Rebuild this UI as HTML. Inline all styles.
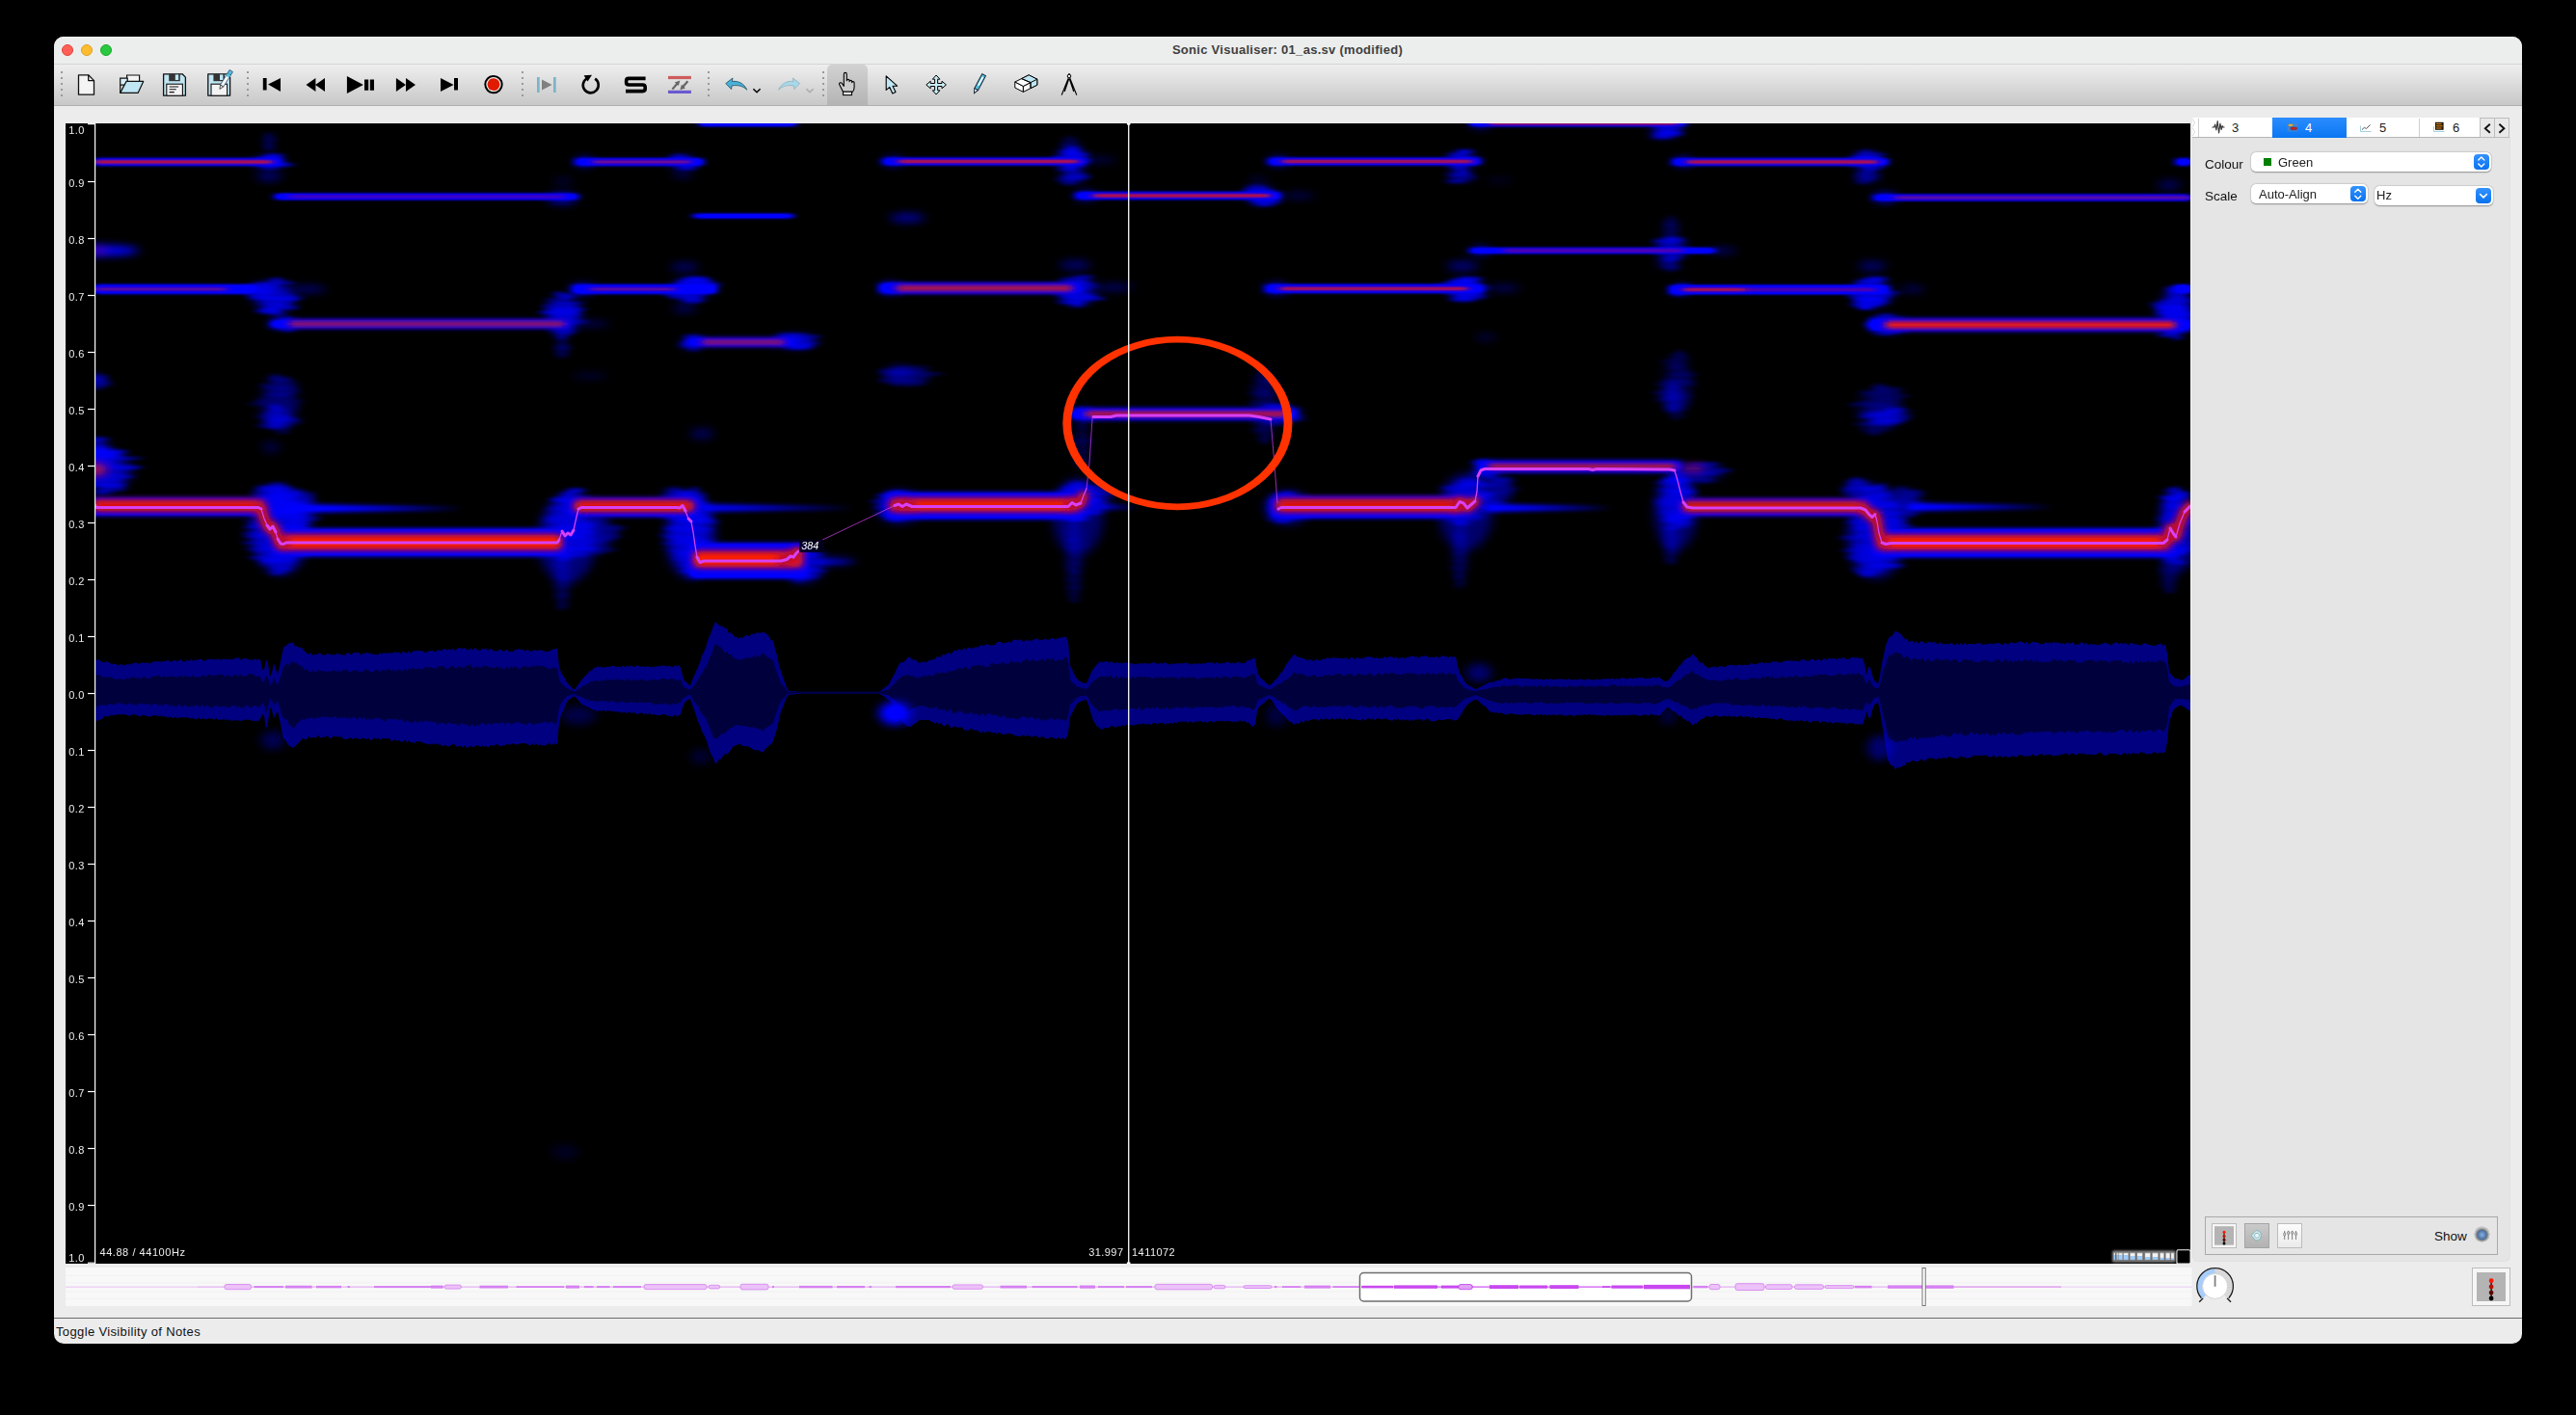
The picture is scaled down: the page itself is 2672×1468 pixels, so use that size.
<!DOCTYPE html>
<html><head><meta charset="utf-8"><title>Sonic Visualiser</title>
<style>
html,body{margin:0;padding:0;background:#000}
body{width:2672px;height:1468px;position:relative;overflow:hidden;font-family:"Liberation Sans",sans-serif;color:#000}
div,svg{position:absolute;box-sizing:border-box}
#win{left:56px;top:38px;width:2560px;height:1356px;background:#ececec;border-radius:10px}
#tsep{left:56px;top:66px;width:2560px;height:1px;background:#d4d4d4}
#tbar{left:56px;top:38px;width:2560px;height:28px;background:#eceeed;border-radius:10px 10px 0 0}
.tl{top:46px;width:12px;height:12px;border-radius:6px;border:0.5px solid}
#title{left:1135.5px;letter-spacing:.28px;top:43px;width:400px;height:18px;line-height:18px;text-align:center;font-weight:bold;font-size:13px;color:#3f3f3f;white-space:nowrap}
#tb{left:56px;top:67px;width:2560px;height:43px;background:linear-gradient(#eeeeee,#e3e3e3 30%,#d6d6d6 62%,#c8c8c8);border-bottom:1px solid #b0b0b0}
#tbsel{left:858px;top:67px;width:42px;height:42px;background:linear-gradient(#d2d2d2,#c6c6c6 40%,#b4b4b4);border-radius:5px 5px 0 0}
.hd{top:74px;width:2px;height:26px;background:repeating-linear-gradient(#999 0 2px,transparent 2px 6px)}
#tbi{left:56px;top:66px}
#ssep{left:56px;top:1367px;width:2560px;height:1px;background:#6c6c6c}
#status{left:58px;top:1374px;letter-spacing:.36px;font-size:13px;line-height:16px;white-space:nowrap;color:#111}

#pn{left:2274px;top:142px;width:330px;height:1167px;background:#e5e5e5;border-radius:0 0 6px 6px;border:1px solid #e0e0e0;border-top:none}
#tabs{left:2274px;top:122px;width:329px;height:21px;background:#fff;border-bottom:1px solid #b4b4b4}
#tab4{left:2357px;top:122px;width:77px;height:21px;background:linear-gradient(#2b8dff,#0a76f2)}
.tdv{top:123px;width:1px;height:19px;background:#d0d0d0}
.tn{top:124.6px;font-size:13px;line-height:16px;color:#222}
.sb{top:122px;width:16px;height:21px;background:#e9e9e9;border:1px solid #bdbdbd}
#pni{left:2272px;top:118px}
.lb{font-size:13.500px;line-height:16px;color:#111;white-space:nowrap}
.cb{background:#fff;border-radius:5px;box-shadow:0 .5px 1.500px rgba(0,0,0,.35),0 0 0 .5px rgba(0,0,0,.08)}
.ct{font-size:13px;line-height:15px;color:#222;white-space:nowrap}
#sw{left:2348px;top:164px;width:8px;height:8px;background:#008000}
.bb{width:16px;height:16px;border-radius:4px;background:linear-gradient(#3392ff,#0a72ee)}
#cbi{left:2430px;top:155px}
#gb{left:2287px;top:1262px;width:304px;height:40px;border:1px solid #a9a9a9}
.btn{width:26px;height:26px;border:1px solid #bcbcbc}
#led{left:2567px;top:1273px;width:15px;height:15px;border-radius:8px;background:radial-gradient(circle 7.500px at 50% 54%,#8ab0dc 0,#6089bc 40%,#4d6f9c 62%,#6c7c90 70%,#8c8c8c 80%,#c2c2c2 100%);box-shadow:0 0 0 .5px #aaa}
#bbtn{left:2564px;top:1315px;width:40px;height:40px;background:#f6f6f6;border:1px solid #bcbcbc}
#bti{left:2272px;top:1255px}

#pane{left:68px;top:128px}
#ov{left:68px;top:1311px}
</style></head>
<body>
<div id="win"></div>
<div id="tbar"></div><div id="tsep"></div>
<div class="tl" style="left:64px;background:#ff5f57;border-color:#e0443e"></div>
<div class="tl" style="left:84px;background:#febc2e;border-color:#dea123"></div>
<div class="tl" style="left:104px;background:#28c840;border-color:#1aab29"></div>
<div id="title">Sonic Visualiser: 01_as.sv (modified)</div>
<div id="tb"></div>
<div id="tbsel"></div>
<div class="hd" style="left:63px"></div>
<div class="hd" style="left:256px"></div>
<div class="hd" style="left:541px"></div>
<div class="hd" style="left:734px"></div>
<div class="hd" style="left:853px"></div>
<svg id="tbi" viewBox="56 66 1100 44" width="1100" height="44">
<path d="M81.5 77.8h10.2l5.8 5.8v14.6h-16z" fill="#f4f4f4" stroke="#111" stroke-width="1.3" stroke-linejoin="round"/>
<path d="M91.7 77.8v5.8h5.8" fill="none" stroke="#111" stroke-width="1.3" stroke-linejoin="round"/>
<path d="M131.6 78h13v10h-13z" fill="#f4f4f4" stroke="#111" stroke-width="1.2"/>
<path d="M124.7 81.2h7.5v7h-7.5z M124.7 81.2v15.2" fill="#d8eef6" stroke="#111" stroke-width="1.2"/>
<path d="M124.7 96.4l6.4-12h17.6l-5.6 12z" fill="#bfe6f2" stroke="#111" stroke-width="1.2" stroke-linejoin="round"/>
<path d="M169.6 76.8h19.5l3.3 3.3v19.1h-22.8z" fill="#bfe6f2" stroke="#111" stroke-width="1.3" stroke-linejoin="round"/>
<rect x="175.2" y="76.8" width="11.6" height="7.4" fill="#333"/>
<rect x="181.8" y="77.4" width="3.4" height="5.6" fill="#bfe6f2"/>
<rect x="172.8" y="87.2" width="16.6" height="12" fill="#f4f4f4" stroke="#111" stroke-width="1.1"/>
<path d="M175.6 90h9.6M175.6 92.8h7.2M175.6 95.6h5.2" stroke="#111" stroke-width="1.1"/>
<path d="M215.8 76.8h19.5l3.3 3.3v19.1h-22.8z" fill="#bfe6f2" stroke="#111" stroke-width="1.3" stroke-linejoin="round"/>
<rect x="221.4" y="76.8" width="11.6" height="7.4" fill="#333"/>
<rect x="228" y="77.4" width="3.4" height="5.6" fill="#bfe6f2"/>
<rect x="219" y="87.2" width="16.6" height="12" fill="#f4f4f4" stroke="#111" stroke-width="1.1"/>
<g transform="translate(238.6 75.4) rotate(32)"><rect x="-2" y="-2.2" width="4" height="4.2" fill="#55bfe0" stroke="#246" stroke-width=".7"/><rect x="-1.9" y="2" width="3.8" height="14" fill="#f8f8f8" stroke="#246" stroke-width=".7"/><rect x="-1.9" y="2" width="3.8" height="3" fill="#55bfe0"/><path d="M-1.9 16l1.9 4.2l1.9-4.2z" fill="#ddd" stroke="#333" stroke-width=".7"/></g>
<path d="M272.8 81h3.8v12.6h-3.8z M291 81v14l-13-7.6z" fill="#000"/>
<path d="M327.4 81v14l-9.9-7z M337 81v14l-9.9-7z" fill="#000"/>
<path d="M359.9 78.9v18.1l17-9z M378 82.4h4.2v11.4h-4.2z M383.8 82.4h4.2v11.4h-4.2z" fill="#000"/>
<path d="M410.9 81v14l10-7z M421 81v14l10-7z" fill="#000"/>
<path d="M457 81v14l13.6-7z M471 81h4v12.6h-4z" fill="#000"/>
<circle cx="512" cy="87.6" r="8.7" fill="#eee" stroke="#000" stroke-width="2"/><circle cx="512" cy="87.6" r="6.4" fill="#e01b00"/>
<path d="M557 80h2.7v16h-2.7z M574 80h2.7v16h-2.7z" fill="#7ab5c9"/><path d="M562 82.4v11l10.6-5.5z" fill="#808080"/>
<path d="M608.6 81.5a8 8 0 1 0 8.6 0.2" fill="none" stroke="#000" stroke-width="2.6"/><path d="M605.6 78.2l8.4-0.4l-4.4 6.6z" fill="#000"/>
<path d="M669.6 81.4h-17.4q-2.6 0-2.6 2.6v1.4q0 2.6 2.6 2.6h14.4q2.6 0 2.6 2.6v1.4q0 2.6-2.6 2.6h-17.6" fill="none" stroke="#000" stroke-width="3.6"/>
<rect x="693" y="78.9" width="23.9" height="3.2" fill="#cd5c5c"/><rect x="693" y="93.8" width="23.9" height="3.2" fill="#6a5acd"/>
<path d="M697.4 92.6L702.4 86.8" stroke="#666" stroke-width="2.2"/><path d="M705.4 83.6l-5.6 1.8l4 3.7z" fill="#666"/>
<path d="M713.4 84.2L708.4 90" stroke="#666" stroke-width="2.2"/><path d="M705.4 93.2l5.6-1.8l-4-3.7z" fill="#666"/>
<path d="M752.8 86.6l7.2-5.6l-0.6 3.4c7 -0.6 12.4 2.4 15.4 8.8c-4-4-9.4-5.4-15.8-4.2l-0.4 3.6z" fill="#4ab1d8" stroke="#1d4a60" stroke-width=".8" stroke-linejoin="round"/>
<path d="M781.4 92.2l3.6 3.6l3.6-3.6" fill="none" stroke="#000" stroke-width="1.5"/>
<path d="M829.6 86.6l-7.2-5.6l0.6 3.4c-7 -0.6-12.4 2.4-15.4 8.8c4-4 9.4-5.4 15.8-4.2l0.4 3.6z" fill="#a9d8e8" stroke="#8ab0bf" stroke-width=".8" stroke-linejoin="round"/>
<path d="M836.4 92.2l3.6 3.6l3.6-3.6" fill="none" stroke="#aaa" stroke-width="1.5"/>
<path d="M874.5 95.2l-3.8-7.4q-0.6-1.6 0.8-2q1.2-0.2 2.2 1.2l1.6 2.4v-12.2q0-1.8 1.5-1.8q1.5 0 1.5 1.8v6.6q0-1.4 1.4-1.4q1.4 0 1.4 1.4v0.8q0-1.2 1.3-1.2q1.3 0 1.3 1.2v1q0-1 1.2-1q1.2 0 1.2 1.4v4.4q0 2.6-1.6 4.8z" fill="#ccc" stroke="#000" stroke-width="1.1" stroke-linejoin="round"/>
<rect x="874.5" y="95.2" width="9" height="3.4" fill="#fff" stroke="#000" stroke-width="1.1"/>
<path d="M919.2 78.8v14.6l3.6-3l3 6.6l3.2-1.4l-3-6.4h4.6z" fill="#c0e8f4" stroke="#000" stroke-width="1.1" stroke-linejoin="round"/>
<path d="M971.1 78l3.8 4.2h-2.3v4.3h4.4v-2.3l4.4 3.8l-4.4 3.8v-2.3h-4.4v4.3h2.3l-3.8 4.2l-3.8-4.2h2.3v-4.3h-4.4v2.3l-4.4-3.8l4.4-3.8v2.3h4.4v-4.3h-2.3z" fill="#c8ecf6" stroke="#000" stroke-width="1" stroke-linejoin="round"/>
<g transform="translate(1020.6 77.6) rotate(28)"><rect x="-2.1" y="0" width="4.2" height="17" fill="#55bfe0" stroke="#123" stroke-width=".9"/><rect x="-0.7" y="2.5" width="1.6" height="10" fill="#fff"/><path d="M-2.1 17l2.1 4.6l2.1-4.6z" fill="#f4f4f4" stroke="#123" stroke-width=".9"/></g>
<path d="M1052.8 85l8.6 4.4v6l-8.6-4.4z" fill="#fff" stroke="#000" stroke-width="1"/><path d="M1061.4 89.4l14.4-7.2v6l-14.4 7.2z" fill="#fff" stroke="#000" stroke-width="1"/><path d="M1052.8 85l14.4-7.2l8.6 4.4l-14.4 7.2z" fill="#fff" stroke="#000" stroke-width="1" stroke-linejoin="round"/><path d="M1059.6 81.6l7.6-3.8l8.6 4.4v6l-6.8 3.4v-6z" fill="#bfe6f2" stroke="#000" stroke-width="1" stroke-linejoin="round"/><path d="M1059.6 81.6l9.4 4l6.8-3.4M1069 85.6v6" fill="none" stroke="#000" stroke-width="1"/>
<circle cx="1109" cy="79" r="1.8" fill="#eee" stroke="#000" stroke-width="1"/><path d="M1108.4 80.6l-7.2 18M1109.6 80.6l7.2 18M1108.6 82l-4.4 13M1109.4 82l4.4 13M1109 76v1.4" stroke="#000" stroke-width="1.2" fill="none"/>
</svg>
<div id="ssep"></div>
<div id="status">Toggle Visibility of Notes</div>
<svg id="pane" viewBox="68 128 2204 1183" width="2204" height="1183">
<defs>
<filter id="bB" filterUnits="userSpaceOnUse" x="28" y="88" width="2284" height="1263"><feGaussianBlur stdDeviation="6 4.5"/><feComponentTransfer><feFuncA type="linear" slope="1.1"/></feComponentTransfer></filter>
<filter id="bS" filterUnits="userSpaceOnUse" x="28" y="88" width="2284" height="1263"><feGaussianBlur stdDeviation="4.5 1.5"/><feComponentTransfer><feFuncA type="linear" slope="1"/></feComponentTransfer></filter>
<filter id="bL" filterUnits="userSpaceOnUse" x="28" y="88" width="2284" height="1263"><feGaussianBlur stdDeviation="5 1.4"/><feComponentTransfer><feFuncA type="linear" slope="1.55"/></feComponentTransfer></filter>
<filter id="bC" filterUnits="userSpaceOnUse" x="28" y="88" width="2284" height="1263"><feGaussianBlur stdDeviation="5 0.9"/><feComponentTransfer><feFuncA type="linear" slope="1.3"/></feComponentTransfer></filter>
<filter id="bM" filterUnits="userSpaceOnUse" x="28" y="88" width="2284" height="1263"><feGaussianBlur stdDeviation="5 2.8"/><feComponentTransfer><feFuncA type="linear" slope="1.7"/></feComponentTransfer></filter>
<filter id="bR" filterUnits="userSpaceOnUse" x="28" y="88" width="2284" height="1263"><feGaussianBlur stdDeviation="4 2.8"/><feComponentTransfer><feFuncA type="linear" slope="1.3"/></feComponentTransfer></filter>
<filter id="bR2" filterUnits="userSpaceOnUse" x="28" y="88" width="2284" height="1263"><feGaussianBlur stdDeviation="4 3"/><feComponentTransfer><feFuncA type="linear" slope="1.3"/></feComponentTransfer></filter>
<filter id="bP" filterUnits="userSpaceOnUse" x="28" y="88" width="2284" height="1263"><feGaussianBlur stdDeviation="5 3"/><feComponentTransfer><feFuncA type="linear" slope="1"/></feComponentTransfer></filter>
<filter id="bN" filterUnits="userSpaceOnUse" x="28" y="88" width="2284" height="1263"><feGaussianBlur stdDeviation="5 2.6"/><feComponentTransfer><feFuncA type="linear" slope="1.5"/></feComponentTransfer></filter>
<clipPath id="cp"><rect x="99" y="128" width="2173" height="1183"/></clipPath>
</defs>
<rect x="68" y="128" width="2204" height="1183" fill="#000"/>
<g clip-path="url(#cp)">
<polygon points="98,684 100,685 102,684.1 104,685.5 106,686.4 108,687.8 110,686.1 112,686.7 114,688.1 116,688.8 118,688.7 120,688.7 122,690.3 124,689.7 126,688.7 128,690.5 130,689.6 132,689.2 134,689.5 136,688.7 138,688 140,687.8 142,687.5 144,689.1 146,687.8 148,687.2 150,688.1 152,687.4 154,687.6 156,688.4 158,686.9 160,685.9 162,686.5 164,685.7 166,686.9 168,686.1 170,686.2 172,685.7 174,684.7 176,686 178,686.8 180,684.9 182,685.3 184,686.6 186,684.8 188,684.3 190,686.6 192,686.6 194,684.5 196,686.1 198,684.1 200,685.8 202,684.6 204,684.7 206,683.9 208,683.9 210,684.4 212,686 214,684.5 216,683.9 218,683.8 220,684 222,684.1 224,684.4 226,682.9 228,684.8 230,684.3 232,683.3 234,684.1 236,684.2 238,683.7 240,684.3 242,683.9 244,682.6 246,682.4 248,682.5 250,684.7 252,683.5 254,683 256,683.2 258,684.3 260,684.6 262,685.2 264,683.3 266,684.5 268,683.9 270,683.9 272,694.4 274,695.3 276,684 278,688.3 280,702.1 282,698 284,688 286,693.5 288,699.5 290,691.4 292,681 294,671.5 296,670.6 298,668.4 300,667.3 302,666.9 304,666.6 306,670.6 308,669.9 310,671.8 312,671.7 314,673 316,675.8 318,677.2 320,679.1 322,677 324,679.7 326,679 328,679.2 330,678 332,677.6 334,679.3 336,679.8 338,679.3 340,677.4 342,679.5 344,678.7 346,679.2 348,679.4 350,677.2 352,679.2 354,678.5 356,680.1 358,679.6 360,677.6 362,677.3 364,679.5 366,677.6 368,676.8 370,677.2 372,676.8 374,679.7 376,677.9 378,677.8 380,677 382,677.4 384,677.8 386,678.6 388,678.8 390,678.9 392,679.4 394,677.4 396,678.5 398,676.9 400,677.9 402,677.6 404,677.2 406,677.8 408,677.2 410,675.9 412,677.2 414,676.4 416,678.4 418,675.4 420,677 422,677.7 424,675.3 426,677.8 428,676.1 430,675.3 432,674.9 434,674.7 436,675.5 438,675.1 440,676.8 442,677 444,675.4 446,675.8 448,674.6 450,676 452,676.4 454,673.9 456,674.7 458,675.1 460,673.5 462,672.9 464,675 466,673.1 468,674.5 470,672.8 472,675.2 474,673.2 476,672.1 478,672.4 480,673 482,671.7 484,673.9 486,674.5 488,672.5 490,674.6 492,672.5 494,673.1 496,674.9 498,674.7 500,673.2 502,672.9 504,672.5 506,675.3 508,672.9 510,673.5 512,675.2 514,675.6 516,675.4 518,673.6 520,674.5 522,675.9 524,674.9 526,673.5 528,676.5 530,676.1 532,676.3 534,674 536,674.1 538,673.3 540,674.2 542,673.4 544,675.3 546,674.5 548,674.2 550,675.9 552,675.5 554,674.5 556,674.6 558,675.1 560,674.3 562,674.7 564,675.6 566,676 568,676 570,675.6 572,674.2 574,673.6 576,673.3 578,673 580,691.8 582,697.8 584,701 586,704 588,708.2 590,710.1 592,712.1 594,714.5 596,715.3 598,712.7 600,709.9 602,706.9 604,704.4 606,701.9 608,700.5 610,697.9 612,696 614,695.5 616,692.8 618,692.8 620,691.1 622,692.6 624,691.6 626,692.4 628,692.2 630,691.5 632,692.1 634,691 636,690.7 638,691.2 640,692 642,691.2 644,692.5 646,690.6 648,692 650,691.1 652,691.4 654,690.5 656,690.9 658,692.2 660,690.5 662,690.4 664,692 666,690.9 668,691.9 670,691.5 672,690.9 674,692.2 676,691.9 678,692.1 680,691.6 682,691.2 684,691.1 686,690.6 688,690.4 690,690.8 692,691.6 694,690.2 696,691.8 698,692 700,690.2 702,691.3 704,690.1 706,692.6 708,700.7 710,706.5 712,707.8 714,710.3 716,711.1 718,705.8 720,701.1 722,696.7 724,691.7 726,687.4 728,680.2 730,676.5 732,671.9 734,664.4 736,659.8 738,655 740,649.2 742,645 744,646.9 746,648.8 748,649.8 750,649.9 752,651.7 754,652.6 756,656.9 758,656 760,658.1 762,660.7 764,660.5 766,663 768,661 770,661.7 772,660.8 774,658.6 776,659.9 778,659.4 780,657.6 782,658.1 784,656.7 786,656 788,656.9 790,656.1 792,655.7 794,657.3 796,658 798,660.9 800,664.6 802,664.7 804,674 806,680.2 808,689.8 810,696.5 812,702.6 814,707.8 816,713.5 818,716.6 820,716.9 822,717.1 824,717.2 826,717.4 828,717.6 830,717.8 832,717.8 834,717.8 836,717.8 838,717.8 840,717.8 842,717.8 844,717.8 846,717.8 848,717.8 850,717.8 852,717.8 854,717.8 856,717.8 858,717.8 860,717.8 862,717.8 864,717.8 866,717.8 868,717.8 870,717.8 872,717.8 874,717.8 876,717.8 878,717.8 880,717.8 882,717.8 884,717.8 886,717.8 888,717.8 890,717.8 892,717.8 894,717.8 896,717.8 898,717.8 900,717.8 902,717.8 904,717.8 906,717.8 908,717.8 910,717.8 912,717.8 914,716.2 916,714.7 918,713.1 920,711.5 922,709.9 924,706.1 926,702.3 928,698.8 930,693.9 932,690.2 934,687.2 936,687.6 938,686 940,684.6 942,681.6 944,682.1 946,684.2 948,684.2 950,684.8 952,687 954,687.7 956,686.7 958,686.5 960,687.4 962,686.2 964,684.8 966,685 968,684.1 970,683.5 972,681.1 974,681.4 976,681.8 978,678.7 980,679.6 982,678.3 984,676.9 986,678.4 988,677.3 990,674.3 992,675.6 994,673.4 996,674.2 998,674.5 1000,672.1 1002,674.4 1004,671.6 1006,672.3 1008,672.5 1010,672.4 1012,670.7 1014,672.1 1016,670.1 1018,668.9 1020,669.9 1022,669.2 1024,668 1026,669.6 1028,669.5 1030,669.2 1032,669.1 1034,666.4 1036,665.7 1038,666 1040,667.4 1042,666.7 1044,666.8 1046,665.7 1048,666.7 1050,664.9 1052,663.6 1054,663.8 1056,664.3 1058,663.3 1060,664.6 1062,665.9 1064,663.4 1066,664.7 1068,664.2 1070,664.9 1072,663.6 1074,663.1 1076,662.2 1078,664.2 1080,664 1082,663.7 1084,662.4 1086,663.5 1088,663.8 1090,662.6 1092,661.8 1094,663.3 1096,662.7 1098,662 1100,661.5 1102,661.3 1104,660.4 1106,661 1108,666.1 1110,690.5 1112,694.2 1114,699.1 1116,703 1118,705.3 1120,706.4 1122,707.8 1124,708.3 1126,709.3 1128,707.1 1130,702 1132,696.9 1134,693.9 1136,691.4 1138,688.9 1140,687.1 1142,686.2 1144,687.2 1146,686.3 1148,686.3 1150,687.6 1152,686 1154,687.3 1156,688.2 1158,687.1 1160,687.7 1162,687.7 1164,688.3 1166,687.5 1168,686.9 1170,688.2 1172,687.9 1174,688.1 1176,689.3 1178,689.1 1180,689.1 1182,688.1 1184,688.5 1186,688.5 1188,687.6 1190,689 1192,688.2 1194,688.3 1196,687.2 1198,687.2 1200,688.5 1202,688.9 1204,687.4 1206,688.5 1208,687.1 1210,688.1 1212,689.4 1214,689.1 1216,688.3 1218,688.9 1220,688.3 1222,688 1224,688.5 1226,688.2 1228,688 1230,687.8 1232,687.6 1234,689.3 1236,689.2 1238,688.2 1240,688.5 1242,689 1244,688.1 1246,689.3 1248,687.8 1250,688.4 1252,687.4 1254,687.2 1256,687.6 1258,687.1 1260,689 1262,687 1264,688.2 1266,688.3 1268,688 1270,688.2 1272,686.8 1274,686.4 1276,688.3 1278,687.3 1280,688.2 1282,688.2 1284,686.3 1286,687.8 1288,687.7 1290,688.2 1292,687.6 1294,684.6 1296,685.6 1298,683.8 1300,683.3 1302,683 1304,696.5 1306,701.1 1308,703.9 1310,704.9 1312,707.2 1314,709.2 1316,710.8 1318,710.5 1320,708.4 1322,705.9 1324,704.2 1326,701.9 1328,698.5 1330,696.7 1332,693.5 1334,689.4 1336,686.9 1338,684.1 1340,681.7 1342,679.1 1344,679.4 1346,681.9 1348,681.7 1350,682.7 1352,683 1354,683.7 1356,685.6 1358,684.3 1360,684.4 1362,685.7 1364,684.7 1366,683.9 1368,685.2 1370,685 1372,683.4 1374,684.2 1376,682.4 1378,682.4 1380,683.2 1382,682.2 1384,682 1386,683.1 1388,682.2 1390,683.2 1392,682.7 1394,683.6 1396,681.7 1398,684.1 1400,683.6 1402,681.4 1404,683.3 1406,683.7 1408,681.7 1410,683.1 1412,683.3 1414,682.9 1416,681.4 1418,681.6 1420,681.3 1422,681.5 1424,682 1426,682.9 1428,681.9 1430,683.2 1432,682.8 1434,683.2 1436,681 1438,682.4 1440,682 1442,680.7 1444,682 1446,682.5 1448,681.3 1450,683.4 1452,683 1454,681.5 1456,683.2 1458,682.6 1460,682 1462,681.3 1464,681 1466,680.3 1468,681.9 1470,681.1 1472,682.9 1474,680.4 1476,681.1 1478,680.2 1480,680.8 1482,682.1 1484,681.7 1486,682.1 1488,682.3 1490,680.4 1492,682.6 1494,681.7 1496,679.9 1498,680.7 1500,681.1 1502,682.6 1504,680.6 1506,681.9 1508,681.2 1510,681.3 1512,690.8 1514,698.2 1516,701.2 1518,704.7 1520,708.8 1522,710 1524,711.6 1526,712.2 1528,713.3 1530,714.8 1532,714.7 1534,713.3 1536,712.6 1538,711.6 1540,710.5 1542,709.5 1544,708.6 1546,707.5 1548,707.9 1550,706.9 1552,706.6 1554,705.4 1556,706 1558,704.4 1560,703.4 1562,703.3 1564,703.8 1566,704.9 1568,704.4 1570,704 1572,703.8 1574,703.5 1576,703.6 1578,704 1580,703.7 1582,703.9 1584,703.5 1586,704.1 1588,704.4 1590,705.1 1592,704.3 1594,704.3 1596,704.7 1598,704.3 1600,705.2 1602,704.9 1604,704.2 1606,705.3 1608,704.1 1610,705 1612,705 1614,704.2 1616,704.7 1618,704.2 1620,704.8 1622,704.2 1624,705.5 1626,704.6 1628,704.2 1630,705.5 1632,704.8 1634,704.9 1636,705.3 1638,704.7 1640,704.3 1642,705.3 1644,705.4 1646,704.2 1648,704.5 1650,705.1 1652,705.2 1654,705.4 1656,704.3 1658,705 1660,705.2 1662,704.3 1664,704.3 1666,704.3 1668,704.1 1670,704.7 1672,703.4 1674,704.6 1676,704.5 1678,703.9 1680,704.7 1682,703 1684,703.5 1686,703.9 1688,704.5 1690,703.2 1692,703.6 1694,704.2 1696,702.8 1698,703.7 1700,703.1 1702,703.4 1704,702.6 1706,704.1 1708,704.1 1710,703.6 1712,703.9 1714,702.4 1716,703 1718,703.4 1720,702.2 1722,703.2 1724,705.1 1726,706.3 1728,707.1 1730,706.1 1732,704 1734,701.5 1736,697.7 1738,696.4 1740,693.4 1742,690.3 1744,689.4 1746,685.6 1748,684.2 1750,682.5 1752,682.3 1754,681.1 1756,678.2 1758,680.9 1760,682.2 1762,685.9 1764,687.7 1766,687.6 1768,690.3 1770,691.5 1772,692.9 1774,692.6 1776,691.9 1778,691.3 1780,692.8 1782,692 1784,691 1786,691.6 1788,691.8 1790,691.9 1792,690.1 1794,690.1 1796,689.9 1798,690 1800,690.5 1802,690.6 1804,689.3 1806,690.1 1808,690.3 1810,689.4 1812,689.9 1814,690 1816,688.2 1818,688.6 1820,689 1822,689.1 1824,688 1826,687.7 1828,686.8 1830,688.6 1832,687.3 1834,687.9 1836,687.9 1838,686.3 1840,686.4 1842,686.3 1844,686.6 1846,688 1848,686.7 1850,686.4 1852,685.3 1854,685.9 1856,685 1858,685.6 1860,685.8 1862,685.3 1864,686 1866,686.4 1868,684.8 1870,684.1 1872,684.7 1874,685.5 1876,686 1878,684.2 1880,683.8 1882,685.1 1884,685.2 1886,683.5 1888,685.2 1890,685.1 1892,682.7 1894,685 1896,683.4 1898,683 1900,683.6 1902,682.9 1904,683.6 1906,684.1 1908,682.4 1910,683.7 1912,681.8 1914,683.2 1916,684 1918,683.5 1920,682.7 1922,681.4 1924,682.4 1926,682 1928,683.1 1930,682.9 1932,682.8 1934,688.8 1936,700.4 1938,691.8 1940,692.4 1942,700.3 1944,705.9 1946,707.6 1948,709.2 1950,701.2 1952,688.3 1954,679.2 1956,669.5 1958,664.2 1960,660.5 1962,660.1 1964,658.1 1966,654.4 1968,655.5 1970,656.6 1972,658.1 1974,660.8 1976,663.6 1978,662.3 1980,665.9 1982,665 1984,664.7 1986,667.2 1988,665.2 1990,667.7 1992,665.3 1994,665.6 1996,667.3 1998,667.4 2000,665.6 2002,666.5 2004,666.8 2006,665.7 2008,667.1 2010,668.5 2012,666.1 2014,667.8 2016,668.2 2018,668.1 2020,668.2 2022,668 2024,666.9 2026,668.3 2028,669.5 2030,667.2 2032,669.3 2034,666.8 2036,669.4 2038,666.8 2040,669.1 2042,668 2044,668.1 2046,667.9 2048,668.5 2050,667.6 2052,667.5 2054,667.2 2056,668.7 2058,668.4 2060,668.4 2062,668.2 2064,667.2 2066,668.2 2068,668.1 2070,667.2 2072,667.2 2074,666.9 2076,668.9 2078,668.4 2080,666.5 2082,668.5 2084,668.1 2086,665.9 2088,666.7 2090,667.2 2092,666.8 2094,665.8 2096,665.5 2098,666 2100,667.8 2102,665.5 2104,668.5 2106,667.4 2108,665.7 2110,665.9 2112,666.4 2114,666.5 2116,667.9 2118,668.2 2120,668.3 2122,665.7 2124,667.8 2126,666.1 2128,667.8 2130,665.8 2132,666.9 2134,666.6 2136,666.6 2138,668.2 2140,667 2142,668.6 2144,666.6 2146,667.3 2148,667.4 2150,666.3 2152,668.9 2154,668.3 2156,668.7 2158,666.8 2160,666.3 2162,668.4 2164,666.7 2166,669.2 2168,668.2 2170,668.5 2172,668.1 2174,669.2 2176,669.1 2178,669.1 2180,667.6 2182,668.1 2184,666.3 2186,667.9 2188,668.3 2190,669.5 2192,667.4 2194,666.4 2196,666.4 2198,668.2 2200,666.8 2202,668.1 2204,667.2 2206,667.8 2208,669.6 2210,666.7 2212,667.5 2214,667.9 2216,668.7 2218,668.7 2220,669.7 2222,668.5 2224,667.4 2226,666.9 2228,668.9 2230,668.9 2232,669.8 2234,669.8 2236,669.7 2238,668.9 2240,667.5 2242,668.1 2244,669.9 2246,668.3 2248,677.9 2250,697 2252,699.4 2254,701.4 2256,703.9 2258,703.7 2260,704.6 2262,705.5 2264,705.4 2266,704.2 2268,702.2 2270,700.5 2272,700.2 2272,738.3 2270,736.2 2268,735.5 2266,734 2264,732.6 2262,731.7 2260,732.3 2258,733.8 2256,735.1 2254,737.1 2252,743.4 2250,748.3 2248,769.6 2246,780 2244,781.3 2242,780.9 2240,780.4 2238,782 2236,780.4 2234,780.3 2232,782.2 2230,782 2228,782.4 2226,782.2 2224,781.1 2222,780.5 2220,780.6 2218,781.9 2216,781.7 2214,781.8 2212,781 2210,783.1 2208,781.1 2206,783.1 2204,780.8 2202,782.2 2200,783.4 2198,782.7 2196,782.4 2194,781.7 2192,781.8 2190,782 2188,781.3 2186,783.7 2184,783.7 2182,783.7 2180,781.2 2178,781.1 2176,781.4 2174,783.3 2172,783 2170,782.7 2168,782.7 2166,782.6 2164,783.2 2162,781.4 2160,782 2158,781.8 2156,781.6 2154,783.1 2152,783.1 2150,781.6 2148,782 2146,783.7 2144,781.6 2142,781.7 2140,782.8 2138,782.3 2136,784.2 2134,782.9 2132,784.1 2130,784.5 2128,783.7 2126,782.2 2124,783.8 2122,782.6 2120,784.6 2118,782.1 2116,782.4 2114,783.4 2112,784.6 2110,783.8 2108,782.3 2106,784.5 2104,784.4 2102,784.6 2100,784.8 2098,783.8 2096,783.3 2094,783.2 2092,785.5 2090,784.7 2088,784.4 2086,785.3 2084,785.6 2082,785.7 2080,784.1 2078,786 2076,785 2074,784 2072,785.3 2070,785.8 2068,783.2 2066,785.7 2064,785.1 2062,785.1 2060,783.3 2058,783.8 2056,783.7 2054,783.7 2052,783.8 2050,783.9 2048,783.6 2046,784.5 2044,786.1 2042,786.3 2040,786.6 2038,785.4 2036,786 2034,783.9 2032,785.9 2030,786.9 2028,786.6 2026,786.6 2024,785.7 2022,784.8 2020,786.3 2018,787.3 2016,785.3 2014,787.6 2012,786.2 2010,786.9 2008,787.9 2006,787.1 2004,786.4 2002,786.5 2000,786.7 1998,788.1 1996,790 1994,788 1992,787.7 1990,790.1 1988,790.2 1986,789.4 1984,788.7 1982,790.3 1980,790.9 1978,790.7 1976,794 1974,794.4 1972,795.5 1970,796.6 1968,795.9 1966,798.6 1964,794.5 1962,794.7 1960,791.9 1958,787.7 1956,775 1954,763.1 1952,751.1 1950,737.4 1948,728.7 1946,730 1944,731.7 1942,736.7 1940,745.5 1938,744.1 1936,737.6 1934,746.1 1932,751.9 1930,750.9 1928,751.8 1926,750.9 1924,751.6 1922,750.1 1920,750.5 1918,749.9 1916,751 1914,750.7 1912,749.5 1910,750.5 1908,749.2 1906,750 1904,749.1 1902,750.8 1900,750.1 1898,748.5 1896,750.4 1894,748.7 1892,748.6 1890,748.3 1888,750.4 1886,747.8 1884,747.9 1882,748.3 1880,747.7 1878,749.7 1876,748.7 1874,747.6 1872,748.7 1870,748.1 1868,746.8 1866,748.2 1864,747.6 1862,748.6 1860,747.7 1858,747.5 1856,747.3 1854,747.9 1852,746.8 1850,747.3 1848,745.1 1846,745.5 1844,746.1 1842,747 1840,745.3 1838,746.2 1836,745.4 1834,744.9 1832,744.6 1830,745 1828,745 1826,745.1 1824,743.7 1822,745.1 1820,745 1818,743.7 1816,745 1814,743.2 1812,743.5 1810,743.6 1808,744.2 1806,742.7 1804,742.6 1802,743.9 1800,743.4 1798,743 1796,744.1 1794,742.2 1792,743.5 1790,742.8 1788,742.9 1786,743.4 1784,743.2 1782,743.6 1780,742.1 1778,742.8 1776,743.5 1774,743.6 1772,743.8 1770,742.8 1768,744.5 1766,745.9 1764,746.2 1762,748.3 1760,750.9 1758,750.4 1756,752.5 1754,750.5 1752,748 1750,748.6 1748,746.3 1746,746.2 1744,742.5 1742,743.1 1740,740.9 1738,738.7 1736,737.8 1734,737.3 1732,734.6 1730,733.7 1728,734.5 1726,737.6 1724,739.1 1722,741.7 1720,742.6 1718,741.4 1716,742.3 1714,741.2 1712,741.3 1710,742.3 1708,742.1 1706,741.2 1704,741.9 1702,742.8 1700,742.4 1698,741.7 1696,741.7 1694,741.4 1692,742 1690,741.2 1688,742.6 1686,741.9 1684,741.5 1682,742.9 1680,741.3 1678,742.2 1676,742 1674,742.1 1672,742.6 1670,742.5 1668,741.1 1666,742.6 1664,742.7 1662,741.9 1660,742.5 1658,741.8 1656,742.3 1654,741.4 1652,741.7 1650,741.6 1648,741.1 1646,741.9 1644,741.2 1642,741.6 1640,742.1 1638,741.7 1636,741.7 1634,742.5 1632,742.9 1630,742 1628,741.4 1626,742.5 1624,742.6 1622,742.4 1620,741.8 1618,741.1 1616,742.1 1614,741.9 1612,741.4 1610,741.5 1608,741.9 1606,741.6 1604,742.4 1602,741.2 1600,742 1598,741 1596,742.2 1594,740.8 1592,742.3 1590,741.8 1588,741.4 1586,740.4 1584,741.3 1582,740.7 1580,742.1 1578,741.2 1576,741.6 1574,741 1572,741.8 1570,740.4 1568,740.3 1566,740.2 1564,741.8 1562,740.4 1560,741.5 1558,739.6 1556,739.5 1554,740.2 1552,739.1 1550,739.4 1548,738.9 1546,738.6 1544,737 1542,734.2 1540,732.5 1538,731.5 1536,729.6 1534,727.8 1532,725.8 1530,725.7 1528,726.8 1526,728.2 1524,729.6 1522,730.9 1520,733.2 1518,736.8 1516,740.4 1514,743.6 1512,746.4 1510,747 1508,747.7 1506,746.2 1504,746.2 1502,746.1 1500,745.9 1498,747.3 1496,747.1 1494,747 1492,746.4 1490,747.4 1488,748.3 1486,748.6 1484,748.3 1482,746.3 1480,745.7 1478,747.1 1476,747.9 1474,746.1 1472,746.6 1470,746.4 1468,746.4 1466,748.1 1464,746.2 1462,748.3 1460,746.6 1458,746.9 1456,747.4 1454,746.2 1452,747.6 1450,745.4 1448,746.9 1446,746.1 1444,748.1 1442,746.9 1440,746.9 1438,745.3 1436,746.1 1434,746.3 1432,746.2 1430,745.2 1428,745.5 1426,747.4 1424,745.4 1422,746.6 1420,745 1418,746.2 1416,747.6 1414,745.2 1412,747.6 1410,747.2 1408,747 1406,746.4 1404,746 1402,746.5 1400,744.9 1398,746.3 1396,747.1 1394,745 1392,747.1 1390,744.9 1388,746.2 1386,745.3 1384,747.1 1382,745.2 1380,746.3 1378,746.7 1376,745.5 1374,745.9 1372,746.7 1370,745.3 1368,747.9 1366,746.6 1364,746.3 1362,745.9 1360,746.7 1358,747.4 1356,748.3 1354,747.1 1352,750 1350,748.1 1348,750 1346,751.3 1344,749.9 1342,752.2 1340,749.2 1338,749 1336,746.7 1334,745.1 1332,742.2 1330,741.1 1328,738.4 1326,736.7 1324,734.1 1322,730.7 1320,727.9 1318,725.3 1316,724.8 1314,726.6 1312,728.6 1310,730.2 1308,731.7 1306,733.3 1304,737.7 1302,751.3 1300,754.3 1298,753.3 1296,749.9 1294,750 1292,748.8 1290,747.8 1288,748.9 1286,747.1 1284,748.9 1282,748.5 1280,748.9 1278,748.7 1276,748.5 1274,747.9 1272,747.7 1270,749 1268,747.7 1266,747.9 1264,748.2 1262,748.1 1260,749.3 1258,749.2 1256,747.7 1254,748.9 1252,749.7 1250,748.4 1248,749.5 1246,748 1244,748.3 1242,748.4 1240,748.4 1238,750.3 1236,748.4 1234,748.4 1232,749.9 1230,748.3 1228,748.9 1226,748.6 1224,748.8 1222,749 1220,750.6 1218,749.3 1216,751.2 1214,749.6 1212,751.1 1210,750.6 1208,751.4 1206,750.1 1204,749.9 1202,750.1 1200,751.5 1198,749.9 1196,750 1194,752.2 1192,751.1 1190,751.3 1188,751.7 1186,750 1184,751.6 1182,751.4 1180,751.3 1178,752.1 1176,752.5 1174,752.6 1172,752.1 1170,752.9 1168,751.6 1166,753.4 1164,752.1 1162,754.1 1160,753 1158,754.5 1156,754.5 1154,752.7 1152,753.6 1150,755.5 1148,754.9 1146,754.9 1144,756.4 1142,757 1140,754.4 1138,754 1136,750.7 1134,747.5 1132,741.4 1130,734.6 1128,728.2 1126,725.2 1124,726.9 1122,727.3 1120,728.6 1118,729.2 1116,732.1 1114,736.2 1112,740.1 1110,743.8 1108,759.6 1106,766 1104,766.4 1102,765.6 1100,767.1 1098,764.8 1096,766.7 1094,766.2 1092,765.2 1090,764.6 1088,766.3 1086,765.9 1084,766.2 1082,764 1080,764.5 1078,765.7 1076,764.4 1074,762.9 1072,763.9 1070,764.5 1068,763.7 1066,762.6 1064,764.4 1062,762.4 1060,763.2 1058,764.2 1056,763.6 1054,763.5 1052,762.7 1050,761.4 1048,761.6 1046,760.7 1044,761.6 1042,761.7 1040,762 1038,760.5 1036,759.8 1034,761.7 1032,759.7 1030,760.4 1028,759.5 1026,759.1 1024,758.8 1022,760.8 1020,758.2 1018,759.9 1016,759.7 1014,757.6 1012,757.5 1010,757.7 1008,756.1 1006,756.4 1004,758.1 1002,757.6 1000,757.5 998,754.3 996,754.5 994,754.7 992,754.4 990,753.4 988,754.7 986,754.9 984,751.6 982,751.5 980,753.6 978,753.1 976,749.8 974,751.8 972,749.3 970,751.1 968,749 966,748.7 964,747 962,746.9 960,747 958,746.9 956,746.9 954,746.6 952,748.8 950,750 948,751.4 946,752.6 944,754.3 942,753.8 940,753.3 938,750.8 936,748.2 934,744 932,742.9 930,739.6 928,736.1 926,732.8 924,729 922,726.2 920,724.8 918,723.5 916,722 914,720.9 912,719.6 910,719.6 908,719.6 906,719.6 904,719.6 902,719.6 900,719.6 898,719.6 896,719.6 894,719.6 892,719.6 890,719.6 888,719.6 886,719.6 884,719.6 882,719.6 880,719.6 878,719.6 876,719.6 874,719.6 872,719.6 870,719.6 868,719.6 866,719.6 864,719.6 862,719.6 860,719.6 858,719.6 856,719.6 854,719.6 852,719.6 850,719.6 848,719.6 846,719.6 844,719.6 842,719.6 840,719.6 838,719.6 836,719.6 834,719.6 832,719.6 830,719.6 828,719.8 826,720 824,720.2 822,720.5 820,720.7 818,720.9 816,723.4 814,728.3 812,733.4 810,738.1 808,746.7 806,755.4 804,762.4 802,769.1 800,772 798,773 796,775.4 794,776.2 792,780.3 790,780.4 788,778.9 786,778.1 784,778.2 782,778.3 780,776.7 778,775.4 776,774.3 774,774.3 772,773.9 770,774.1 768,772.1 766,772.2 764,772.8 762,774.2 760,774.5 758,778.2 756,780.5 754,782.8 752,782.1 750,784.3 748,787.8 746,787.6 744,790.5 742,792.8 740,786.6 738,783 736,778.6 734,771.7 732,766.2 730,762 728,758.4 726,752.5 724,748.5 722,742.2 720,736.6 718,730.7 716,725.2 714,725.5 712,727.2 710,729.1 708,734 706,741 704,742 702,743.5 700,741.6 698,743.5 696,743.2 694,742.4 692,742.4 690,741.2 688,740.8 686,741.9 684,742 682,742.1 680,741.7 678,740.7 676,741.9 674,739.8 672,741 670,740.4 668,741.2 666,739.3 664,740.1 662,740.8 660,740.7 658,739 656,739.8 654,739.6 652,738.8 650,740.1 648,738.9 646,739.2 644,739.4 642,737.9 640,738.5 638,738.6 636,737.9 634,737.5 632,737.8 630,736.8 628,738.7 626,736.6 624,738 622,736.8 620,738.2 618,737.1 616,736.3 614,736.1 612,734 610,733.4 608,732.5 606,731.7 604,731 602,728.9 600,726.7 598,724.3 596,722.4 594,723 592,724.8 590,726.1 588,728.2 586,732.7 584,737.3 582,741.2 580,749.4 578,772.2 576,771.2 574,771.7 572,773.2 570,771 568,771.7 566,773.6 564,773.6 562,773.5 560,772.2 558,773.5 556,771.1 554,773.2 552,771.3 550,773.8 548,772.5 546,771.6 544,771 542,771.1 540,771.4 538,771.8 536,772.7 534,772 532,771.2 530,772.3 528,772.7 526,771.8 524,773.5 522,773.1 520,774.3 518,774.1 516,772 514,772.4 512,774.3 510,773.1 508,773.5 506,775.2 504,773.9 502,774.7 500,773.6 498,775 496,773.3 494,773.6 492,774.5 490,775.1 488,774.1 486,775.3 484,776.1 482,773.3 480,775.5 478,773.9 476,774 474,775 472,772.6 470,772 468,773 466,774.6 464,774.6 462,772.5 460,774.2 458,773.9 456,771.3 454,773 452,771.3 450,772.5 448,771.3 446,772.7 444,771.8 442,771.7 440,770.8 438,770.5 436,769.6 434,768.9 432,769.3 430,771.3 428,769.9 426,770.3 424,768.3 422,770.3 420,767.4 418,769.5 416,769.8 414,767.7 412,768.7 410,767.4 408,768 406,769 404,766.2 402,766.2 400,766.3 398,765.9 396,766.3 394,767.6 392,765.6 390,767.1 388,765.2 386,767.8 384,767.9 382,765.6 380,767.4 378,766 376,765.8 374,766.7 372,766.8 370,765.4 368,765.8 366,767 364,765.7 362,765.6 360,766.9 358,766.9 356,766.7 354,764 352,764.5 350,764.3 348,764.4 346,763.6 344,765.4 342,766.3 340,763.9 338,763.2 336,765.3 334,765 332,765.4 330,762.8 328,765.5 326,765.2 324,765 322,765.5 320,764.1 318,767.2 316,766.9 314,766.1 312,768.1 310,770.7 308,772 306,774.5 304,775.9 302,774.8 300,774.1 298,771.1 296,767.2 294,766.1 292,756 290,746.8 288,738 286,741.1 284,745.2 282,736.5 280,733.8 278,750.1 276,756.4 274,743 272,740.6 270,745.8 268,748.1 266,748.1 264,747.8 262,748.3 260,747 258,746.8 256,746.5 254,746.8 252,747 250,748.3 248,747.6 246,747.4 244,746.7 242,748 240,747.7 238,746.7 236,746.5 234,747.2 232,745.7 230,747.1 228,746.4 226,746.9 224,744.7 222,747.1 220,745.8 218,745.6 216,745.2 214,746.6 212,746 210,745.6 208,746.3 206,744.4 204,746.4 202,746 200,745 198,745.4 196,744.9 194,744.1 192,744.4 190,744.5 188,744 186,744.6 184,745.2 182,743.6 180,745 178,744.7 176,742.9 174,745.2 172,743.3 170,743.8 168,742.7 166,742.7 164,743.1 162,742.2 160,742.1 158,742.8 156,743.7 154,743.2 152,742.9 150,742 148,741.8 146,743.3 144,743.1 142,742 140,741.4 138,741 136,742.2 134,742.8 132,741.9 130,741.3 128,740.9 126,741.6 124,741.6 122,740.7 120,741.9 118,741.7 116,742.4 114,742 112,743.7 110,743 108,743.3 106,746 104,746.8 102,746.9 100,747.9 98,748.6" fill="#000080"/><polygon points="98,701.5 100,699.7 102,700 104,700.5 106,702.2 108,703.4 110,702 112,703.3 114,701.8 116,702.9 118,704.6 120,704.1 122,705.7 124,703.4 126,705 128,704.7 130,705.1 132,702.7 134,704.8 136,702.4 138,702.4 140,703.3 142,703.6 144,702.7 146,704.7 148,702.4 150,701.6 152,704.4 154,703.4 156,704 158,701.4 160,701.7 162,700.9 164,700.9 166,701.5 168,703.3 170,700.7 172,703 174,702 176,702 178,701 180,701.9 182,702.8 184,702.7 186,701.2 188,700.8 190,703 192,700.6 194,701.9 196,701.9 198,702.8 200,700.3 202,702.9 204,702 206,702.6 208,702.8 210,699.9 212,701.2 214,702.1 216,700.1 218,699.7 220,701.2 222,700.9 224,700.6 226,699.7 228,700.1 230,699.3 232,701.6 234,702 236,700.6 238,700.4 240,702 242,701.6 244,698.9 246,701.3 248,700.9 250,699.4 252,702.2 254,700.6 256,701.4 258,699.1 260,699.3 262,699.6 264,700.2 266,702.2 268,701.4 270,701.9 272,707.8 274,706.8 276,700.4 278,703.5 280,710.7 282,709.7 284,702.7 286,707.4 288,710.9 290,704.7 292,699.5 294,693 296,689.3 298,688.9 300,690.2 302,686.7 304,686.5 306,687.7 308,687.9 310,689.9 312,690.6 314,692.4 316,694.9 318,694.1 320,696.2 322,697.5 324,694.8 326,697.5 328,697 330,694.7 332,696.4 334,696.1 336,696.1 338,697 340,697 342,696 344,697.1 346,694.6 348,696.2 350,696.6 352,696 354,697.4 356,693.9 358,695.6 360,694.6 362,697.6 364,697.3 366,695.6 368,695.5 370,694.9 372,697 374,697.2 376,697.6 378,694.6 380,694.6 382,695.5 384,697 386,697.2 388,696.3 390,694.5 392,695.2 394,697.2 396,695.5 398,694.1 400,696.8 402,693.8 404,693.9 406,695.9 408,694.3 410,696.5 412,696 414,694.1 416,695.9 418,695.9 420,693.8 422,696 424,694.1 426,694.5 428,692 430,694.3 432,694.2 434,693.6 436,693.8 438,695.2 440,692.2 442,692.3 444,692.7 446,691.8 448,693.6 450,692.7 452,693.9 454,691.7 456,691.3 458,690.9 460,690.8 462,693.7 464,693.7 466,692.9 468,691.3 470,690.8 472,693.5 474,692.8 476,690.9 478,692.9 480,692.3 482,692.8 484,690.4 486,690 488,689.1 490,692.9 492,693 494,691 496,692.6 498,691.9 500,692.7 502,690.6 504,691 506,690.9 508,692.8 510,692.5 512,692.8 514,692.4 516,691.3 518,692.7 520,692.5 522,694.5 524,693.9 526,691 528,694.3 530,691.6 532,692.9 534,691.1 536,693.1 538,693.2 540,693.7 542,692.1 544,691.1 546,691.7 548,691.9 550,691.9 552,690.5 554,692.1 556,690.5 558,690.8 560,691 562,690.9 564,691.2 566,692.3 568,694 570,693.5 572,693.7 574,692.5 576,693.3 578,693.4 580,704.8 582,708.4 584,710.5 586,712.4 588,714 590,714.7 592,716 594,717 596,717.2 598,716.3 600,714.6 602,714 604,711.6 606,711.6 608,710.1 610,709.3 612,707.6 614,706.7 616,706.9 618,705.8 620,706 622,706.9 624,705.4 626,706.4 628,705.8 630,704.3 632,705.6 634,705.9 636,704.4 638,705.7 640,704.5 642,704.4 644,705.2 646,705.6 648,706.6 650,704.2 652,704.2 654,706.6 656,705.4 658,704.8 660,706.1 662,706 664,704.6 666,704.9 668,705.9 670,706 672,706.5 674,704.6 676,705.9 678,704.5 680,705.6 682,705.7 684,705.4 686,704 688,704.1 690,703.8 692,705.7 694,704.7 696,703.9 698,704 700,706 702,705.4 704,705.7 706,705 708,710.4 710,713.6 712,714.1 714,715.2 716,715.6 718,713.6 720,710.9 722,708.1 724,704.9 726,700.9 728,699.4 730,694.5 732,692.5 734,688.5 736,681.5 738,679.2 740,672.1 742,668.3 744,669.2 746,670.5 748,671.5 750,674.5 752,677.7 754,675.6 756,679.5 758,678.4 760,680.9 762,683.2 764,683.6 766,684.3 768,684.5 770,684.7 772,682.1 774,683.6 776,681.8 778,682.5 780,682.5 782,679.2 784,682.4 786,680.4 788,681.2 790,678.3 792,677.6 794,679.8 796,681.9 798,682.7 800,684.1 802,685.2 804,692.8 806,698.1 808,703.7 810,708.9 812,711 814,713.5 816,716.5 818,717.8 820,717.7 822,717.8 824,717.9 826,718 828,718.1 830,718.2 832,718.2 834,718.2 836,718.2 838,718.2 840,718.2 842,718.2 844,718.2 846,718.2 848,718.2 850,718.3 852,718.2 854,718.3 856,718.2 858,718.2 860,718.3 862,718.2 864,718.2 866,718.2 868,718.2 870,718.2 872,718.3 874,718.3 876,718.3 878,718.2 880,718.2 882,718.2 884,718.2 886,718.2 888,718.2 890,718.3 892,718.2 894,718.3 896,718.2 898,718.2 900,718.2 902,718.3 904,718.2 906,718.3 908,718.2 910,718.3 912,718.3 914,717.5 916,716.9 918,716.1 920,715.8 922,715.4 924,712.6 926,710.9 928,709.2 930,706.5 932,705.3 934,703.2 936,701 938,701.6 940,701 942,699.5 944,701.5 946,700.5 948,702.2 950,702.7 952,703.7 954,702.1 956,702.4 958,701.3 960,700.7 962,701.9 964,699.5 966,700.9 968,701.8 970,698.8 972,697.7 974,698.6 976,698.7 978,696.9 980,698 982,698.7 984,695.4 986,697.2 988,696 990,695.9 992,694.8 994,693.2 996,692.8 998,694.5 1000,692.2 1002,691.6 1004,694.2 1006,693.8 1008,691.2 1010,690.6 1012,690.4 1014,690.1 1016,689.6 1018,691.6 1020,689.7 1022,692.3 1024,691.7 1026,691.7 1028,688.1 1030,688 1032,689.2 1034,689.5 1036,688.8 1038,688.5 1040,686.6 1042,688.4 1044,688.8 1046,688.9 1048,685.9 1050,686.5 1052,686.7 1054,688 1056,686.1 1058,688.3 1060,686.5 1062,685 1064,684.2 1066,684 1068,686.7 1070,683.9 1072,684.7 1074,685.8 1076,686.3 1078,684.7 1080,684.6 1082,683.9 1084,686 1086,682.9 1088,683.5 1090,684.5 1092,682.3 1094,685.9 1096,685.5 1098,684.6 1100,684.2 1102,685.4 1104,681.9 1106,681.2 1108,686 1110,704.4 1112,708.2 1114,709 1116,711.8 1118,712.5 1120,712.8 1122,713.9 1124,714.1 1126,715.1 1128,713.8 1130,712.1 1132,708.2 1134,707.1 1136,705.3 1138,704.1 1140,702.3 1142,701.7 1144,701.9 1146,702.5 1148,701.3 1150,701.9 1152,700.7 1154,703.6 1156,703.8 1158,700.6 1160,703.9 1162,702.6 1164,702.2 1166,703.4 1168,702.5 1170,704.4 1172,704.5 1174,701.8 1176,702.9 1178,704 1180,701.8 1182,701.9 1184,702.5 1186,702.7 1188,701.4 1190,703.6 1192,702.3 1194,703.3 1196,703.9 1198,703.2 1200,701.7 1202,703.8 1204,701.8 1206,703 1208,703.4 1210,702.4 1212,702.6 1214,703.5 1216,702.4 1218,702.6 1220,702.5 1222,704.8 1224,703.4 1226,702.1 1228,702.4 1230,703.9 1232,702.1 1234,703.2 1236,702.9 1238,702.5 1240,703.3 1242,704.7 1244,703.7 1246,703.4 1248,703 1250,703 1252,702.8 1254,702.9 1256,702.7 1258,702.5 1260,704.3 1262,701.7 1264,702.8 1266,704.1 1268,701.8 1270,701.6 1272,702.3 1274,703.3 1276,703.5 1278,702.4 1280,702.1 1282,701.3 1284,701.8 1286,703.3 1288,702 1290,704 1292,703 1294,701.5 1296,701.8 1298,699.3 1300,699.4 1302,700.4 1304,708.8 1306,710.9 1308,711.5 1310,712.6 1312,713.3 1314,714.8 1316,715.3 1318,715.1 1320,714.1 1322,712.6 1324,711.3 1326,710 1328,709.4 1330,708.2 1332,705.7 1334,705.6 1336,704.1 1338,702.4 1340,700.6 1342,697.1 1344,698.4 1346,700.1 1348,697.8 1350,700.3 1352,698.6 1354,701.3 1356,702 1358,701.3 1360,701.7 1362,700.4 1364,699.9 1366,702.5 1368,702.4 1370,701.3 1372,702.2 1374,700 1376,701 1378,699.9 1380,700.5 1382,701.5 1384,699.2 1386,699.9 1388,698.6 1390,699.6 1392,700.1 1394,701.6 1396,699.5 1398,700.8 1400,698.9 1402,698.8 1404,701.2 1406,701.3 1408,699.2 1410,698.4 1412,700.5 1414,699.8 1416,700.3 1418,700.8 1420,698.2 1422,698.8 1424,700.9 1426,701.2 1428,699.5 1430,698.3 1432,699.4 1434,700.8 1436,698.4 1438,698.2 1440,699 1442,698.8 1444,697.7 1446,698.5 1448,699.4 1450,699.5 1452,699.7 1454,700.3 1456,698.5 1458,699.7 1460,697.6 1462,699.1 1464,698.6 1466,698.9 1468,697.9 1470,699.9 1472,700.6 1474,699.3 1476,698.7 1478,700.5 1480,697.7 1482,698.6 1484,699.5 1486,699.3 1488,698.3 1490,700.2 1492,698.2 1494,699.5 1496,697.1 1498,699.1 1500,700.3 1502,699.1 1504,697.4 1506,699.9 1508,698.9 1510,699.5 1512,705.4 1514,708.4 1516,709.7 1518,712.8 1520,714.4 1522,714.5 1524,716 1526,716.2 1528,716.7 1530,717 1532,716.7 1534,716.1 1536,715.6 1538,716.1 1540,714.8 1542,715.1 1544,713.7 1546,714.4 1548,713 1550,712.5 1552,713.1 1554,712.3 1556,713.1 1558,711.2 1560,711 1562,712.1 1564,712.2 1566,711.1 1568,711.7 1570,710.6 1572,710.9 1574,711 1576,711.8 1578,712.7 1580,712.7 1582,711.3 1584,711.6 1586,712.3 1588,712.3 1590,711.6 1592,711.6 1594,713 1596,711.3 1598,711.2 1600,712.8 1602,712.2 1604,710.8 1606,712.1 1608,712.5 1610,712 1612,712.3 1614,711.4 1616,712 1618,713 1620,712.7 1622,711.9 1624,712.9 1626,712.8 1628,711.1 1630,712 1632,712.5 1634,712.7 1636,712.1 1638,711.8 1640,711 1642,711.6 1644,712.3 1646,712.7 1648,711.8 1650,711.7 1652,711.7 1654,713 1656,711.5 1658,711.9 1660,710.7 1662,712.6 1664,711.7 1666,712.2 1668,712.2 1670,710.8 1672,710.8 1674,710.6 1676,710.6 1678,712.8 1680,711.2 1682,711.1 1684,712.4 1686,710.5 1688,712.4 1690,711.6 1692,711.7 1694,712.4 1696,711.5 1698,710.9 1700,712.1 1702,711.2 1704,711.7 1706,711.6 1708,712 1710,710.8 1712,712.2 1714,711.9 1716,710.6 1718,710.2 1720,710.7 1722,711.3 1724,712.7 1726,712.6 1728,713.1 1730,713.6 1732,712.4 1734,711.3 1736,709.5 1738,707.7 1740,705.3 1742,705.9 1744,703.7 1746,702.4 1748,700.2 1750,699.5 1752,699.6 1754,696.7 1756,696.2 1758,699.4 1760,699.4 1762,700 1764,702.4 1766,702.5 1768,703.8 1770,705 1772,704.9 1774,706.2 1776,705 1778,705.8 1780,705.8 1782,706.1 1784,706.7 1786,706.1 1788,706.3 1790,704.7 1792,705.3 1794,703.9 1796,706 1798,705.2 1800,703.5 1802,703.1 1804,705.5 1806,705.1 1808,705 1810,704.9 1812,705.2 1814,705.2 1816,702.9 1818,703.6 1820,703.2 1822,704.8 1824,703.8 1826,704.3 1828,701.7 1830,703.4 1832,702.6 1834,701.6 1836,703.3 1838,701.3 1840,704.1 1842,702.9 1844,703.9 1846,703.4 1848,701.3 1850,701.4 1852,703.3 1854,703.3 1856,701.8 1858,702.3 1860,703.1 1862,700.2 1864,701.4 1866,702.3 1868,702.9 1870,701.6 1872,701.7 1874,701.3 1876,702.1 1878,701.7 1880,701.2 1882,699.6 1884,701.5 1886,699.9 1888,699.5 1890,699.9 1892,700.1 1894,699.4 1896,700.8 1898,701.2 1900,701.1 1902,700.3 1904,701.1 1906,699.6 1908,698.5 1910,699.7 1912,700.4 1914,700.8 1916,699.2 1918,698.6 1920,700.3 1922,698.1 1924,700.2 1926,698.7 1928,698.2 1930,700.8 1932,699.9 1934,704.8 1936,710.6 1938,705 1940,706.4 1942,710.7 1944,712.8 1946,714.1 1948,714.4 1950,710.2 1952,702.6 1954,694.1 1956,689.4 1958,683.1 1960,679.1 1962,680.7 1964,677.5 1966,677.1 1968,676.9 1970,678.3 1972,678.1 1974,682.2 1976,682.2 1978,680.4 1980,682.4 1982,685.8 1984,683.4 1986,682.4 1988,683.9 1990,684 1992,684.4 1994,682.3 1996,686.2 1998,685.6 2000,683.3 2002,685.8 2004,686.2 2006,685.2 2008,683.6 2010,683.3 2012,684.8 2014,684.8 2016,685 2018,684.2 2020,683.9 2022,684.4 2024,686.7 2026,683.8 2028,683.9 2030,684.7 2032,687.4 2034,686.8 2036,684.5 2038,684.2 2040,683.7 2042,685.7 2044,684 2046,685.3 2048,687 2050,686.3 2052,687.6 2054,686.6 2056,685.1 2058,686.1 2060,683.9 2062,685.7 2064,686.2 2066,687.3 2068,686.3 2070,684.3 2072,684.6 2074,683.9 2076,687.3 2078,686.6 2080,683.6 2082,684.8 2084,686.7 2086,684.8 2088,687.4 2090,685.6 2092,686.2 2094,684.6 2096,686.3 2098,686.2 2100,684.4 2102,684.3 2104,685.8 2106,684.7 2108,685 2110,687.4 2112,684.3 2114,686.3 2116,687.3 2118,686.9 2120,686.3 2122,687.3 2124,686.3 2126,687.6 2128,684.6 2130,684.3 2132,684.3 2134,685.9 2136,685 2138,684.6 2140,686.4 2142,686.5 2144,685.7 2146,684.3 2148,684.9 2150,685.4 2152,684.3 2154,687.5 2156,687.8 2158,687.5 2160,687.8 2162,685.9 2164,685.6 2166,684.9 2168,684.3 2170,685.1 2172,684.8 2174,687.7 2176,685.2 2178,685.1 2180,685.1 2182,685.9 2184,685.3 2186,686.3 2188,687.7 2190,685.3 2192,685.8 2194,685.1 2196,685.5 2198,685 2200,685.1 2202,688.1 2204,686.9 2206,687.2 2208,688.4 2210,685 2212,688.5 2214,688 2216,685.1 2218,687.9 2220,685 2222,687.5 2224,686.8 2226,687.3 2228,684.8 2230,687.4 2232,685.8 2234,686.5 2236,687.8 2238,685.4 2240,685.1 2242,685.3 2244,686.4 2246,686.9 2248,693.7 2250,707.9 2252,708.5 2254,711.4 2256,711.9 2258,712.6 2260,712.2 2262,712.8 2264,711.9 2266,711.6 2268,711.2 2270,710 2272,709.6 2272,728 2270,726 2268,725.8 2266,725.6 2264,725.6 2262,724.6 2260,725.1 2258,724.9 2256,725.2 2254,727.4 2252,730.6 2250,733.3 2248,751.1 2246,756 2244,758.8 2242,758.3 2240,756.6 2238,756.9 2236,757.5 2234,760 2232,757.9 2230,756.9 2228,758.1 2226,758.1 2224,759 2222,757.4 2220,760 2218,760 2216,757.4 2214,759.7 2212,760 2210,756.6 2208,758.2 2206,760.1 2204,758.5 2202,756.9 2200,757.3 2198,757.7 2196,758.6 2194,760.1 2192,759.5 2190,760.8 2188,757.8 2186,760.9 2184,758.9 2182,759.8 2180,760.1 2178,757.3 2176,759.6 2174,758.7 2172,760.5 2170,759.3 2168,759.2 2166,757.4 2164,757.9 2162,758.7 2160,759.3 2158,758.3 2156,759.6 2154,761.4 2152,758.5 2150,759.5 2148,759.4 2146,758.2 2144,758.2 2142,761.1 2140,759.7 2138,758.7 2136,759.4 2134,758.4 2132,761.1 2130,761.9 2128,758.3 2126,759.6 2124,758.8 2122,758.8 2120,759.3 2118,759.1 2116,759.6 2114,760.1 2112,758.7 2110,761.1 2108,759 2106,758.7 2104,761.1 2102,759.6 2100,759.6 2098,761.4 2096,762.6 2094,762.3 2092,762.6 2090,762.5 2088,759.4 2086,761.3 2084,761 2082,762 2080,759.9 2078,760.1 2076,762.1 2074,760.8 2072,760.3 2070,762.9 2068,762.6 2066,762.6 2064,762.9 2062,761.1 2060,759.8 2058,763.3 2056,760.6 2054,762.8 2052,761.7 2050,760.3 2048,762.8 2046,759.6 2044,759.9 2042,762.2 2040,763.1 2038,762.9 2036,763 2034,760.2 2032,760.9 2030,762.6 2028,760.2 2026,760.6 2024,763.7 2022,764.5 2020,764.4 2018,763.5 2016,762.7 2014,761.5 2012,763.8 2010,764 2008,762.7 2006,765.5 2004,764.2 2002,765.4 2000,764.8 1998,766 1996,764.5 1994,766.5 1992,765 1990,766.4 1988,767.2 1986,763.8 1984,767.1 1982,764.9 1980,765.5 1978,768.2 1976,768.3 1974,769.1 1972,767.9 1970,769.3 1968,769.4 1966,770.8 1964,768.1 1962,767.5 1960,768.2 1958,762.9 1956,751 1954,744.4 1952,735.8 1950,727.3 1948,722.4 1946,723.8 1944,723.9 1942,726.7 1940,730.7 1938,730.2 1936,728.2 1934,732.3 1932,736.9 1930,736.9 1928,736.1 1926,736.6 1924,735.6 1922,735 1920,736.7 1918,736.5 1916,734.7 1914,734.7 1912,736.7 1910,736 1908,735.1 1906,736.4 1904,733.2 1902,734 1900,733.9 1898,734.5 1896,735.5 1894,735.9 1892,734.1 1890,734.2 1888,733.7 1886,733.9 1884,733.1 1882,734.2 1880,735.1 1878,734.6 1876,734.5 1874,733.5 1872,733 1870,732.1 1868,734.8 1866,731.9 1864,734.2 1862,734.4 1860,733.2 1858,732.7 1856,734.5 1854,733.5 1852,732.9 1850,732.3 1848,734.1 1846,731.5 1844,732.5 1842,733.6 1840,731.9 1838,733.2 1836,733.1 1834,731.4 1832,733 1830,731.8 1828,730.6 1826,732.6 1824,732.7 1822,732.5 1820,732.3 1818,732.6 1816,730.4 1814,732.1 1812,731.2 1810,731.9 1808,731.9 1806,732.2 1804,731.3 1802,731.4 1800,731 1798,731.8 1796,731.4 1794,729.8 1792,729.6 1790,729.4 1788,729.2 1786,730 1784,729.2 1782,729.3 1780,729.7 1778,729.8 1776,729.7 1774,730.8 1772,731.5 1770,731.7 1768,731.2 1766,732.4 1764,733.2 1762,732.5 1760,735.9 1758,734.3 1756,736.8 1754,735.6 1752,735.7 1750,732.2 1748,733.7 1746,730.6 1744,732.5 1742,729.4 1740,728.3 1738,729.2 1736,727.5 1734,726.7 1732,725.3 1730,725.1 1728,725.6 1726,726 1724,727.5 1722,728.8 1720,729 1718,730.1 1716,730.6 1714,730.7 1712,729 1710,729 1708,729.6 1706,728.9 1704,728.6 1702,730.5 1700,729.9 1698,730.3 1696,729.4 1694,729.8 1692,729.3 1690,729.3 1688,729.1 1686,729.2 1684,729.8 1682,729.1 1680,729.7 1678,730.4 1676,730.1 1674,730.1 1672,728.7 1670,729 1668,729.8 1666,730.2 1664,729.6 1662,729.4 1660,729.9 1658,729.6 1656,728.6 1654,730.1 1652,729.8 1650,730 1648,729.3 1646,729.9 1644,730.5 1642,729 1640,728.9 1638,728.5 1636,729 1634,728.8 1632,729.5 1630,728.6 1628,729.2 1626,728.7 1624,728.5 1622,729.9 1620,728.9 1618,729.6 1616,729.4 1614,730.4 1612,729.6 1610,729.7 1608,729.1 1606,730.6 1604,730 1602,729.5 1600,728.3 1598,728.5 1596,729.6 1594,728.2 1592,729 1590,728.9 1588,730.4 1586,729.6 1584,729.4 1582,728.3 1580,729.7 1578,728.9 1576,728.3 1574,729.6 1572,729.1 1570,730.3 1568,728.5 1566,729.8 1564,730 1562,728.2 1560,729.5 1558,729.8 1556,729.6 1554,728.9 1552,728.9 1550,728.2 1548,727.3 1546,727 1544,726.6 1542,725.8 1540,724.7 1538,724.1 1536,723.2 1534,722.4 1532,721.8 1530,721.3 1528,721.8 1526,723.1 1524,723.2 1522,724 1520,724.5 1518,726.4 1516,727.3 1514,729.5 1512,731.4 1510,733 1508,734.4 1506,733.5 1504,732.5 1502,734.6 1500,734 1498,732.9 1496,734.2 1494,733.1 1492,734.6 1490,734.2 1488,732.3 1486,732.1 1484,732.5 1482,732.5 1480,732.8 1478,732.8 1476,734.9 1474,735.4 1472,733.9 1470,733.7 1468,731.9 1466,733.3 1464,732.1 1462,733 1460,732.9 1458,732.9 1456,734.4 1454,734.8 1452,733.9 1450,734.4 1448,735 1446,733.3 1444,732 1442,731.6 1440,732.8 1438,732.8 1436,734.7 1434,733.6 1432,732 1430,734.4 1428,734.5 1426,731.4 1424,733.3 1422,733.8 1420,734.2 1418,733.4 1416,732.2 1414,734.2 1412,731.4 1410,732.6 1408,734 1406,734.3 1404,733.4 1402,732.3 1400,732.5 1398,731.7 1396,731.8 1394,733.7 1392,733.7 1390,731.4 1388,732.9 1386,733 1384,731.4 1382,733.1 1380,732.6 1378,733.2 1376,732.8 1374,734.3 1372,732.9 1370,733.4 1368,733.5 1366,734.5 1364,731.7 1362,732.9 1360,734.2 1358,732.9 1356,733.1 1354,732.1 1352,732.6 1350,733.5 1348,734.4 1346,737.2 1344,736.5 1342,737.7 1340,734.5 1338,734.6 1336,733.9 1334,730.7 1332,729.2 1330,730 1328,726.9 1326,726.7 1324,725.6 1322,723.3 1320,722.5 1318,721.5 1316,720.9 1314,722.2 1312,722.9 1310,724 1308,725 1306,725.2 1304,728.1 1302,734.6 1300,736.2 1298,736.3 1296,733.7 1294,734.4 1292,733.3 1290,734 1288,732.2 1286,733.1 1284,734.8 1282,732.7 1280,732.1 1278,732 1276,732.8 1274,732.6 1272,733.2 1270,732.2 1268,734.9 1266,733.1 1264,734.1 1262,734.2 1260,734.7 1258,733.4 1256,732.8 1254,733.7 1252,734.2 1250,732.5 1248,734.2 1246,733.9 1244,732.9 1242,734.1 1240,732.7 1238,735.3 1236,734.6 1234,735 1232,733.3 1230,733.6 1228,733.5 1226,735.2 1224,733.9 1222,733.7 1220,733.3 1218,735.6 1216,734.1 1214,736 1212,735.8 1210,733.2 1208,736.1 1206,734.4 1204,736.1 1202,734.4 1200,733.3 1198,736 1196,733.7 1194,734.7 1192,735.6 1190,734.1 1188,734.5 1186,736.2 1184,736.9 1182,734.3 1180,734.7 1178,737.1 1176,734.2 1174,734.9 1172,735.1 1170,735.6 1168,735.9 1166,735.9 1164,736.3 1162,736.3 1160,737.3 1158,735 1156,735.7 1154,736.3 1152,737.4 1150,737.1 1148,736.9 1146,737 1144,737.5 1142,737.8 1140,738.6 1138,735.4 1136,734.4 1134,732.4 1132,729.9 1130,726.3 1128,722.9 1126,721.4 1124,722.1 1122,722.3 1120,722.6 1118,723.3 1116,724.4 1114,726.9 1112,728.9 1110,730.3 1108,742 1106,747.6 1104,747.8 1102,746.5 1100,746.2 1098,746.2 1096,745.2 1094,747.4 1092,745.4 1090,745 1088,746.3 1086,746.5 1084,748 1082,745.6 1080,747.9 1078,745.7 1076,744.6 1074,747.3 1072,744.2 1070,744.1 1068,743.9 1066,745.8 1064,743.7 1062,743.6 1060,743.2 1058,745 1056,745.9 1054,746.2 1052,744.7 1050,745 1048,745.8 1046,744.3 1044,745.7 1042,742.4 1040,742.2 1038,744.5 1036,743.5 1034,742 1032,741.6 1030,742.6 1028,740.6 1026,740.4 1024,740.4 1022,743.6 1020,740.5 1018,740.3 1016,743.2 1014,741 1012,739.9 1010,742.1 1008,738.6 1006,740.1 1004,740.5 1002,739.6 1000,741.3 998,738.1 996,737.7 994,737.4 992,739.8 990,740.1 988,739.9 986,735.8 984,736.7 982,738.9 980,736.1 978,736.5 976,735.5 974,737.2 972,733.5 970,733.2 968,735.4 966,733.4 964,735.5 962,733 960,733.6 958,731.4 956,732.7 954,731.6 952,733.4 950,733.3 948,734.9 946,734.9 944,735.9 942,738.8 940,737.6 938,733.8 936,734.1 934,731.8 932,729.5 930,728.7 928,726 926,724.9 924,723.7 922,721.8 920,721 918,720.6 916,720 914,719.5 912,718.9 910,718.9 908,719 906,718.9 904,719 902,718.9 900,719 898,718.9 896,718.9 894,718.9 892,718.9 890,718.9 888,718.9 886,718.9 884,718.9 882,718.9 880,718.9 878,718.9 876,718.9 874,718.9 872,718.9 870,718.9 868,718.9 866,718.9 864,719 862,718.9 860,718.9 858,718.9 856,718.9 854,718.9 852,718.9 850,719 848,718.9 846,718.9 844,718.9 842,719 840,718.9 838,718.9 836,719 834,718.9 832,719 830,719 828,719 826,719 824,719.3 822,719.3 820,719.4 818,719.4 816,720.5 814,723 812,724.9 810,727.7 808,731.6 806,737.8 804,743.2 802,750.2 800,751.8 798,753.1 796,754.5 794,754.9 792,758.9 790,757.2 788,756.1 786,756.5 784,755.2 782,754.9 780,753.8 778,755.5 776,753.2 774,753.8 772,753 770,752.8 768,753.2 766,752.2 764,752.2 762,752.6 760,755.3 758,754.4 756,756.9 754,758.2 752,761.1 750,760.4 748,761.9 746,763.9 744,765.7 742,766.8 740,764.8 738,759.5 736,754.5 734,750.6 732,744.8 730,742.5 728,740.5 726,736.5 724,732.1 722,730.5 720,727.2 718,724.5 716,721.1 714,721.1 712,722.5 710,723.2 708,725 706,728.8 704,729.6 702,729.8 700,731.2 698,729.4 696,731.2 694,731 692,730.7 690,728.7 688,731.1 686,730.9 684,729.2 682,730.7 680,730.9 678,730.7 676,729 674,728.7 672,728.6 670,729.3 668,728.6 666,729.8 664,728 662,728.9 660,729.5 658,728.3 656,729.2 654,727.8 652,729.4 650,728.7 648,729.1 646,728 644,727.7 642,728.7 640,729.4 638,727.4 636,727.7 634,726.8 632,729 630,727 628,728.3 626,727.1 624,726.8 622,727.8 620,727.3 618,728.5 616,726.6 614,727.2 612,727 610,725.2 608,725.9 606,724.3 604,723.5 602,722.4 600,722.2 598,721.2 596,720 594,720.5 592,720.8 590,721.7 588,722.2 586,724.2 584,726.8 582,729.6 580,734.9 578,748.4 576,751.9 574,749.8 572,749.1 570,749.2 568,750.8 566,748.6 564,748.9 562,750.4 560,749.5 558,750.9 556,750.6 554,752 552,752.1 550,749.3 548,750.2 546,752.3 544,751.3 542,750.7 540,750.8 538,749.3 536,749.4 534,749.4 532,751.1 530,751.7 528,750.1 526,749.4 524,752.3 522,749.1 520,749.8 518,750.3 516,750 514,750.7 512,749.8 510,752.1 508,751.3 506,749.9 504,753.6 502,750.1 500,750.3 498,751.4 496,753.1 494,752.2 492,754.2 490,750.6 488,753.6 486,753.6 484,751.7 482,751.5 480,750.5 478,750.3 476,753.7 474,751.6 472,750.5 470,751 468,750.7 466,749.4 464,750.4 462,752.5 460,749 458,750.2 456,750.2 454,752.2 452,749.2 450,748.9 448,748.7 446,747.9 444,748.7 442,747.6 440,748.3 438,749.8 436,747.1 434,749.2 432,749.6 430,747.8 428,749.6 426,749.4 424,748.9 422,747 420,749.6 418,747.6 416,745.7 414,747.3 412,746.2 410,745.7 408,746.4 406,746.6 404,745.8 402,745 400,748.5 398,748 396,745.9 394,745.3 392,745.5 390,744.3 388,745.8 386,746.2 384,747.2 382,744.6 380,747.5 378,743.9 376,746 374,744.8 372,744 370,746.8 368,744.6 366,743.5 364,746.1 362,743.8 360,745.5 358,744.2 356,744.9 354,743.8 352,744.8 350,745.6 348,742.9 346,743.8 344,745.2 342,744.2 340,743.4 338,743.5 336,744.6 334,742.4 332,744.9 330,743.7 328,745 326,745.5 324,744.2 322,744.9 320,745.5 318,744.9 316,746.8 314,745.7 312,747.4 310,749.3 308,750.2 306,754 304,755.5 302,753.1 300,751.8 298,747.6 296,745.4 294,745.4 292,740.2 290,733.5 288,726.7 286,729.9 284,730.8 282,726.5 280,725 278,734.3 276,740.6 274,730.7 272,729.3 270,732.9 268,733.8 266,732.4 264,731.9 262,732.4 260,734.9 258,732.7 256,731.6 254,732.7 252,734.4 250,734.9 248,732.1 246,734.7 244,732.3 242,731.9 240,732.3 238,734.6 236,733.7 234,732.8 232,733 230,733.1 228,732.9 226,732.7 224,731.6 222,732.8 220,734 218,734 216,732.8 214,731.5 212,733.9 210,730.8 208,732.9 206,733.3 204,731.1 202,731.9 200,733.1 198,733 196,733.1 194,733.3 192,731.1 190,733.5 188,732.5 186,730.3 184,732.6 182,733.3 180,732.6 178,731.2 176,733.1 174,730.4 172,730.4 170,730.1 168,732.9 166,730.7 164,732.3 162,730 160,729.9 158,731.3 156,731.8 154,729.4 152,731.3 150,730.4 148,730.5 146,729.4 144,730.1 142,731.5 140,731.4 138,731 136,730 134,729.4 132,730.5 130,731.2 128,730.1 126,729.9 124,729.6 122,728.7 120,731.1 118,730.9 116,730.8 114,729.9 112,730.7 110,732.4 108,731 106,731.6 104,731.6 102,731.8 100,733.9 98,733" fill="#00003c"/>
<g filter="url(#bB)" fill="#00f">
<ellipse cx="279" cy="168" rx="17.1" ry="6.8" opacity="0.36"/>
<ellipse cx="279" cy="147" rx="5.4" ry="7.6" opacity="0.1"/>
<ellipse cx="279" cy="183" rx="13" ry="5" opacity="0.4"/>
<ellipse cx="583" cy="206" rx="15" ry="6" opacity="0.6"/>
<ellipse cx="584" cy="188" rx="10" ry="4" opacity="0.2"/>
<ellipse cx="98" cy="260" rx="46" ry="5.5" opacity="0.95"/>
<ellipse cx="284" cy="308" rx="23.4" ry="16.1" opacity="0.32"/>
<ellipse cx="320" cy="300" rx="18" ry="3" opacity="0.5"/>
<ellipse cx="272" cy="300" rx="12.6" ry="6.8" opacity="0.24"/>
<ellipse cx="583" cy="327" rx="18" ry="20.4" opacity="0.3"/>
<ellipse cx="583" cy="362" rx="7.2" ry="7.6" opacity="0.12"/>
<ellipse cx="612" cy="336" rx="20" ry="2.5" opacity="0.4"/>
<ellipse cx="296" cy="336" rx="12.6" ry="6" opacity="0.24"/>
<ellipse cx="708" cy="168" rx="16.2" ry="6.8" opacity="0.32"/>
<ellipse cx="708" cy="181" rx="10" ry="4" opacity="0.3"/>
<ellipse cx="606" cy="168" rx="10" ry="5" opacity="0.6"/>
<ellipse cx="716" cy="300" rx="21.6" ry="11" opacity="0.34"/>
<ellipse cx="710" cy="277" rx="14" ry="5" opacity="0.35"/>
<ellipse cx="710" cy="320" rx="12" ry="5" opacity="0.3"/>
<ellipse cx="604" cy="300" rx="12" ry="6" opacity="0.6"/>
<ellipse cx="289" cy="419" rx="21.6" ry="26.3" opacity="0.15"/>
<ellipse cx="287" cy="432" rx="13.5" ry="10.2" opacity="0.2"/>
<ellipse cx="281" cy="464" rx="9" ry="6" opacity="0.25"/>
<ellipse cx="98" cy="395" rx="12.6" ry="7.6" opacity="0.16"/>
<ellipse cx="106" cy="488" rx="32.4" ry="20.4" opacity="0.32"/>
<ellipse cx="98" cy="470" rx="21.6" ry="13.6" opacity="0.24"/>
<ellipse cx="728" cy="450" rx="12" ry="6" opacity="0.3"/>
<ellipse cx="612" cy="390" rx="18" ry="2" opacity="0.3"/>
<ellipse cx="1112" cy="165" rx="18" ry="10.2" opacity="0.32"/>
<ellipse cx="1112" cy="183" rx="14.4" ry="6.8" opacity="0.24"/>
<ellipse cx="1110" cy="150" rx="9" ry="6.8" opacity="0.12"/>
<ellipse cx="1142" cy="166" rx="16" ry="2" opacity="0.4"/>
<ellipse cx="926" cy="167.5" rx="10" ry="5" opacity="0.6"/>
<ellipse cx="1308" cy="203" rx="17.1" ry="9.3" opacity="0.3"/>
<ellipse cx="1347" cy="203" rx="16" ry="2.5" opacity="0.4"/>
<ellipse cx="1305" cy="187" rx="10" ry="4" opacity="0.2"/>
<ellipse cx="1126" cy="203" rx="10" ry="5" opacity="0.6"/>
<ellipse cx="941" cy="226" rx="18" ry="4.5" opacity="0.55"/>
<ellipse cx="1117" cy="302" rx="22.5" ry="13.6" opacity="0.34"/>
<ellipse cx="1157" cy="298" rx="18" ry="3" opacity="0.45"/>
<ellipse cx="1115" cy="275" rx="16" ry="5" opacity="0.4"/>
<ellipse cx="924" cy="299" rx="12" ry="6" opacity="0.6"/>
<ellipse cx="825" cy="354" rx="23.4" ry="7.6" opacity="0.32"/>
<ellipse cx="718" cy="356" rx="12.6" ry="6.8" opacity="0.28"/>
<ellipse cx="940" cy="390" rx="27" ry="8.5" opacity="0.16"/>
<ellipse cx="932" cy="386" rx="14" ry="6" opacity="0.4"/>
<ellipse cx="1312" cy="420" rx="13.5" ry="34" opacity="0.1"/>
<ellipse cx="1122" cy="462" rx="9" ry="21.2" opacity="0.08"/>
<ellipse cx="1327" cy="430" rx="25.2" ry="8.5" opacity="0.24"/>
<ellipse cx="1124" cy="430" rx="12.6" ry="6.8" opacity="0.2"/>
<ellipse cx="1727" cy="136" rx="17.1" ry="6.8" opacity="0.32"/>
<ellipse cx="1536" cy="129" rx="10" ry="4" opacity="0.6"/>
<ellipse cx="1517" cy="166" rx="16.2" ry="8.5" opacity="0.32"/>
<ellipse cx="1515" cy="183" rx="14.4" ry="6" opacity="0.22"/>
<ellipse cx="1555" cy="187" rx="14" ry="1.5" opacity="0.3"/>
<ellipse cx="1326" cy="167.5" rx="10" ry="5" opacity="0.6"/>
<ellipse cx="1937" cy="167" rx="16.2" ry="9.3" opacity="0.32"/>
<ellipse cx="1937" cy="184" rx="14.4" ry="6" opacity="0.2"/>
<ellipse cx="1746" cy="168" rx="10" ry="5" opacity="0.6"/>
<ellipse cx="1733" cy="258" rx="18" ry="10.2" opacity="0.28"/>
<ellipse cx="1730" cy="273" rx="12.6" ry="6" opacity="0.18"/>
<ellipse cx="1787" cy="260" rx="14" ry="2.5" opacity="0.5"/>
<ellipse cx="1733" cy="238" rx="9" ry="11.9" opacity="0.12"/>
<ellipse cx="1536" cy="260" rx="10" ry="5" opacity="0.5"/>
<ellipse cx="1520" cy="300" rx="21.6" ry="10.2" opacity="0.34"/>
<ellipse cx="1560" cy="299" rx="16" ry="3" opacity="0.4"/>
<ellipse cx="1517" cy="276" rx="16" ry="5" opacity="0.45"/>
<ellipse cx="1324" cy="299.5" rx="12" ry="6" opacity="0.6"/>
<ellipse cx="1942" cy="304" rx="21.6" ry="14.4" opacity="0.34"/>
<ellipse cx="1984" cy="300" rx="12" ry="3" opacity="0.4"/>
<ellipse cx="1942" cy="276" rx="14" ry="5" opacity="0.4"/>
<ellipse cx="1744" cy="300.5" rx="10.8" ry="6" opacity="0.28"/>
<ellipse cx="1739" cy="400" rx="16.2" ry="30.6" opacity="0.12"/>
<ellipse cx="1735" cy="412" rx="9" ry="13.6" opacity="0.12"/>
<ellipse cx="1950" cy="425" rx="25.2" ry="22.1" opacity="0.12"/>
<ellipse cx="1957" cy="432" rx="23.4" ry="6.8" opacity="0.24"/>
<ellipse cx="1541" cy="350" rx="10" ry="3" opacity="0.3"/>
<ellipse cx="2255" cy="325" rx="18" ry="22.9" opacity="0.32"/>
<ellipse cx="2250" cy="192" rx="12" ry="6" opacity="0.3"/>
<ellipse cx="1955" cy="205" rx="12" ry="5" opacity="0.7"/>
<ellipse cx="1960" cy="337" rx="18" ry="9.3" opacity="0.32"/>
<ellipse cx="290" cy="550" rx="27" ry="39.1" opacity="0.26"/>
<ellipse cx="285" cy="520" rx="22.5" ry="17" opacity="0.28"/>
<ellipse cx="312" cy="530" rx="16.2" ry="18.7" opacity="0.18"/>
<ellipse cx="590" cy="545" rx="24.3" ry="32.3" opacity="0.28"/>
<ellipse cx="583" cy="600" rx="8.1" ry="27.2" opacity="0.12"/>
<ellipse cx="620" cy="555" rx="19.8" ry="17" opacity="0.16"/>
<ellipse cx="716" cy="550" rx="22.5" ry="37.4" opacity="0.28"/>
<ellipse cx="700" cy="520" rx="18" ry="11.9" opacity="0.24"/>
<ellipse cx="832" cy="585" rx="19.8" ry="16.1" opacity="0.24"/>
<ellipse cx="862" cy="582" rx="25" ry="4" opacity="0.4"/>
<ellipse cx="932" cy="525" rx="21.6" ry="13.6" opacity="0.32"/>
<ellipse cx="1118" cy="520" rx="23.4" ry="17" opacity="0.32"/>
<ellipse cx="1114" cy="575" rx="9" ry="42.5" opacity="0.11"/>
<ellipse cx="1140" cy="515" rx="16.2" ry="8.5" opacity="0.16"/>
<ellipse cx="1335" cy="526" rx="22.5" ry="14.4" opacity="0.32"/>
<ellipse cx="1520" cy="520" rx="22.5" ry="21.2" opacity="0.3"/>
<ellipse cx="1514" cy="575" rx="8.1" ry="29.8" opacity="0.11"/>
<ellipse cx="1552" cy="510" rx="18" ry="15.3" opacity="0.2"/>
<ellipse cx="1542" cy="487" rx="16.2" ry="7.6" opacity="0.28"/>
<ellipse cx="1762" cy="490" rx="28.8" ry="8.5" opacity="0.28"/>
<ellipse cx="1738" cy="520" rx="18" ry="25.5" opacity="0.3"/>
<ellipse cx="1733" cy="560" rx="8.1" ry="21.2" opacity="0.11"/>
<ellipse cx="1945" cy="550" rx="27" ry="40.8" opacity="0.26"/>
<ellipse cx="1977" cy="520" rx="18" ry="12.8" opacity="0.2"/>
<ellipse cx="1930" cy="510" rx="16.2" ry="11.9" opacity="0.2"/>
<ellipse cx="2258" cy="545" rx="16.2" ry="34" opacity="0.3"/>
<ellipse cx="2250" cy="590" rx="9" ry="21.2" opacity="0.11"/>
<ellipse cx="588" cy="560" rx="30" ry="45" opacity="0.42"/>
<ellipse cx="291" cy="552" rx="30" ry="45" opacity="0.42"/>
<ellipse cx="716" cy="556" rx="26" ry="45" opacity="0.42"/>
<ellipse cx="1118" cy="536" rx="26" ry="40" opacity="0.38"/>
<ellipse cx="1520" cy="531" rx="28" ry="40" opacity="0.38"/>
<ellipse cx="1738" cy="531" rx="22" ry="40" opacity="0.38"/>
<ellipse cx="1946" cy="556" rx="30" ry="45" opacity="0.42"/>
<ellipse cx="2259" cy="551" rx="20" ry="42" opacity="0.42"/>
<ellipse cx="833" cy="586" rx="22" ry="20" opacity="0.3"/>
<ellipse cx="933" cy="526" rx="24" ry="18" opacity="0.3"/>
<ellipse cx="1336" cy="527" rx="24" ry="18" opacity="0.3"/>
<ellipse cx="928" cy="740" rx="16" ry="12" opacity="1"/>
<ellipse cx="1534" cy="698" rx="13" ry="10" opacity="0.4"/>
<ellipse cx="1950" cy="776" rx="13" ry="13" opacity="0.4"/>
<ellipse cx="283" cy="768" rx="12" ry="10" opacity="0.3"/>
<ellipse cx="600" cy="742" rx="18" ry="10" opacity="0.25"/>
<ellipse cx="727" cy="785" rx="10" ry="8" opacity="0.2"/>
<ellipse cx="1324" cy="742" rx="10" ry="12" opacity="0.25"/>
<ellipse cx="1730" cy="742" rx="8" ry="10" opacity="0.25"/>
<ellipse cx="586" cy="1195" rx="14" ry="8" opacity="0.12"/>
</g>
<g filter="url(#bS)" fill="#00f">
<ellipse cx="283.8" cy="161.6" rx="10.5" ry="2.3" opacity="0.75"/>
<ellipse cx="279.1" cy="164.9" rx="13" ry="2.5" opacity="0.89"/>
<ellipse cx="274.3" cy="167.7" rx="15.2" ry="2.7" opacity="0.84"/>
<ellipse cx="284.3" cy="170.8" rx="20.3" ry="2.5" opacity="0.8"/>
<ellipse cx="279.3" cy="174.1" rx="8" ry="1.7" opacity="0.59"/>
<ellipse cx="279" cy="139.3" rx="4" ry="2.2" opacity="0.25"/>
<ellipse cx="279" cy="142.5" rx="5" ry="2.5" opacity="0.2"/>
<ellipse cx="279.5" cy="145.3" rx="6.8" ry="2.8" opacity="0.23"/>
<ellipse cx="278.8" cy="148.4" rx="4.5" ry="1.7" opacity="0.24"/>
<ellipse cx="278.9" cy="151.4" rx="5.6" ry="2.9" opacity="0.25"/>
<ellipse cx="279.4" cy="154.1" rx="4" ry="2.3" opacity="0.27"/>
<ellipse cx="286" cy="290.5" rx="7" ry="2.7" opacity="0.56"/>
<ellipse cx="291.2" cy="293.4" rx="13.6" ry="2.7" opacity="0.49"/>
<ellipse cx="277.1" cy="296.7" rx="14.7" ry="2.7" opacity="0.52"/>
<ellipse cx="279.2" cy="300.1" rx="20.7" ry="2.6" opacity="0.5"/>
<ellipse cx="282.8" cy="303.4" rx="17.9" ry="1.9" opacity="0.56"/>
<ellipse cx="280.9" cy="306.8" rx="27.3" ry="2.8" opacity="0.53"/>
<ellipse cx="286.2" cy="309.5" rx="27.9" ry="1.7" opacity="0.88"/>
<ellipse cx="288.3" cy="312.5" rx="19.7" ry="2.1" opacity="0.57"/>
<ellipse cx="285.3" cy="315.6" rx="16.6" ry="1.9" opacity="0.7"/>
<ellipse cx="291.2" cy="319" rx="18.6" ry="2.3" opacity="0.69"/>
<ellipse cx="278.6" cy="322.5" rx="12.4" ry="2.9" opacity="0.8"/>
<ellipse cx="287.7" cy="325.2" rx="8.2" ry="2.9" opacity="0.53"/>
<ellipse cx="272.9" cy="294" rx="10" ry="2.2" opacity="0.36"/>
<ellipse cx="269.8" cy="296.4" rx="14.2" ry="2.6" opacity="0.41"/>
<ellipse cx="270.3" cy="300.3" rx="13.3" ry="1.8" opacity="0.57"/>
<ellipse cx="272.5" cy="302.9" rx="10" ry="2.8" opacity="0.53"/>
<ellipse cx="269.5" cy="306.2" rx="9.8" ry="1.6" opacity="0.42"/>
<ellipse cx="579.1" cy="304.6" rx="4.8" ry="2.1" opacity="0.65"/>
<ellipse cx="587.7" cy="307.5" rx="9.7" ry="3" opacity="0.68"/>
<ellipse cx="578.7" cy="311.2" rx="14.2" ry="1.6" opacity="0.42"/>
<ellipse cx="588.6" cy="314.5" rx="17.1" ry="1.6" opacity="0.67"/>
<ellipse cx="580.8" cy="317.4" rx="18.6" ry="3" opacity="0.44"/>
<ellipse cx="587.8" cy="320.6" rx="19.6" ry="2.6" opacity="0.7"/>
<ellipse cx="581.2" cy="324" rx="22" ry="2.6" opacity="0.78"/>
<ellipse cx="586.5" cy="327.3" rx="17.2" ry="2.8" opacity="0.65"/>
<ellipse cx="584" cy="330.3" rx="16.7" ry="2.5" opacity="0.45"/>
<ellipse cx="587.6" cy="333.5" rx="22.1" ry="2.6" opacity="0.57"/>
<ellipse cx="582.3" cy="336.8" rx="17.2" ry="2.8" opacity="0.45"/>
<ellipse cx="584.2" cy="340" rx="11.2" ry="2.3" opacity="0.51"/>
<ellipse cx="584.4" cy="343.2" rx="13.3" ry="2.9" opacity="0.52"/>
<ellipse cx="585.1" cy="345.8" rx="9.9" ry="1.9" opacity="0.48"/>
<ellipse cx="582.3" cy="349.7" rx="6.3" ry="2.8" opacity="0.55"/>
<ellipse cx="582.9" cy="354.6" rx="4" ry="2.7" opacity="0.32"/>
<ellipse cx="583.1" cy="357.8" rx="6" ry="2" opacity="0.19"/>
<ellipse cx="583.5" cy="360.5" rx="8.4" ry="2.6" opacity="0.32"/>
<ellipse cx="582.9" cy="363.3" rx="5.8" ry="2" opacity="0.2"/>
<ellipse cx="583" cy="366.4" rx="6.7" ry="2" opacity="0.3"/>
<ellipse cx="582.4" cy="369.9" rx="4" ry="1.6" opacity="0.31"/>
<ellipse cx="296.6" cy="330.3" rx="8.3" ry="2" opacity="0.59"/>
<ellipse cx="295.6" cy="333.8" rx="9.6" ry="1.6" opacity="0.6"/>
<ellipse cx="292.2" cy="337.5" rx="9.8" ry="2.5" opacity="0.48"/>
<ellipse cx="298.6" cy="341.4" rx="8.8" ry="2.9" opacity="0.56"/>
<ellipse cx="704.5" cy="161.4" rx="8.9" ry="1.6" opacity="0.65"/>
<ellipse cx="705.5" cy="165" rx="12.3" ry="2.1" opacity="0.75"/>
<ellipse cx="710.8" cy="168" rx="17.2" ry="2.2" opacity="0.79"/>
<ellipse cx="712.7" cy="171.5" rx="11.2" ry="2.6" opacity="0.5"/>
<ellipse cx="712.4" cy="174.4" rx="10.5" ry="2.1" opacity="0.69"/>
<ellipse cx="722.4" cy="288.9" rx="13.2" ry="2.2" opacity="0.77"/>
<ellipse cx="720.6" cy="291.6" rx="18.6" ry="2.5" opacity="0.8"/>
<ellipse cx="722.9" cy="294.9" rx="24.3" ry="3" opacity="0.72"/>
<ellipse cx="721.9" cy="298.6" rx="19.3" ry="2.8" opacity="0.63"/>
<ellipse cx="716.7" cy="301.3" rx="20.8" ry="2.7" opacity="0.7"/>
<ellipse cx="709.7" cy="304.5" rx="23.8" ry="2.7" opacity="0.55"/>
<ellipse cx="710.8" cy="308" rx="19.8" ry="1.8" opacity="0.71"/>
<ellipse cx="718.7" cy="311.6" rx="11.8" ry="2.9" opacity="0.7"/>
<ellipse cx="285" cy="390" rx="5.9" ry="2.3" opacity="0.27"/>
<ellipse cx="289.3" cy="393.1" rx="12.8" ry="2.8" opacity="0.33"/>
<ellipse cx="294" cy="396" rx="13.5" ry="2.9" opacity="0.25"/>
<ellipse cx="289.3" cy="399.7" rx="21.3" ry="2.4" opacity="0.25"/>
<ellipse cx="290.5" cy="402.7" rx="18.4" ry="1.6" opacity="0.41"/>
<ellipse cx="293.3" cy="406" rx="18.5" ry="2.4" opacity="0.31"/>
<ellipse cx="289.6" cy="409.4" rx="15.6" ry="2.2" opacity="0.41"/>
<ellipse cx="288.6" cy="412.8" rx="18.5" ry="1.8" opacity="0.3"/>
<ellipse cx="288.7" cy="416" rx="26.3" ry="2" opacity="0.25"/>
<ellipse cx="283.7" cy="419.1" rx="26.7" ry="2.7" opacity="0.21"/>
<ellipse cx="291.7" cy="422" rx="18.2" ry="2.1" opacity="0.28"/>
<ellipse cx="292.3" cy="425.6" rx="16.5" ry="1.8" opacity="0.32"/>
<ellipse cx="289.4" cy="428.6" rx="17.1" ry="2.2" opacity="0.29"/>
<ellipse cx="284.1" cy="432" rx="19.9" ry="1.9" opacity="0.34"/>
<ellipse cx="294.1" cy="435.4" rx="18.6" ry="2.5" opacity="0.39"/>
<ellipse cx="293.5" cy="438.4" rx="19.1" ry="2.9" opacity="0.28"/>
<ellipse cx="284.9" cy="441.7" rx="18.2" ry="3" opacity="0.39"/>
<ellipse cx="292.3" cy="444.8" rx="10.2" ry="2" opacity="0.23"/>
<ellipse cx="293.2" cy="448.6" rx="6.1" ry="1.8" opacity="0.29"/>
<ellipse cx="284.3" cy="421.6" rx="5" ry="2.6" opacity="0.53"/>
<ellipse cx="287.1" cy="424.9" rx="8.5" ry="2.7" opacity="0.41"/>
<ellipse cx="283.1" cy="427.6" rx="10.4" ry="1.7" opacity="0.29"/>
<ellipse cx="287.6" cy="430.5" rx="13.5" ry="1.8" opacity="0.33"/>
<ellipse cx="291.4" cy="433.3" rx="16" ry="2.9" opacity="0.3"/>
<ellipse cx="286.7" cy="436.2" rx="15.8" ry="2.7" opacity="0.36"/>
<ellipse cx="286.4" cy="439.5" rx="10.7" ry="2.4" opacity="0.28"/>
<ellipse cx="284.1" cy="442.7" rx="7.4" ry="2.2" opacity="0.48"/>
<ellipse cx="95.2" cy="387.4" rx="5.7" ry="2.3" opacity="0.22"/>
<ellipse cx="99.7" cy="390.8" rx="13" ry="2.8" opacity="0.36"/>
<ellipse cx="98" cy="393.4" rx="13.1" ry="3" opacity="0.4"/>
<ellipse cx="100.1" cy="396.3" rx="15.3" ry="2.7" opacity="0.4"/>
<ellipse cx="101.2" cy="399.4" rx="13.4" ry="2.6" opacity="0.39"/>
<ellipse cx="99.9" cy="402.7" rx="6.2" ry="1.7" opacity="0.3"/>
<ellipse cx="102.9" cy="465.6" rx="8.4" ry="2.5" opacity="0.71"/>
<ellipse cx="109.6" cy="468.6" rx="23.8" ry="2.1" opacity="0.73"/>
<ellipse cx="103.6" cy="472.1" rx="24.7" ry="3" opacity="0.72"/>
<ellipse cx="116.4" cy="475.4" rx="31.5" ry="1.6" opacity="0.71"/>
<ellipse cx="103.9" cy="478.6" rx="25.8" ry="1.7" opacity="0.53"/>
<ellipse cx="100.6" cy="481.5" rx="24.2" ry="2.9" opacity="0.68"/>
<ellipse cx="107.5" cy="484.8" rx="40.4" ry="3" opacity="0.72"/>
<ellipse cx="108.1" cy="488.2" rx="24.8" ry="2.7" opacity="0.46"/>
<ellipse cx="105.4" cy="491.5" rx="26" ry="1.8" opacity="0.66"/>
<ellipse cx="115.6" cy="494.5" rx="23.5" ry="2.2" opacity="0.67"/>
<ellipse cx="101.4" cy="497.7" rx="27.4" ry="2.5" opacity="0.69"/>
<ellipse cx="101.6" cy="500.6" rx="30.9" ry="1.6" opacity="0.55"/>
<ellipse cx="111.5" cy="503.6" rx="19.9" ry="2.1" opacity="0.83"/>
<ellipse cx="116.6" cy="507.4" rx="14.3" ry="2.9" opacity="0.47"/>
<ellipse cx="105.5" cy="510.7" rx="10" ry="3" opacity="0.55"/>
<ellipse cx="101.2" cy="455.6" rx="11.8" ry="2.3" opacity="0.65"/>
<ellipse cx="92.5" cy="459.1" rx="16.7" ry="2.5" opacity="0.48"/>
<ellipse cx="98.4" cy="461.8" rx="13.9" ry="1.8" opacity="0.48"/>
<ellipse cx="94.6" cy="465.3" rx="20.2" ry="2.4" opacity="0.47"/>
<ellipse cx="105.2" cy="468.6" rx="21.9" ry="2.9" opacity="0.57"/>
<ellipse cx="103.7" cy="471.4" rx="16.9" ry="2.7" opacity="0.54"/>
<ellipse cx="100.7" cy="474.7" rx="18" ry="2.4" opacity="0.53"/>
<ellipse cx="93.5" cy="478.1" rx="21.2" ry="1.9" opacity="0.65"/>
<ellipse cx="91.4" cy="481.5" rx="18.1" ry="1.7" opacity="0.42"/>
<ellipse cx="92.3" cy="484.3" rx="10.2" ry="2.4" opacity="0.35"/>
<ellipse cx="1112.6" cy="154.2" rx="8.6" ry="2.5" opacity="0.6"/>
<ellipse cx="1110.1" cy="157.5" rx="11.8" ry="2.6" opacity="0.81"/>
<ellipse cx="1115.7" cy="160.2" rx="13" ry="2.5" opacity="0.78"/>
<ellipse cx="1109.1" cy="163.3" rx="17.1" ry="2.7" opacity="0.6"/>
<ellipse cx="1109.9" cy="166.6" rx="22.7" ry="2.4" opacity="0.77"/>
<ellipse cx="1110.4" cy="169.8" rx="15.8" ry="1.7" opacity="0.83"/>
<ellipse cx="1112.8" cy="172.2" rx="11.1" ry="2.3" opacity="0.74"/>
<ellipse cx="1106.9" cy="175.3" rx="10.5" ry="1.9" opacity="0.73"/>
<ellipse cx="1114.2" cy="176.3" rx="6.9" ry="2.6" opacity="0.42"/>
<ellipse cx="1114.2" cy="179.5" rx="11.9" ry="2.1" opacity="0.37"/>
<ellipse cx="1116" cy="183.2" rx="15" ry="2.9" opacity="0.63"/>
<ellipse cx="1110.1" cy="186.2" rx="15.5" ry="2" opacity="0.46"/>
<ellipse cx="1109.6" cy="189.7" rx="9.4" ry="2.1" opacity="0.45"/>
<ellipse cx="1109.8" cy="143.5" rx="4.9" ry="1.9" opacity="0.26"/>
<ellipse cx="1110.6" cy="147" rx="8.5" ry="2.4" opacity="0.19"/>
<ellipse cx="1109.6" cy="150.2" rx="10.9" ry="1.6" opacity="0.25"/>
<ellipse cx="1110.8" cy="153.2" rx="8.5" ry="2.5" opacity="0.3"/>
<ellipse cx="1110.5" cy="156.1" rx="6" ry="1.7" opacity="0.18"/>
<ellipse cx="1303.3" cy="193.8" rx="11.3" ry="2.5" opacity="0.47"/>
<ellipse cx="1305.1" cy="196.9" rx="15.4" ry="1.9" opacity="0.73"/>
<ellipse cx="1306.8" cy="199.9" rx="18.8" ry="2.1" opacity="0.81"/>
<ellipse cx="1308.4" cy="203.1" rx="17" ry="2.6" opacity="0.7"/>
<ellipse cx="1311.7" cy="206.5" rx="15.4" ry="2.5" opacity="0.76"/>
<ellipse cx="1312.4" cy="209.5" rx="16.3" ry="2.9" opacity="0.68"/>
<ellipse cx="1311.4" cy="212.4" rx="9.8" ry="2.2" opacity="0.59"/>
<ellipse cx="1124.4" cy="287.3" rx="10.1" ry="2.1" opacity="0.55"/>
<ellipse cx="1113.9" cy="290.6" rx="15.1" ry="3" opacity="0.5"/>
<ellipse cx="1119.2" cy="293.8" rx="15.2" ry="2.7" opacity="0.55"/>
<ellipse cx="1118.3" cy="296.8" rx="20.8" ry="2.9" opacity="0.48"/>
<ellipse cx="1112.8" cy="300.1" rx="18.4" ry="1.9" opacity="0.8"/>
<ellipse cx="1112.3" cy="303.7" rx="18.9" ry="2" opacity="0.55"/>
<ellipse cx="1117.7" cy="307" rx="19.1" ry="2.7" opacity="0.69"/>
<ellipse cx="1123.2" cy="309.8" rx="23.9" ry="2.1" opacity="0.72"/>
<ellipse cx="1112.8" cy="313.6" rx="15.4" ry="1.7" opacity="0.91"/>
<ellipse cx="1117.4" cy="316.6" rx="8.5" ry="2.3" opacity="0.6"/>
<ellipse cx="820.9" cy="346.9" rx="15.5" ry="1.6" opacity="0.65"/>
<ellipse cx="828.3" cy="349.4" rx="23.4" ry="2.4" opacity="0.51"/>
<ellipse cx="821.2" cy="352.2" rx="20.7" ry="2.8" opacity="0.67"/>
<ellipse cx="821.4" cy="355.6" rx="29.3" ry="2.3" opacity="0.51"/>
<ellipse cx="830" cy="358.7" rx="14.4" ry="2.8" opacity="0.8"/>
<ellipse cx="828.4" cy="361.2" rx="12.3" ry="1.7" opacity="0.65"/>
<ellipse cx="718.7" cy="349.6" rx="9.4" ry="2.8" opacity="0.5"/>
<ellipse cx="721.5" cy="353" rx="11.2" ry="1.7" opacity="0.7"/>
<ellipse cx="718.2" cy="355.8" rx="12.9" ry="1.8" opacity="0.71"/>
<ellipse cx="714.4" cy="359" rx="10.4" ry="2" opacity="0.56"/>
<ellipse cx="719.6" cy="362.6" rx="6.6" ry="1.7" opacity="0.54"/>
<ellipse cx="945.9" cy="381.6" rx="18.6" ry="2.5" opacity="0.22"/>
<ellipse cx="935.3" cy="384.9" rx="25.9" ry="2.4" opacity="0.32"/>
<ellipse cx="945.4" cy="387.9" rx="33.6" ry="1.9" opacity="0.36"/>
<ellipse cx="940.7" cy="391.5" rx="24.9" ry="2" opacity="0.29"/>
<ellipse cx="935.6" cy="394.9" rx="25.7" ry="1.9" opacity="0.38"/>
<ellipse cx="941.1" cy="398.2" rx="19.3" ry="2.6" opacity="0.29"/>
<ellipse cx="1308.8" cy="381.9" rx="4" ry="1.7" opacity="0.23"/>
<ellipse cx="1311.1" cy="385" rx="5.4" ry="2.8" opacity="0.22"/>
<ellipse cx="1308.9" cy="387.7" rx="6.7" ry="1.8" opacity="0.19"/>
<ellipse cx="1311.3" cy="390.9" rx="11.4" ry="2.3" opacity="0.23"/>
<ellipse cx="1311" cy="394.6" rx="12.3" ry="2.1" opacity="0.19"/>
<ellipse cx="1313.8" cy="397.2" rx="10.5" ry="3" opacity="0.25"/>
<ellipse cx="1307.7" cy="400.9" rx="12.6" ry="2.1" opacity="0.18"/>
<ellipse cx="1310.9" cy="404.1" rx="9.7" ry="2.3" opacity="0.25"/>
<ellipse cx="1308.9" cy="407.5" rx="13.6" ry="2.7" opacity="0.26"/>
<ellipse cx="1312" cy="410.4" rx="12" ry="1.8" opacity="0.24"/>
<ellipse cx="1313.9" cy="414" rx="13.5" ry="2.8" opacity="0.16"/>
<ellipse cx="1309.3" cy="417.2" rx="14.4" ry="1.7" opacity="0.17"/>
<ellipse cx="1310.5" cy="420.1" rx="15" ry="2.9" opacity="0.19"/>
<ellipse cx="1316.3" cy="423.2" rx="10.6" ry="1.8" opacity="0.26"/>
<ellipse cx="1312.5" cy="426.4" rx="13.8" ry="2" opacity="0.26"/>
<ellipse cx="1312.9" cy="430" rx="15.4" ry="1.8" opacity="0.25"/>
<ellipse cx="1309.7" cy="432.6" rx="15.6" ry="2.4" opacity="0.25"/>
<ellipse cx="1308.2" cy="435.7" rx="12.7" ry="1.6" opacity="0.16"/>
<ellipse cx="1313.4" cy="439.6" rx="14.6" ry="2" opacity="0.23"/>
<ellipse cx="1312.8" cy="442.6" rx="10.4" ry="2.7" opacity="0.14"/>
<ellipse cx="1308.8" cy="445.4" rx="10.3" ry="2.1" opacity="0.22"/>
<ellipse cx="1309.9" cy="448.5" rx="9.6" ry="2.4" opacity="0.18"/>
<ellipse cx="1313.5" cy="452.1" rx="6" ry="1.8" opacity="0.27"/>
<ellipse cx="1311.2" cy="455.3" rx="6.3" ry="2.5" opacity="0.23"/>
<ellipse cx="1311.9" cy="458.6" rx="4" ry="3" opacity="0.25"/>
<ellipse cx="1121.9" cy="438.8" rx="4" ry="2.4" opacity="0.21"/>
<ellipse cx="1121.9" cy="441.7" rx="5.3" ry="2.9" opacity="0.15"/>
<ellipse cx="1122.7" cy="444.5" rx="7.2" ry="2.6" opacity="0.18"/>
<ellipse cx="1122.2" cy="448.1" rx="6.7" ry="1.7" opacity="0.12"/>
<ellipse cx="1121.8" cy="451" rx="8.1" ry="1.7" opacity="0.19"/>
<ellipse cx="1121.7" cy="454.2" rx="7.3" ry="2.2" opacity="0.14"/>
<ellipse cx="1122.8" cy="457" rx="10.8" ry="2.5" opacity="0.21"/>
<ellipse cx="1121.5" cy="460.4" rx="10.5" ry="2.6" opacity="0.17"/>
<ellipse cx="1122.5" cy="463.9" rx="7" ry="1.8" opacity="0.17"/>
<ellipse cx="1121.5" cy="467" rx="6.4" ry="2" opacity="0.15"/>
<ellipse cx="1122.6" cy="469.5" rx="10.5" ry="2.2" opacity="0.15"/>
<ellipse cx="1121.2" cy="473" rx="6" ry="2.9" opacity="0.14"/>
<ellipse cx="1122.9" cy="476.1" rx="9.2" ry="2.3" opacity="0.13"/>
<ellipse cx="1122.7" cy="479" rx="8.1" ry="1.9" opacity="0.2"/>
<ellipse cx="1121.4" cy="482.2" rx="5.2" ry="2.8" opacity="0.22"/>
<ellipse cx="1121.4" cy="485.2" rx="4" ry="2.8" opacity="0.12"/>
<ellipse cx="1323.9" cy="421.3" rx="14.2" ry="2.9" opacity="0.62"/>
<ellipse cx="1330.3" cy="425.2" rx="17.6" ry="2.9" opacity="0.48"/>
<ellipse cx="1323.8" cy="428" rx="20.9" ry="2.6" opacity="0.39"/>
<ellipse cx="1329.8" cy="431.4" rx="21.3" ry="2.7" opacity="0.45"/>
<ellipse cx="1328.5" cy="435.1" rx="26.2" ry="1.9" opacity="0.43"/>
<ellipse cx="1323.3" cy="438.7" rx="13.6" ry="2.5" opacity="0.36"/>
<ellipse cx="1124.2" cy="424" rx="8" ry="2.3" opacity="0.29"/>
<ellipse cx="1121.9" cy="426.9" rx="10.2" ry="2.7" opacity="0.3"/>
<ellipse cx="1121.9" cy="429.8" rx="14.4" ry="2" opacity="0.43"/>
<ellipse cx="1128.1" cy="432.9" rx="14.3" ry="1.6" opacity="0.4"/>
<ellipse cx="1127.6" cy="436.6" rx="6.7" ry="2.3" opacity="0.32"/>
<ellipse cx="1725.4" cy="129.6" rx="11.2" ry="2.5" opacity="0.78"/>
<ellipse cx="1730.9" cy="132.8" rx="15.7" ry="2.6" opacity="0.67"/>
<ellipse cx="1730.2" cy="136.4" rx="14" ry="1.8" opacity="0.71"/>
<ellipse cx="1730.1" cy="139" rx="15.3" ry="2.7" opacity="0.79"/>
<ellipse cx="1723.8" cy="142.2" rx="10.8" ry="2.4" opacity="0.66"/>
<ellipse cx="1519.3" cy="157.3" rx="8.4" ry="2.4" opacity="0.82"/>
<ellipse cx="1511.8" cy="160.7" rx="11.1" ry="2.3" opacity="0.63"/>
<ellipse cx="1520.2" cy="164.3" rx="13.9" ry="1.7" opacity="0.84"/>
<ellipse cx="1520.1" cy="167.7" rx="16.3" ry="1.9" opacity="0.5"/>
<ellipse cx="1515" cy="170.8" rx="10.6" ry="2.5" opacity="0.67"/>
<ellipse cx="1512.6" cy="174.1" rx="9.9" ry="2.7" opacity="0.52"/>
<ellipse cx="1516.8" cy="177.5" rx="7.3" ry="2.8" opacity="0.54"/>
<ellipse cx="1513.7" cy="180.9" rx="13" ry="1.9" opacity="0.6"/>
<ellipse cx="1517.5" cy="184.3" rx="14" ry="3" opacity="0.35"/>
<ellipse cx="1510.6" cy="188.2" rx="10.9" ry="1.9" opacity="0.57"/>
<ellipse cx="1934.8" cy="157.3" rx="7.2" ry="2.2" opacity="0.47"/>
<ellipse cx="1939.8" cy="160.3" rx="16.5" ry="2.6" opacity="0.54"/>
<ellipse cx="1934.2" cy="163.7" rx="15.9" ry="2.2" opacity="0.85"/>
<ellipse cx="1942.2" cy="166.9" rx="14.7" ry="2.5" opacity="0.46"/>
<ellipse cx="1932.2" cy="170.1" rx="16.9" ry="2.1" opacity="0.75"/>
<ellipse cx="1941.2" cy="173.6" rx="13.6" ry="2.2" opacity="0.61"/>
<ellipse cx="1940" cy="176.7" rx="7.1" ry="1.9" opacity="0.59"/>
<ellipse cx="1933.8" cy="178.5" rx="9.1" ry="1.9" opacity="0.33"/>
<ellipse cx="1936.5" cy="182.2" rx="12.4" ry="3" opacity="0.46"/>
<ellipse cx="1935.9" cy="186.1" rx="11.5" ry="1.7" opacity="0.47"/>
<ellipse cx="1932.4" cy="189.1" rx="8.6" ry="1.9" opacity="0.35"/>
<ellipse cx="1735.6" cy="247.4" rx="10.5" ry="2" opacity="0.52"/>
<ellipse cx="1731.3" cy="250.2" rx="17.1" ry="2.7" opacity="0.66"/>
<ellipse cx="1730.9" cy="253.8" rx="12.4" ry="2.1" opacity="0.42"/>
<ellipse cx="1736.2" cy="256.8" rx="16.2" ry="2.3" opacity="0.41"/>
<ellipse cx="1727.5" cy="259.4" rx="15.3" ry="1.8" opacity="0.61"/>
<ellipse cx="1732.1" cy="262.1" rx="15.1" ry="2.4" opacity="0.44"/>
<ellipse cx="1735.7" cy="265.7" rx="12" ry="2.5" opacity="0.44"/>
<ellipse cx="1735.6" cy="268.3" rx="8.2" ry="2.2" opacity="0.53"/>
<ellipse cx="1728.3" cy="268.1" rx="7.6" ry="2.1" opacity="0.3"/>
<ellipse cx="1731.1" cy="270.8" rx="8.8" ry="2.4" opacity="0.45"/>
<ellipse cx="1731.4" cy="275.2" rx="10.6" ry="2.9" opacity="0.3"/>
<ellipse cx="1733.8" cy="278.4" rx="8.7" ry="2.8" opacity="0.31"/>
<ellipse cx="1732.9" cy="225.7" rx="4" ry="2.1" opacity="0.17"/>
<ellipse cx="1733" cy="228.6" rx="6" ry="2" opacity="0.19"/>
<ellipse cx="1732.4" cy="231.7" rx="7.9" ry="2.5" opacity="0.2"/>
<ellipse cx="1732.9" cy="234.6" rx="8" ry="1.8" opacity="0.26"/>
<ellipse cx="1733.4" cy="238.2" rx="9.3" ry="1.6" opacity="0.23"/>
<ellipse cx="1732.8" cy="241" rx="6.7" ry="1.7" opacity="0.25"/>
<ellipse cx="1732.7" cy="244.3" rx="7.9" ry="2" opacity="0.17"/>
<ellipse cx="1733.1" cy="247.2" rx="8.3" ry="2" opacity="0.28"/>
<ellipse cx="1733.2" cy="250.2" rx="4.3" ry="2.9" opacity="0.22"/>
<ellipse cx="1523.9" cy="289.6" rx="13.3" ry="2.5" opacity="0.76"/>
<ellipse cx="1516.8" cy="292.4" rx="16" ry="2.8" opacity="0.88"/>
<ellipse cx="1513.3" cy="295.4" rx="24.5" ry="1.8" opacity="0.7"/>
<ellipse cx="1526.9" cy="298.4" rx="19.7" ry="1.8" opacity="0.56"/>
<ellipse cx="1516.2" cy="301.3" rx="23.6" ry="1.6" opacity="0.72"/>
<ellipse cx="1519.9" cy="304.4" rx="17.2" ry="2.5" opacity="0.72"/>
<ellipse cx="1524.8" cy="307.6" rx="17.3" ry="3" opacity="0.62"/>
<ellipse cx="1517.3" cy="310.4" rx="13.1" ry="2.6" opacity="0.79"/>
<ellipse cx="1946.7" cy="288.7" rx="11.8" ry="1.8" opacity="0.76"/>
<ellipse cx="1940.1" cy="291.6" rx="15.3" ry="2" opacity="0.82"/>
<ellipse cx="1938.4" cy="294.8" rx="15.5" ry="2.1" opacity="0.55"/>
<ellipse cx="1935.7" cy="297.8" rx="15.9" ry="1.7" opacity="0.52"/>
<ellipse cx="1941.3" cy="301.1" rx="16.7" ry="2.7" opacity="0.69"/>
<ellipse cx="1947.3" cy="303.7" rx="26" ry="1.7" opacity="0.59"/>
<ellipse cx="1940.4" cy="307.1" rx="24.7" ry="2.6" opacity="0.59"/>
<ellipse cx="1939.6" cy="310.3" rx="18.1" ry="2.7" opacity="0.86"/>
<ellipse cx="1940.9" cy="313.5" rx="18.6" ry="2.6" opacity="0.76"/>
<ellipse cx="1936.6" cy="316.6" rx="16.9" ry="2.1" opacity="0.78"/>
<ellipse cx="1935" cy="319.2" rx="7.9" ry="2.4" opacity="0.91"/>
<ellipse cx="1745.4" cy="295.7" rx="6.2" ry="2.2" opacity="0.63"/>
<ellipse cx="1747.5" cy="298.7" rx="12.9" ry="1.7" opacity="0.66"/>
<ellipse cx="1742.5" cy="301.9" rx="7.9" ry="2.6" opacity="0.77"/>
<ellipse cx="1740.6" cy="305.4" rx="7" ry="2.4" opacity="0.57"/>
<ellipse cx="1742.2" cy="365.5" rx="4.2" ry="2.8" opacity="0.21"/>
<ellipse cx="1741.9" cy="368.8" rx="8.6" ry="3" opacity="0.23"/>
<ellipse cx="1742.2" cy="372.3" rx="10.6" ry="1.8" opacity="0.19"/>
<ellipse cx="1736.3" cy="375.1" rx="14.5" ry="2.3" opacity="0.18"/>
<ellipse cx="1739.7" cy="378.6" rx="9.5" ry="1.8" opacity="0.27"/>
<ellipse cx="1738.8" cy="381.8" rx="11.9" ry="2.1" opacity="0.21"/>
<ellipse cx="1743.2" cy="384.9" rx="11.1" ry="2" opacity="0.18"/>
<ellipse cx="1744.4" cy="388.3" rx="15.2" ry="1.9" opacity="0.31"/>
<ellipse cx="1742.3" cy="391.8" rx="15" ry="2.2" opacity="0.17"/>
<ellipse cx="1740.3" cy="395.1" rx="17.5" ry="2" opacity="0.32"/>
<ellipse cx="1738.4" cy="398.7" rx="20.6" ry="2.8" opacity="0.28"/>
<ellipse cx="1735.4" cy="401.4" rx="11.9" ry="1.8" opacity="0.18"/>
<ellipse cx="1736.9" cy="404.8" rx="18.3" ry="2.3" opacity="0.17"/>
<ellipse cx="1733.7" cy="407.9" rx="19.8" ry="2.3" opacity="0.3"/>
<ellipse cx="1737.9" cy="411.7" rx="17.3" ry="2.7" opacity="0.3"/>
<ellipse cx="1734.7" cy="414.9" rx="18.7" ry="2.9" opacity="0.23"/>
<ellipse cx="1743.4" cy="418.2" rx="12" ry="1.6" opacity="0.26"/>
<ellipse cx="1737.6" cy="421" rx="12.3" ry="2.5" opacity="0.3"/>
<ellipse cx="1737.4" cy="424.4" rx="12.8" ry="2" opacity="0.31"/>
<ellipse cx="1737.2" cy="427.7" rx="8" ry="2.6" opacity="0.2"/>
<ellipse cx="1740.9" cy="431.3" rx="8.2" ry="1.8" opacity="0.18"/>
<ellipse cx="1738.3" cy="434.1" rx="4.8" ry="1.6" opacity="0.25"/>
<ellipse cx="1735.1" cy="397.5" rx="4" ry="2.9" opacity="0.2"/>
<ellipse cx="1735.5" cy="401.1" rx="5.9" ry="1.8" opacity="0.33"/>
<ellipse cx="1734.5" cy="403.9" rx="9.8" ry="2.2" opacity="0.28"/>
<ellipse cx="1735.3" cy="406.9" rx="7.5" ry="2.9" opacity="0.22"/>
<ellipse cx="1735.9" cy="410.1" rx="8.2" ry="1.8" opacity="0.27"/>
<ellipse cx="1734.5" cy="413.5" rx="9.7" ry="2.5" opacity="0.31"/>
<ellipse cx="1735" cy="417.1" rx="9.1" ry="2.4" opacity="0.18"/>
<ellipse cx="1734.9" cy="420.3" rx="8.5" ry="2.5" opacity="0.23"/>
<ellipse cx="1735.2" cy="423.1" rx="5.5" ry="2.4" opacity="0.25"/>
<ellipse cx="1734.9" cy="426" rx="4.6" ry="2.4" opacity="0.26"/>
<ellipse cx="1949.5" cy="401" rx="7.8" ry="3" opacity="0.29"/>
<ellipse cx="1958.2" cy="403.7" rx="16.4" ry="2.2" opacity="0.31"/>
<ellipse cx="1949.9" cy="406.8" rx="22.9" ry="1.9" opacity="0.3"/>
<ellipse cx="1955.5" cy="410.5" rx="26" ry="2.7" opacity="0.25"/>
<ellipse cx="1956.2" cy="414" rx="17.3" ry="2.6" opacity="0.21"/>
<ellipse cx="1950.6" cy="417.1" rx="23.4" ry="2.8" opacity="0.2"/>
<ellipse cx="1942.8" cy="419.9" rx="26.7" ry="2.4" opacity="0.29"/>
<ellipse cx="1955" cy="423.4" rx="21.5" ry="2.8" opacity="0.29"/>
<ellipse cx="1955" cy="426.7" rx="30.8" ry="1.8" opacity="0.23"/>
<ellipse cx="1947.4" cy="429.6" rx="18.4" ry="2.8" opacity="0.3"/>
<ellipse cx="1948.1" cy="432.8" rx="19.8" ry="2.8" opacity="0.27"/>
<ellipse cx="1958.2" cy="436.7" rx="17.2" ry="1.9" opacity="0.27"/>
<ellipse cx="1944.9" cy="439.9" rx="23.2" ry="2.5" opacity="0.24"/>
<ellipse cx="1946.9" cy="442.5" rx="17" ry="2.5" opacity="0.21"/>
<ellipse cx="1944.6" cy="446.2" rx="16.2" ry="1.8" opacity="0.28"/>
<ellipse cx="1943.5" cy="449.3" rx="7" ry="2.9" opacity="0.27"/>
<ellipse cx="1964.7" cy="425.5" rx="11.3" ry="2.6" opacity="0.57"/>
<ellipse cx="1955.6" cy="428.7" rx="19.1" ry="1.8" opacity="0.54"/>
<ellipse cx="1955.6" cy="431.9" rx="27.6" ry="2.2" opacity="0.5"/>
<ellipse cx="1960.2" cy="435.6" rx="19.2" ry="1.9" opacity="0.52"/>
<ellipse cx="1953.7" cy="438.2" rx="17.7" ry="2.8" opacity="0.55"/>
<ellipse cx="2253.7" cy="299.6" rx="7.5" ry="2.6" opacity="0.7"/>
<ellipse cx="2254" cy="302.7" rx="7.7" ry="2" opacity="0.63"/>
<ellipse cx="2257.3" cy="306.3" rx="11.5" ry="2.5" opacity="0.55"/>
<ellipse cx="2259.7" cy="309" rx="11.6" ry="2" opacity="0.63"/>
<ellipse cx="2259.2" cy="312.2" rx="18.7" ry="2.4" opacity="0.68"/>
<ellipse cx="2250.1" cy="315.2" rx="20.5" ry="2.1" opacity="0.6"/>
<ellipse cx="2253.1" cy="318.8" rx="19.2" ry="2.9" opacity="0.86"/>
<ellipse cx="2254.6" cy="321.4" rx="19.2" ry="2.1" opacity="0.64"/>
<ellipse cx="2256.3" cy="324.9" rx="19.7" ry="3" opacity="0.87"/>
<ellipse cx="2258.9" cy="328.6" rx="16.8" ry="2.5" opacity="0.75"/>
<ellipse cx="2254.5" cy="331.7" rx="13.2" ry="2.2" opacity="0.73"/>
<ellipse cx="2251.5" cy="334.3" rx="21.5" ry="2.1" opacity="0.5"/>
<ellipse cx="2250" cy="337.6" rx="18" ry="1.8" opacity="0.73"/>
<ellipse cx="2252" cy="341" rx="16.5" ry="2.7" opacity="0.76"/>
<ellipse cx="2254.6" cy="344.3" rx="9.9" ry="1.6" opacity="0.82"/>
<ellipse cx="2249.3" cy="347.6" rx="12" ry="2.1" opacity="0.68"/>
<ellipse cx="2258.5" cy="350.4" rx="4.7" ry="2" opacity="0.66"/>
<ellipse cx="1955.6" cy="327.3" rx="8.7" ry="1.7" opacity="0.67"/>
<ellipse cx="1957" cy="330.6" rx="16.8" ry="2.2" opacity="0.46"/>
<ellipse cx="1960.7" cy="333.6" rx="16.7" ry="2.2" opacity="0.81"/>
<ellipse cx="1955.9" cy="336.7" rx="21.5" ry="3" opacity="0.67"/>
<ellipse cx="1964.4" cy="340.1" rx="18.4" ry="2.9" opacity="0.62"/>
<ellipse cx="1963.8" cy="342.9" rx="12.3" ry="2.6" opacity="0.75"/>
<ellipse cx="1954.3" cy="346.2" rx="10.1" ry="1.8" opacity="0.57"/>
<ellipse cx="296.3" cy="506" rx="8.4" ry="1.7" opacity="0.51"/>
<ellipse cx="283" cy="508.4" rx="10" ry="2.9" opacity="0.48"/>
<ellipse cx="297" cy="511.9" rx="16.4" ry="2.9" opacity="0.56"/>
<ellipse cx="288.1" cy="515.1" rx="21.5" ry="2" opacity="0.62"/>
<ellipse cx="288.7" cy="518.1" rx="18" ry="2.3" opacity="0.49"/>
<ellipse cx="281.9" cy="521.4" rx="20.6" ry="2.8" opacity="0.38"/>
<ellipse cx="288.2" cy="524.6" rx="23.1" ry="1.9" opacity="0.39"/>
<ellipse cx="289.7" cy="527.7" rx="21.2" ry="1.9" opacity="0.63"/>
<ellipse cx="288.3" cy="531" rx="17.9" ry="3" opacity="0.36"/>
<ellipse cx="287.6" cy="534.2" rx="31.9" ry="2.4" opacity="0.49"/>
<ellipse cx="291.6" cy="537.2" rx="27.5" ry="2" opacity="0.54"/>
<ellipse cx="282" cy="540.5" rx="30.1" ry="1.7" opacity="0.45"/>
<ellipse cx="288.7" cy="543.5" rx="31.1" ry="2.8" opacity="0.5"/>
<ellipse cx="282.5" cy="546.7" rx="29.6" ry="3" opacity="0.65"/>
<ellipse cx="295.7" cy="549.9" rx="24.3" ry="2.7" opacity="0.59"/>
<ellipse cx="281.9" cy="552.8" rx="30.9" ry="2.5" opacity="0.55"/>
<ellipse cx="281.4" cy="556.7" rx="28.8" ry="2.9" opacity="0.63"/>
<ellipse cx="294.3" cy="559.6" rx="19.2" ry="2.2" opacity="0.6"/>
<ellipse cx="282.3" cy="563.1" rx="31.9" ry="2.7" opacity="0.51"/>
<ellipse cx="289.1" cy="566.1" rx="23.6" ry="2.2" opacity="0.4"/>
<ellipse cx="282.3" cy="568.9" rx="27.8" ry="1.8" opacity="0.66"/>
<ellipse cx="283" cy="572.3" rx="24.2" ry="1.8" opacity="0.47"/>
<ellipse cx="297.6" cy="575.7" rx="23.1" ry="1.9" opacity="0.51"/>
<ellipse cx="283.2" cy="578.6" rx="25.1" ry="2.8" opacity="0.53"/>
<ellipse cx="287.8" cy="581.4" rx="19" ry="2.5" opacity="0.69"/>
<ellipse cx="288" cy="584.9" rx="19.4" ry="2.7" opacity="0.4"/>
<ellipse cx="291.5" cy="588.3" rx="12.2" ry="1.9" opacity="0.48"/>
<ellipse cx="291.6" cy="591" rx="11.2" ry="2.3" opacity="0.5"/>
<ellipse cx="287.4" cy="594.5" rx="8.2" ry="2.4" opacity="0.53"/>
<ellipse cx="288" cy="502.1" rx="9" ry="1.9" opacity="0.49"/>
<ellipse cx="281.4" cy="505.2" rx="15.8" ry="1.7" opacity="0.7"/>
<ellipse cx="284" cy="508.2" rx="20.4" ry="2.5" opacity="0.6"/>
<ellipse cx="284.3" cy="512.1" rx="25.4" ry="2.3" opacity="0.47"/>
<ellipse cx="282.1" cy="515.2" rx="17" ry="2.8" opacity="0.4"/>
<ellipse cx="285.8" cy="518.5" rx="23.3" ry="2.1" opacity="0.44"/>
<ellipse cx="289.6" cy="522" rx="25.7" ry="1.7" opacity="0.69"/>
<ellipse cx="285.5" cy="524.8" rx="18.2" ry="2.5" opacity="0.43"/>
<ellipse cx="291" cy="528.6" rx="21.3" ry="2.9" opacity="0.65"/>
<ellipse cx="288.3" cy="531.6" rx="23" ry="2" opacity="0.72"/>
<ellipse cx="281.2" cy="535.2" rx="12.7" ry="1.6" opacity="0.59"/>
<ellipse cx="281.3" cy="538.1" rx="8.4" ry="1.8" opacity="0.57"/>
<ellipse cx="309.6" cy="509.4" rx="5" ry="2.3" opacity="0.46"/>
<ellipse cx="315.8" cy="512.4" rx="11.7" ry="2.5" opacity="0.38"/>
<ellipse cx="313.7" cy="516" rx="12.8" ry="2.9" opacity="0.44"/>
<ellipse cx="316.7" cy="518.8" rx="10.5" ry="2.1" opacity="0.44"/>
<ellipse cx="310.6" cy="521.9" rx="14.7" ry="2.6" opacity="0.48"/>
<ellipse cx="310.4" cy="525.3" rx="16.4" ry="1.9" opacity="0.48"/>
<ellipse cx="313.7" cy="528.1" rx="20.1" ry="1.7" opacity="0.47"/>
<ellipse cx="307.9" cy="531.3" rx="16.8" ry="3" opacity="0.32"/>
<ellipse cx="313.8" cy="535" rx="11.9" ry="1.7" opacity="0.25"/>
<ellipse cx="314" cy="537.9" rx="19.2" ry="2.8" opacity="0.44"/>
<ellipse cx="312.3" cy="541" rx="10.7" ry="1.9" opacity="0.38"/>
<ellipse cx="308.7" cy="544" rx="12.5" ry="2.6" opacity="0.35"/>
<ellipse cx="311.9" cy="547.3" rx="7.7" ry="2.4" opacity="0.49"/>
<ellipse cx="309.8" cy="550.5" rx="4.7" ry="2.1" opacity="0.42"/>
<ellipse cx="597.3" cy="508.9" rx="9.7" ry="2.9" opacity="0.72"/>
<ellipse cx="589.8" cy="512.1" rx="8.9" ry="2.4" opacity="0.65"/>
<ellipse cx="597" cy="515" rx="15.9" ry="1.7" opacity="0.58"/>
<ellipse cx="583.7" cy="518.4" rx="12.9" ry="2.8" opacity="0.75"/>
<ellipse cx="595.3" cy="520.9" rx="13.9" ry="2.6" opacity="0.59"/>
<ellipse cx="595" cy="524.5" rx="23.4" ry="1.6" opacity="0.41"/>
<ellipse cx="595.4" cy="527.8" rx="27.4" ry="2.2" opacity="0.51"/>
<ellipse cx="594.4" cy="530.6" rx="16.4" ry="2" opacity="0.61"/>
<ellipse cx="592.8" cy="533.9" rx="21.1" ry="2.2" opacity="0.48"/>
<ellipse cx="584.3" cy="537.4" rx="19.5" ry="2" opacity="0.57"/>
<ellipse cx="585.8" cy="540.5" rx="21.9" ry="2.5" opacity="0.49"/>
<ellipse cx="596.1" cy="543.4" rx="21" ry="1.9" opacity="0.47"/>
<ellipse cx="593.7" cy="546.4" rx="22" ry="2.5" opacity="0.69"/>
<ellipse cx="594.3" cy="549.8" rx="18.5" ry="1.9" opacity="0.47"/>
<ellipse cx="587.9" cy="552.8" rx="30.2" ry="2.1" opacity="0.74"/>
<ellipse cx="584.1" cy="556.5" rx="21.7" ry="2.7" opacity="0.69"/>
<ellipse cx="588" cy="559.1" rx="26.2" ry="2" opacity="0.61"/>
<ellipse cx="595.2" cy="562.6" rx="21.2" ry="1.6" opacity="0.58"/>
<ellipse cx="596.7" cy="565.5" rx="15.5" ry="1.8" opacity="0.46"/>
<ellipse cx="597" cy="569" rx="23.6" ry="2.1" opacity="0.74"/>
<ellipse cx="597.2" cy="571.6" rx="19.4" ry="1.9" opacity="0.44"/>
<ellipse cx="593.7" cy="575.2" rx="17.9" ry="2.9" opacity="0.56"/>
<ellipse cx="586.3" cy="578.1" rx="9.4" ry="2.9" opacity="0.41"/>
<ellipse cx="582.7" cy="581.2" rx="6.8" ry="2" opacity="0.46"/>
<ellipse cx="583.1" cy="569.3" rx="4" ry="2.4" opacity="0.29"/>
<ellipse cx="582.3" cy="572.8" rx="5.3" ry="1.9" opacity="0.18"/>
<ellipse cx="583.7" cy="575.8" rx="6.1" ry="2.3" opacity="0.19"/>
<ellipse cx="582.7" cy="579.1" rx="6.4" ry="2.7" opacity="0.33"/>
<ellipse cx="583.6" cy="582.4" rx="7.1" ry="2.3" opacity="0.2"/>
<ellipse cx="582.2" cy="586" rx="9.2" ry="2.7" opacity="0.23"/>
<ellipse cx="582.5" cy="588.4" rx="6.1" ry="2.6" opacity="0.2"/>
<ellipse cx="583.5" cy="591.6" rx="6.6" ry="2.3" opacity="0.27"/>
<ellipse cx="582.2" cy="595.2" rx="6.6" ry="2" opacity="0.17"/>
<ellipse cx="582.8" cy="598.2" rx="8.6" ry="2.3" opacity="0.27"/>
<ellipse cx="583.6" cy="601.5" rx="7.4" ry="2.4" opacity="0.23"/>
<ellipse cx="582.7" cy="604.8" rx="7.8" ry="2.9" opacity="0.2"/>
<ellipse cx="583.6" cy="608.3" rx="9.4" ry="1.8" opacity="0.25"/>
<ellipse cx="582.5" cy="611.6" rx="6.7" ry="2.6" opacity="0.2"/>
<ellipse cx="583.7" cy="614.5" rx="5.9" ry="2" opacity="0.18"/>
<ellipse cx="583.1" cy="617.7" rx="6.2" ry="2.3" opacity="0.32"/>
<ellipse cx="582.2" cy="620.8" rx="5.7" ry="2.3" opacity="0.21"/>
<ellipse cx="582.9" cy="624.1" rx="5.7" ry="1.7" opacity="0.25"/>
<ellipse cx="583.8" cy="627.2" rx="4.6" ry="2" opacity="0.24"/>
<ellipse cx="582.6" cy="630.1" rx="4" ry="2.8" opacity="0.3"/>
<ellipse cx="620.1" cy="536.5" rx="9.1" ry="2.2" opacity="0.34"/>
<ellipse cx="619.8" cy="540.4" rx="13.4" ry="2" opacity="0.41"/>
<ellipse cx="616" cy="543.3" rx="14.7" ry="1.9" opacity="0.4"/>
<ellipse cx="625.5" cy="546.9" rx="22.9" ry="2.6" opacity="0.4"/>
<ellipse cx="624" cy="550.2" rx="22.5" ry="1.8" opacity="0.4"/>
<ellipse cx="625.5" cy="553.2" rx="16.9" ry="1.6" opacity="0.33"/>
<ellipse cx="621.5" cy="556.5" rx="22.9" ry="2.9" opacity="0.43"/>
<ellipse cx="622.2" cy="560.1" rx="14.5" ry="1.8" opacity="0.44"/>
<ellipse cx="615.9" cy="563.6" rx="16" ry="2.6" opacity="0.39"/>
<ellipse cx="615.1" cy="567.1" rx="16.9" ry="2.6" opacity="0.23"/>
<ellipse cx="623.8" cy="570.3" rx="14.6" ry="2.8" opacity="0.35"/>
<ellipse cx="619.9" cy="573.7" rx="7.6" ry="2.1" opacity="0.3"/>
<ellipse cx="720.4" cy="507.2" rx="4.2" ry="1.9" opacity="0.64"/>
<ellipse cx="716.2" cy="510.9" rx="11.5" ry="2" opacity="0.49"/>
<ellipse cx="718.8" cy="513.6" rx="13.7" ry="2.9" opacity="0.51"/>
<ellipse cx="712.9" cy="517.3" rx="18.5" ry="2.9" opacity="0.62"/>
<ellipse cx="713.5" cy="520.5" rx="19.2" ry="2" opacity="0.59"/>
<ellipse cx="721.4" cy="523.3" rx="13.3" ry="2.3" opacity="0.57"/>
<ellipse cx="711.5" cy="526.6" rx="16.4" ry="2.4" opacity="0.48"/>
<ellipse cx="709.3" cy="529.4" rx="15.1" ry="2.1" opacity="0.59"/>
<ellipse cx="714.7" cy="533.1" rx="22.4" ry="2.2" opacity="0.48"/>
<ellipse cx="710.3" cy="535.8" rx="26.7" ry="2.2" opacity="0.65"/>
<ellipse cx="718.1" cy="539.2" rx="22.5" ry="2.9" opacity="0.73"/>
<ellipse cx="723.5" cy="541.9" rx="22.6" ry="2.3" opacity="0.46"/>
<ellipse cx="710.8" cy="545.5" rx="16.9" ry="2.4" opacity="0.49"/>
<ellipse cx="713.3" cy="548.6" rx="25.3" ry="2.7" opacity="0.63"/>
<ellipse cx="715" cy="551.7" rx="21.9" ry="1.7" opacity="0.57"/>
<ellipse cx="709.3" cy="555.1" rx="27.2" ry="1.7" opacity="0.49"/>
<ellipse cx="710.4" cy="558" rx="21.4" ry="2.2" opacity="0.61"/>
<ellipse cx="718.2" cy="561.2" rx="20.6" ry="2.6" opacity="0.62"/>
<ellipse cx="710.4" cy="563.8" rx="23.9" ry="1.7" opacity="0.57"/>
<ellipse cx="714.4" cy="566.9" rx="15.8" ry="2.3" opacity="0.43"/>
<ellipse cx="715.8" cy="570.8" rx="23.7" ry="2.4" opacity="0.51"/>
<ellipse cx="713.1" cy="574" rx="14.9" ry="1.9" opacity="0.72"/>
<ellipse cx="714.5" cy="576.7" rx="17" ry="2.8" opacity="0.48"/>
<ellipse cx="715.2" cy="580.1" rx="18.3" ry="2.1" opacity="0.55"/>
<ellipse cx="717.9" cy="583" rx="13.4" ry="2.2" opacity="0.5"/>
<ellipse cx="715.6" cy="586.4" rx="12.4" ry="2.8" opacity="0.56"/>
<ellipse cx="723.1" cy="589.2" rx="12.5" ry="2.7" opacity="0.54"/>
<ellipse cx="712.9" cy="592.6" rx="6.5" ry="2.6" opacity="0.75"/>
<ellipse cx="699.2" cy="507.7" rx="9.3" ry="2.5" opacity="0.4"/>
<ellipse cx="705.8" cy="510.9" rx="14" ry="2.1" opacity="0.56"/>
<ellipse cx="703.2" cy="513.4" rx="15.1" ry="2" opacity="0.53"/>
<ellipse cx="705.9" cy="516.7" rx="16.5" ry="1.9" opacity="0.63"/>
<ellipse cx="703.9" cy="519.7" rx="18.8" ry="2.8" opacity="0.46"/>
<ellipse cx="703.1" cy="523.2" rx="19.6" ry="2.6" opacity="0.52"/>
<ellipse cx="700.7" cy="526" rx="18.1" ry="2.4" opacity="0.66"/>
<ellipse cx="697.9" cy="529.1" rx="15.9" ry="2.6" opacity="0.64"/>
<ellipse cx="700.3" cy="532.3" rx="9" ry="2.3" opacity="0.39"/>
<ellipse cx="834.2" cy="567.7" rx="9.9" ry="2" opacity="0.6"/>
<ellipse cx="833.4" cy="570.7" rx="10.5" ry="2.2" opacity="0.5"/>
<ellipse cx="838" cy="574.3" rx="17" ry="2.1" opacity="0.58"/>
<ellipse cx="834.5" cy="576.7" rx="15.9" ry="2.6" opacity="0.6"/>
<ellipse cx="830.1" cy="580.2" rx="16.7" ry="2.4" opacity="0.34"/>
<ellipse cx="827.4" cy="583.3" rx="21.4" ry="2" opacity="0.62"/>
<ellipse cx="827.7" cy="586.9" rx="17" ry="1.8" opacity="0.36"/>
<ellipse cx="828.9" cy="590" rx="21.6" ry="2.3" opacity="0.56"/>
<ellipse cx="836.7" cy="592.5" rx="21.4" ry="1.9" opacity="0.56"/>
<ellipse cx="837" cy="596.2" rx="14.5" ry="1.9" opacity="0.49"/>
<ellipse cx="836.1" cy="599.1" rx="12.8" ry="2.4" opacity="0.53"/>
<ellipse cx="828.3" cy="602.8" rx="5.9" ry="2.5" opacity="0.38"/>
<ellipse cx="931.1" cy="511" rx="9.5" ry="2.2" opacity="0.8"/>
<ellipse cx="927.3" cy="514.1" rx="17.4" ry="2.1" opacity="0.75"/>
<ellipse cx="937.4" cy="516.8" rx="22.5" ry="1.9" opacity="0.6"/>
<ellipse cx="925.5" cy="520" rx="23" ry="2.6" opacity="0.47"/>
<ellipse cx="933.2" cy="523.7" rx="22" ry="1.7" opacity="0.46"/>
<ellipse cx="933.4" cy="526.5" rx="27.3" ry="2.8" opacity="0.47"/>
<ellipse cx="934.8" cy="529.5" rx="15.2" ry="1.8" opacity="0.56"/>
<ellipse cx="929.4" cy="533.1" rx="20.6" ry="2.3" opacity="0.57"/>
<ellipse cx="930" cy="536.2" rx="14.1" ry="1.9" opacity="0.57"/>
<ellipse cx="929.3" cy="539.2" rx="7.3" ry="2.4" opacity="0.56"/>
<ellipse cx="1117.5" cy="501.3" rx="10.1" ry="2.3" opacity="0.58"/>
<ellipse cx="1119.9" cy="505.3" rx="18.1" ry="2.5" opacity="0.74"/>
<ellipse cx="1116.3" cy="508.3" rx="18.1" ry="2.3" opacity="0.65"/>
<ellipse cx="1122.5" cy="511.7" rx="21.7" ry="2.8" opacity="0.54"/>
<ellipse cx="1110.7" cy="514.6" rx="20" ry="2.7" opacity="0.71"/>
<ellipse cx="1123.8" cy="518.2" rx="19.3" ry="2.8" opacity="0.74"/>
<ellipse cx="1117.3" cy="521.8" rx="26.5" ry="2.2" opacity="0.68"/>
<ellipse cx="1124.5" cy="525.3" rx="28.7" ry="2.8" opacity="0.47"/>
<ellipse cx="1118.7" cy="528.1" rx="27" ry="2.3" opacity="0.58"/>
<ellipse cx="1125.6" cy="532" rx="18.9" ry="1.7" opacity="0.88"/>
<ellipse cx="1116.3" cy="534.6" rx="12.9" ry="2.5" opacity="0.49"/>
<ellipse cx="1117" cy="538.4" rx="11.5" ry="2.7" opacity="0.7"/>
<ellipse cx="1113.9" cy="526.7" rx="4" ry="2.9" opacity="0.26"/>
<ellipse cx="1114.1" cy="529.6" rx="4" ry="2.1" opacity="0.24"/>
<ellipse cx="1113.5" cy="533.2" rx="4" ry="2.5" opacity="0.19"/>
<ellipse cx="1113.7" cy="535.9" rx="6.4" ry="2.9" opacity="0.24"/>
<ellipse cx="1113.6" cy="539.2" rx="6.8" ry="2.7" opacity="0.27"/>
<ellipse cx="1113.2" cy="543" rx="5.2" ry="2.7" opacity="0.18"/>
<ellipse cx="1113.4" cy="545.7" rx="5.4" ry="2.3" opacity="0.3"/>
<ellipse cx="1114.6" cy="549" rx="6.7" ry="1.9" opacity="0.25"/>
<ellipse cx="1113.2" cy="552.5" rx="10" ry="2.4" opacity="0.21"/>
<ellipse cx="1114.4" cy="555.9" rx="7.2" ry="1.9" opacity="0.23"/>
<ellipse cx="1113.6" cy="559.2" rx="7.3" ry="2.9" opacity="0.26"/>
<ellipse cx="1113.5" cy="561.7" rx="7.2" ry="2" opacity="0.28"/>
<ellipse cx="1114.3" cy="565.5" rx="11.2" ry="2.5" opacity="0.21"/>
<ellipse cx="1113.2" cy="568.7" rx="8.9" ry="2.3" opacity="0.21"/>
<ellipse cx="1113.2" cy="571.8" rx="6.7" ry="3" opacity="0.21"/>
<ellipse cx="1114.2" cy="574.9" rx="7.2" ry="2.9" opacity="0.18"/>
<ellipse cx="1114.5" cy="578.2" rx="9" ry="2.4" opacity="0.19"/>
<ellipse cx="1113.2" cy="581.2" rx="10" ry="2.8" opacity="0.16"/>
<ellipse cx="1114.6" cy="584.4" rx="8.7" ry="2.5" opacity="0.27"/>
<ellipse cx="1113.2" cy="588.1" rx="9.8" ry="2.8" opacity="0.18"/>
<ellipse cx="1113.2" cy="590.9" rx="6.3" ry="2.8" opacity="0.21"/>
<ellipse cx="1114.6" cy="594" rx="6.2" ry="2.4" opacity="0.3"/>
<ellipse cx="1113.6" cy="597.2" rx="6.3" ry="1.9" opacity="0.17"/>
<ellipse cx="1113.4" cy="600.6" rx="8.3" ry="1.8" opacity="0.24"/>
<ellipse cx="1114.1" cy="603.9" rx="5.9" ry="2.3" opacity="0.21"/>
<ellipse cx="1114.2" cy="607.2" rx="5.1" ry="1.9" opacity="0.21"/>
<ellipse cx="1114.2" cy="610.1" rx="7.8" ry="2.1" opacity="0.24"/>
<ellipse cx="1113.8" cy="614.1" rx="4.5" ry="2.6" opacity="0.21"/>
<ellipse cx="1113.2" cy="617.1" rx="6" ry="2" opacity="0.2"/>
<ellipse cx="1114.4" cy="620.4" rx="4.4" ry="2.9" opacity="0.18"/>
<ellipse cx="1114.5" cy="623.3" rx="4" ry="1.8" opacity="0.3"/>
<ellipse cx="1138.5" cy="506.9" rx="11.3" ry="2.4" opacity="0.43"/>
<ellipse cx="1144.2" cy="510.3" rx="14.9" ry="3" opacity="0.4"/>
<ellipse cx="1136.2" cy="513.5" rx="20.1" ry="2.2" opacity="0.34"/>
<ellipse cx="1135.3" cy="516.4" rx="18.6" ry="2.5" opacity="0.28"/>
<ellipse cx="1136.7" cy="519.9" rx="15" ry="2.2" opacity="0.41"/>
<ellipse cx="1138.5" cy="523.7" rx="6.8" ry="2.6" opacity="0.26"/>
<ellipse cx="1335.9" cy="510.8" rx="8.4" ry="2.1" opacity="0.44"/>
<ellipse cx="1332.4" cy="513.3" rx="10.8" ry="2" opacity="0.88"/>
<ellipse cx="1338.2" cy="516.8" rx="14.4" ry="1.9" opacity="0.65"/>
<ellipse cx="1341.5" cy="520" rx="25.2" ry="2.2" opacity="0.58"/>
<ellipse cx="1338.6" cy="522.8" rx="19.8" ry="2.2" opacity="0.74"/>
<ellipse cx="1342" cy="525.7" rx="26" ry="1.9" opacity="0.71"/>
<ellipse cx="1333.7" cy="528.8" rx="16.5" ry="1.9" opacity="0.76"/>
<ellipse cx="1342" cy="532.2" rx="23" ry="1.7" opacity="0.48"/>
<ellipse cx="1339.9" cy="534.9" rx="18.7" ry="2.6" opacity="0.68"/>
<ellipse cx="1329.2" cy="538.6" rx="14" ry="2.5" opacity="0.45"/>
<ellipse cx="1329.9" cy="541.2" rx="7.4" ry="1.7" opacity="0.67"/>
<ellipse cx="1524.9" cy="496.3" rx="7.5" ry="2.1" opacity="0.46"/>
<ellipse cx="1525.8" cy="499.8" rx="15" ry="2.4" opacity="0.65"/>
<ellipse cx="1527.1" cy="503.1" rx="18.2" ry="2" opacity="0.73"/>
<ellipse cx="1512.7" cy="506" rx="18.3" ry="2.3" opacity="0.52"/>
<ellipse cx="1520.2" cy="509.1" rx="20.4" ry="1.7" opacity="0.47"/>
<ellipse cx="1527.4" cy="512.3" rx="23.6" ry="2.7" opacity="0.53"/>
<ellipse cx="1524.6" cy="515.3" rx="22.2" ry="2.2" opacity="0.79"/>
<ellipse cx="1519.7" cy="518.4" rx="21.2" ry="2.1" opacity="0.82"/>
<ellipse cx="1513.7" cy="521.2" rx="21.2" ry="2.5" opacity="0.47"/>
<ellipse cx="1521.5" cy="524.4" rx="21.2" ry="2.7" opacity="0.6"/>
<ellipse cx="1525.8" cy="527.7" rx="19.8" ry="1.9" opacity="0.42"/>
<ellipse cx="1514.5" cy="531.2" rx="19.9" ry="1.8" opacity="0.78"/>
<ellipse cx="1522.6" cy="534.3" rx="14" ry="1.9" opacity="0.6"/>
<ellipse cx="1526.5" cy="537.3" rx="12.2" ry="2.1" opacity="0.47"/>
<ellipse cx="1513.1" cy="540.5" rx="10" ry="2.5" opacity="0.61"/>
<ellipse cx="1515.6" cy="543.8" rx="8.2" ry="1.7" opacity="0.66"/>
<ellipse cx="1514.7" cy="541.6" rx="4" ry="1.9" opacity="0.25"/>
<ellipse cx="1514.7" cy="544.4" rx="4.9" ry="2.5" opacity="0.2"/>
<ellipse cx="1514.5" cy="548.1" rx="6.4" ry="1.7" opacity="0.23"/>
<ellipse cx="1514.7" cy="550.8" rx="6" ry="2.8" opacity="0.19"/>
<ellipse cx="1513.5" cy="554.4" rx="5.9" ry="2.6" opacity="0.27"/>
<ellipse cx="1514.3" cy="557.4" rx="6.7" ry="2.6" opacity="0.23"/>
<ellipse cx="1513.5" cy="560.4" rx="5.7" ry="2.8" opacity="0.23"/>
<ellipse cx="1513.8" cy="564" rx="7.1" ry="1.8" opacity="0.3"/>
<ellipse cx="1514.3" cy="567.1" rx="6.3" ry="2.4" opacity="0.25"/>
<ellipse cx="1514.6" cy="570.4" rx="8.5" ry="3" opacity="0.22"/>
<ellipse cx="1513.9" cy="573.5" rx="7.5" ry="2.1" opacity="0.25"/>
<ellipse cx="1514.6" cy="576.5" rx="7.4" ry="2.7" opacity="0.26"/>
<ellipse cx="1514.2" cy="580" rx="7.5" ry="2" opacity="0.2"/>
<ellipse cx="1514.7" cy="582.6" rx="9.2" ry="2" opacity="0.21"/>
<ellipse cx="1514.2" cy="585.8" rx="6.2" ry="2.8" opacity="0.17"/>
<ellipse cx="1513.6" cy="589.1" rx="8.5" ry="2.8" opacity="0.21"/>
<ellipse cx="1513.7" cy="592.5" rx="5.9" ry="2.2" opacity="0.2"/>
<ellipse cx="1514.2" cy="595.9" rx="4.8" ry="2.7" opacity="0.2"/>
<ellipse cx="1513.3" cy="598.6" rx="4.7" ry="2.7" opacity="0.25"/>
<ellipse cx="1514.2" cy="601.7" rx="5.1" ry="2" opacity="0.16"/>
<ellipse cx="1514.8" cy="605.2" rx="4" ry="2.1" opacity="0.3"/>
<ellipse cx="1513.4" cy="608.7" rx="4" ry="2.7" opacity="0.17"/>
<ellipse cx="1547.1" cy="493.7" rx="5.9" ry="2.2" opacity="0.32"/>
<ellipse cx="1556.8" cy="497.3" rx="13.3" ry="2.9" opacity="0.48"/>
<ellipse cx="1555.3" cy="500.3" rx="14.9" ry="2.5" opacity="0.32"/>
<ellipse cx="1552.2" cy="503.5" rx="16" ry="2.6" opacity="0.46"/>
<ellipse cx="1555.9" cy="506.8" rx="20.6" ry="1.7" opacity="0.31"/>
<ellipse cx="1557.5" cy="509.6" rx="14.6" ry="2" opacity="0.4"/>
<ellipse cx="1549.4" cy="513.2" rx="18.3" ry="2.7" opacity="0.37"/>
<ellipse cx="1546" cy="516.8" rx="19.5" ry="2.4" opacity="0.3"/>
<ellipse cx="1549.2" cy="520.1" rx="11.3" ry="2.7" opacity="0.44"/>
<ellipse cx="1552.2" cy="523.2" rx="11.6" ry="1.9" opacity="0.4"/>
<ellipse cx="1547.3" cy="526.2" rx="8.7" ry="1.8" opacity="0.33"/>
<ellipse cx="1536.6" cy="479.5" rx="9.4" ry="3" opacity="0.71"/>
<ellipse cx="1545.5" cy="482.4" rx="11.3" ry="3" opacity="0.45"/>
<ellipse cx="1546.7" cy="485.7" rx="18.9" ry="1.9" opacity="0.43"/>
<ellipse cx="1546.3" cy="488.2" rx="13.6" ry="2.9" opacity="0.57"/>
<ellipse cx="1539.2" cy="491.2" rx="13.1" ry="2.5" opacity="0.66"/>
<ellipse cx="1541.5" cy="494.7" rx="8.1" ry="2.3" opacity="0.53"/>
<ellipse cx="1766.1" cy="481.6" rx="17.4" ry="2.1" opacity="0.6"/>
<ellipse cx="1759.8" cy="484.7" rx="18.3" ry="2.1" opacity="0.4"/>
<ellipse cx="1770.5" cy="488" rx="27" ry="2.8" opacity="0.4"/>
<ellipse cx="1758.4" cy="491.5" rx="26.4" ry="1.8" opacity="0.61"/>
<ellipse cx="1755.8" cy="495.3" rx="22.8" ry="1.7" opacity="0.39"/>
<ellipse cx="1766.3" cy="498.6" rx="12.7" ry="2.7" opacity="0.42"/>
<ellipse cx="1741.2" cy="491.3" rx="4.8" ry="2.6" opacity="0.54"/>
<ellipse cx="1737.7" cy="494.7" rx="8.9" ry="2.7" opacity="0.52"/>
<ellipse cx="1739.2" cy="498.1" rx="15.2" ry="2.9" opacity="0.8"/>
<ellipse cx="1734.4" cy="500.8" rx="17.6" ry="2.7" opacity="0.46"/>
<ellipse cx="1742.1" cy="504.1" rx="14.8" ry="2.6" opacity="0.5"/>
<ellipse cx="1738.1" cy="507.7" rx="19.7" ry="1.7" opacity="0.53"/>
<ellipse cx="1743.3" cy="510.4" rx="16.3" ry="2.4" opacity="0.75"/>
<ellipse cx="1740.8" cy="513.3" rx="15.1" ry="2.1" opacity="0.51"/>
<ellipse cx="1736.9" cy="516.5" rx="13.4" ry="2.4" opacity="0.58"/>
<ellipse cx="1732.2" cy="520.1" rx="15.9" ry="2.5" opacity="0.55"/>
<ellipse cx="1735.2" cy="523.2" rx="16.7" ry="1.7" opacity="0.53"/>
<ellipse cx="1732.4" cy="526.2" rx="13.8" ry="2.3" opacity="0.42"/>
<ellipse cx="1737.3" cy="529.8" rx="15.7" ry="2.3" opacity="0.42"/>
<ellipse cx="1738.7" cy="532.3" rx="19" ry="2.3" opacity="0.55"/>
<ellipse cx="1741.5" cy="536" rx="15.3" ry="2.8" opacity="0.78"/>
<ellipse cx="1737.5" cy="539.1" rx="15.2" ry="2.3" opacity="0.65"/>
<ellipse cx="1742.3" cy="542.1" rx="14.3" ry="1.7" opacity="0.72"/>
<ellipse cx="1742.9" cy="545.4" rx="10.1" ry="1.7" opacity="0.61"/>
<ellipse cx="1734" cy="548.3" rx="7.4" ry="2.4" opacity="0.47"/>
<ellipse cx="1733.4" cy="536.8" rx="4" ry="2" opacity="0.29"/>
<ellipse cx="1733.4" cy="539.3" rx="4" ry="2.8" opacity="0.27"/>
<ellipse cx="1733.3" cy="542.6" rx="4.5" ry="2.6" opacity="0.16"/>
<ellipse cx="1732.2" cy="546.3" rx="6.9" ry="2.3" opacity="0.21"/>
<ellipse cx="1733.7" cy="548.8" rx="8.8" ry="1.8" opacity="0.22"/>
<ellipse cx="1732.4" cy="552" rx="8.4" ry="2.1" opacity="0.22"/>
<ellipse cx="1733.2" cy="555.3" rx="7.7" ry="2.9" opacity="0.3"/>
<ellipse cx="1732.6" cy="558.8" rx="9.6" ry="1.9" opacity="0.22"/>
<ellipse cx="1732.8" cy="561.7" rx="8.6" ry="3" opacity="0.2"/>
<ellipse cx="1732.5" cy="564.3" rx="6.2" ry="2.6" opacity="0.28"/>
<ellipse cx="1732.6" cy="567.5" rx="6.6" ry="2.7" opacity="0.29"/>
<ellipse cx="1733.8" cy="570.8" rx="5.7" ry="3" opacity="0.26"/>
<ellipse cx="1733.4" cy="574" rx="7.6" ry="2.3" opacity="0.2"/>
<ellipse cx="1732.7" cy="577.2" rx="6.4" ry="2.5" opacity="0.18"/>
<ellipse cx="1732.6" cy="580.7" rx="4" ry="2.9" opacity="0.3"/>
<ellipse cx="1733.6" cy="583.8" rx="4" ry="2.7" opacity="0.24"/>
<ellipse cx="1951" cy="503.3" rx="6.9" ry="2.8" opacity="0.37"/>
<ellipse cx="1944.8" cy="506.4" rx="12.8" ry="2.9" opacity="0.71"/>
<ellipse cx="1948" cy="510" rx="16.3" ry="2.6" opacity="0.49"/>
<ellipse cx="1952.2" cy="513.3" rx="13.2" ry="2.6" opacity="0.64"/>
<ellipse cx="1944.1" cy="516.4" rx="16.1" ry="2.6" opacity="0.55"/>
<ellipse cx="1943.2" cy="519.3" rx="15" ry="1.9" opacity="0.44"/>
<ellipse cx="1948.5" cy="522.6" rx="21.1" ry="2.9" opacity="0.6"/>
<ellipse cx="1947" cy="525.6" rx="28" ry="2.6" opacity="0.58"/>
<ellipse cx="1937.3" cy="529.1" rx="22.1" ry="2.5" opacity="0.38"/>
<ellipse cx="1948" cy="532.5" rx="30.9" ry="2.4" opacity="0.65"/>
<ellipse cx="1953.8" cy="536" rx="30.3" ry="2.2" opacity="0.36"/>
<ellipse cx="1951.5" cy="538.9" rx="28.3" ry="2.5" opacity="0.49"/>
<ellipse cx="1947.2" cy="541.6" rx="31.5" ry="3" opacity="0.57"/>
<ellipse cx="1953.8" cy="545.5" rx="30.9" ry="2.2" opacity="0.68"/>
<ellipse cx="1941.9" cy="548.3" rx="19.7" ry="2.1" opacity="0.71"/>
<ellipse cx="1948.4" cy="551.5" rx="23.6" ry="1.7" opacity="0.47"/>
<ellipse cx="1946.8" cy="554.7" rx="21.3" ry="2.2" opacity="0.64"/>
<ellipse cx="1939.5" cy="557.9" rx="33.7" ry="2.3" opacity="0.44"/>
<ellipse cx="1952.1" cy="560.8" rx="23.4" ry="2" opacity="0.53"/>
<ellipse cx="1945.6" cy="564.4" rx="22.4" ry="1.7" opacity="0.48"/>
<ellipse cx="1949.9" cy="567.4" rx="29.6" ry="2.6" opacity="0.57"/>
<ellipse cx="1937" cy="571.1" rx="27.5" ry="1.8" opacity="0.62"/>
<ellipse cx="1950" cy="574.3" rx="29.6" ry="1.8" opacity="0.56"/>
<ellipse cx="1938.4" cy="577.3" rx="23.5" ry="3" opacity="0.54"/>
<ellipse cx="1942.9" cy="580.2" rx="26.6" ry="1.7" opacity="0.6"/>
<ellipse cx="1941.4" cy="583.4" rx="16.4" ry="2.4" opacity="0.47"/>
<ellipse cx="1953.8" cy="586.9" rx="21.1" ry="2.8" opacity="0.69"/>
<ellipse cx="1937.6" cy="589.8" rx="17.8" ry="2.4" opacity="0.38"/>
<ellipse cx="1938.3" cy="592.9" rx="15.2" ry="2.6" opacity="0.55"/>
<ellipse cx="1937.1" cy="596" rx="9" ry="2.8" opacity="0.65"/>
<ellipse cx="1971.3" cy="506.7" rx="8" ry="2.6" opacity="0.29"/>
<ellipse cx="1979.1" cy="510" rx="16.6" ry="1.8" opacity="0.47"/>
<ellipse cx="1980.3" cy="513.5" rx="14.7" ry="2.4" opacity="0.39"/>
<ellipse cx="1974.4" cy="516.7" rx="15.4" ry="2.8" opacity="0.37"/>
<ellipse cx="1973.3" cy="520.2" rx="16.7" ry="1.6" opacity="0.54"/>
<ellipse cx="1978.1" cy="523.5" rx="22.2" ry="1.7" opacity="0.32"/>
<ellipse cx="1978.5" cy="526.3" rx="17.4" ry="2.9" opacity="0.36"/>
<ellipse cx="1972.8" cy="529.8" rx="11.5" ry="1.6" opacity="0.41"/>
<ellipse cx="1982.4" cy="533.3" rx="7.8" ry="2" opacity="0.5"/>
<ellipse cx="1924.9" cy="497.6" rx="5.8" ry="2.5" opacity="0.52"/>
<ellipse cx="1927.1" cy="500.3" rx="13" ry="2.6" opacity="0.5"/>
<ellipse cx="1926.3" cy="504" rx="12.5" ry="3" opacity="0.53"/>
<ellipse cx="1925.2" cy="507.2" rx="16.2" ry="2.1" opacity="0.53"/>
<ellipse cx="1925.1" cy="509.7" rx="14.4" ry="2.8" opacity="0.37"/>
<ellipse cx="1926.8" cy="512.8" rx="14.6" ry="2.2" opacity="0.44"/>
<ellipse cx="1930.4" cy="516.3" rx="11.2" ry="1.7" opacity="0.4"/>
<ellipse cx="1933.5" cy="519.6" rx="10.3" ry="1.9" opacity="0.38"/>
<ellipse cx="1930.6" cy="522.7" rx="5" ry="2.4" opacity="0.47"/>
<ellipse cx="2255" cy="507" rx="5.5" ry="1.9" opacity="0.61"/>
<ellipse cx="2253.6" cy="509.6" rx="7.8" ry="2.6" opacity="0.58"/>
<ellipse cx="2262.7" cy="512.6" rx="7.5" ry="2.8" opacity="0.78"/>
<ellipse cx="2254.4" cy="516.1" rx="14.2" ry="2.6" opacity="0.8"/>
<ellipse cx="2254" cy="519.2" rx="9" ry="1.7" opacity="0.74"/>
<ellipse cx="2253.8" cy="522.7" rx="13.3" ry="2.5" opacity="0.47"/>
<ellipse cx="2259.5" cy="525.5" rx="14.9" ry="2.7" opacity="0.75"/>
<ellipse cx="2254.2" cy="528.7" rx="13.2" ry="2.3" opacity="0.42"/>
<ellipse cx="2261.3" cy="532.5" rx="16.9" ry="2.3" opacity="0.79"/>
<ellipse cx="2261.3" cy="535.7" rx="18.6" ry="1.9" opacity="0.55"/>
<ellipse cx="2257.7" cy="538.2" rx="18.3" ry="3" opacity="0.53"/>
<ellipse cx="2263.1" cy="541.7" rx="19.4" ry="2.7" opacity="0.78"/>
<ellipse cx="2259.3" cy="545.3" rx="14.1" ry="1.7" opacity="0.69"/>
<ellipse cx="2254.2" cy="548.6" rx="16.2" ry="2.4" opacity="0.44"/>
<ellipse cx="2257.1" cy="551.4" rx="12.3" ry="2.7" opacity="0.72"/>
<ellipse cx="2257.4" cy="554.9" rx="15.3" ry="1.7" opacity="0.74"/>
<ellipse cx="2254.2" cy="557.9" rx="14.6" ry="2.2" opacity="0.44"/>
<ellipse cx="2257.2" cy="560.7" rx="11.4" ry="1.8" opacity="0.75"/>
<ellipse cx="2258.6" cy="564.3" rx="17.1" ry="1.8" opacity="0.53"/>
<ellipse cx="2259.6" cy="567.7" rx="14" ry="2.5" opacity="0.43"/>
<ellipse cx="2261.7" cy="570.4" rx="12.1" ry="2.9" opacity="0.66"/>
<ellipse cx="2258.6" cy="573.6" rx="8.5" ry="2.2" opacity="0.8"/>
<ellipse cx="2252.8" cy="576.8" rx="8.2" ry="1.6" opacity="0.75"/>
<ellipse cx="2252.8" cy="580.5" rx="6" ry="2.4" opacity="0.51"/>
<ellipse cx="2260.7" cy="583.5" rx="5.4" ry="2" opacity="0.66"/>
<ellipse cx="2249.6" cy="566.4" rx="4" ry="2.8" opacity="0.26"/>
<ellipse cx="2250.8" cy="570" rx="4.9" ry="2.4" opacity="0.19"/>
<ellipse cx="2249.3" cy="572.9" rx="5.9" ry="1.7" opacity="0.25"/>
<ellipse cx="2250.5" cy="575.7" rx="5.7" ry="1.8" opacity="0.27"/>
<ellipse cx="2250.8" cy="578.9" rx="7.4" ry="2.8" opacity="0.28"/>
<ellipse cx="2250.8" cy="582.6" rx="9.1" ry="2.5" opacity="0.24"/>
<ellipse cx="2250.1" cy="585.2" rx="8.2" ry="1.9" opacity="0.25"/>
<ellipse cx="2249.5" cy="588.7" rx="10.1" ry="1.6" opacity="0.21"/>
<ellipse cx="2250.1" cy="591.5" rx="10.7" ry="2.3" opacity="0.25"/>
<ellipse cx="2250.1" cy="594.7" rx="9.7" ry="2.4" opacity="0.19"/>
<ellipse cx="2250.7" cy="597.5" rx="8.3" ry="2.9" opacity="0.2"/>
<ellipse cx="2249.9" cy="601" rx="8.2" ry="1.8" opacity="0.28"/>
<ellipse cx="2249.6" cy="603.7" rx="6.4" ry="1.9" opacity="0.18"/>
<ellipse cx="2249.4" cy="606.9" rx="6.7" ry="2.5" opacity="0.25"/>
<ellipse cx="2250.2" cy="610.4" rx="5.1" ry="2" opacity="0.23"/>
<ellipse cx="2250.4" cy="613.6" rx="4" ry="2.4" opacity="0.3"/>
</g>
<g filter="url(#bN)" fill="#00f">
<polygon points="300,523 480,527.5 300,532" opacity="0.8"/>
<polygon points="724,523 885,527 724,531" opacity="0.7"/>
<polygon points="845,579.5 890,583 845,586.5" opacity="0.5"/>
<polygon points="1540,523 1672,527 1540,531" opacity="0.8"/>
<polygon points="1978,522 2130,526 1978,530" opacity="0.8"/>
<polygon points="1140,522.5 1180,526 1140,529.5" opacity="0.5"/>
</g>
<g filter="url(#bL)" fill="#00f">
<rect x="98" y="164.4" width="192" height="7.2"/>
<rect x="598" y="164.4" width="130" height="7.2"/>
<rect x="917" y="163.9" width="207" height="7.2"/>
<rect x="1317" y="163.9" width="217" height="7.2"/>
<rect x="1736" y="164.4" width="221" height="7.2"/>
<rect x="98" y="295.5" width="168" height="9"/>
<rect x="595" y="295.5" width="147" height="9"/>
<rect x="915" y="294.5" width="203" height="9"/>
<rect x="1314" y="295.3" width="223" height="8.4"/>
<rect x="1733" y="296" width="224" height="9"/>
<rect x="1733" y="298.1" width="224" height="4.8"/>
<rect x="1117" y="199.4" width="210" height="7.2"/>
<rect x="1945" y="202" width="327" height="6"/>
<rect x="1526" y="257.3" width="252" height="5.4"/>
<rect x="1526" y="124.8" width="222" height="6"/>
<rect x="726" y="125.3" width="99" height="5.4"/>
<rect x="286" y="201" width="312" height="6"/>
<rect x="720" y="222" width="102" height="4.1"/>
<rect x="2258" y="164.4" width="14" height="7.2"/>
<rect x="2256" y="295.5" width="16" height="9"/>
</g>
<g filter="url(#bN)" fill="#00f">
<rect x="915" y="294.5" width="203" height="9"/>
<rect x="281" y="332" width="309" height="8"/>
<rect x="1939" y="331" width="333" height="12"/>
<rect x="714" y="351" width="110" height="8"/>
<rect x="1112" y="424" width="232" height="11"/>
<rect x="1534" y="478.5" width="210" height="11"/>
</g>
<g filter="url(#bM)" fill="#00f">
<rect x="92" y="517.2" width="186" height="17"/>
<rect x="284" y="549.2" width="302" height="27"/>
<rect x="592" y="517.2" width="131" height="18"/>
<rect x="716" y="564.2" width="120" height="35"/>
<rect x="920" y="511.7" width="202" height="26"/>
<rect x="1320" y="515.7" width="200" height="21"/>
<rect x="1742" y="518.2" width="198" height="16"/>
<rect x="1944" y="549.2" width="310" height="28"/>
</g>
<g filter="url(#bC)" fill="#b0104c">
<rect x="98" y="166.3" width="184" height="3.4" opacity="0.9"/>
<rect x="615" y="166.3" width="101" height="3.4" opacity="0.55"/>
<rect x="932" y="165.8" width="186" height="3.4" opacity="0.9"/>
<rect x="1330" y="165.8" width="197" height="3.4" opacity="0.85"/>
<rect x="1750" y="166.3" width="197" height="3.4" opacity="0.9"/>
<rect x="98" y="298.3" width="137" height="3.4" opacity="0.45"/>
<rect x="612" y="298.3" width="88" height="3.4" opacity="0.45"/>
<rect x="1328" y="297.8" width="194" height="3.4" opacity="0.85"/>
<rect x="1746" y="298.8" width="64" height="3.4" opacity="0.85"/>
<rect x="1810" y="298.8" width="135" height="3.4" opacity="0.4"/>
<rect x="1134" y="201.3" width="183" height="3.4" opacity="0.9"/>
<rect x="1965" y="203.3" width="307" height="3.4" opacity="0.45"/>
<rect x="1560" y="258.3" width="185" height="3.4" opacity="0.4"/>
<rect x="1545" y="126.1" width="195" height="3.4" opacity="0.8"/>
<rect x="300" y="202.3" width="285" height="3.4" opacity="0.3"/>
</g>
<g filter="url(#bR)">
<rect x="930" y="296.5" width="182" height="5" fill="#b4143c"/>
<rect x="300" y="334" width="286" height="4" fill="#a8124c"/>
<rect x="1956" y="333.8" width="300" height="6.5" fill="#d4182c"/>
<rect x="728" y="353.2" width="86" height="3.6" fill="#b01444"/>
<rect x="1126" y="427" width="210" height="5" fill="#b81440"/>
<rect x="1544" y="481.5" width="194" height="5" fill="#b01440"/>
</g>
<g filter="url(#bP)" fill="#c00838">
<rect x="96" y="518.5" width="178" height="12"/>
<rect x="288" y="554.2" width="294" height="16.5"/>
<rect x="596" y="519" width="123" height="12"/>
<rect x="720" y="571.2" width="112" height="18"/>
<rect x="924" y="516.8" width="194" height="14"/>
<rect x="1324" y="517.3" width="192" height="14"/>
<rect x="1746" y="520" width="190" height="11"/>
<rect x="1948" y="554.7" width="302" height="16"/>
</g>
<g filter="url(#bR2)" fill="#f61a04">
<rect x="98" y="521" width="174" height="7" fill="#dc1808"/>
<rect x="290" y="557.8" width="290" height="9.5" fill="#f61a04"/>
<rect x="598" y="521.5" width="119" height="7" fill="#dc1808"/>
<rect x="722" y="575" width="108" height="10.5" fill="#f81c04"/>
<rect x="926" y="519.8" width="190" height="8" fill="#e81a06"/>
<rect x="1326" y="520.5" width="188" height="7.5" fill="#d81808"/>
<rect x="1748" y="522.5" width="186" height="6" fill="#d41808"/>
<rect x="1950" y="558" width="298" height="9.5" fill="#f61a04"/>
<polyline points="268,526.5 271,528 274,538 277,545 280,549 283,546 286,552 288,559 291,564 294,564.5 297,563" fill="none" stroke="#b81030" stroke-width="10" stroke-linejoin="round" stroke-linecap="round"/>
<polyline points="810,582 816,580.5 820,577 823,578 826,574 828,572" fill="none" stroke="#b81030" stroke-width="10" stroke-linejoin="round" stroke-linecap="round"/>
<polyline points="928,524.5 932,523 936,525.5 940,523 946,525.5" fill="none" stroke="#b81030" stroke-width="10" stroke-linejoin="round" stroke-linecap="round"/>
<polyline points="1108,525.5 1112,521.5 1116,524 1121,522 1124,514" fill="none" stroke="#b81030" stroke-width="10" stroke-linejoin="round" stroke-linecap="round"/>
<polyline points="1510,526.5 1514,520.5 1518,522 1522,527 1526,523.5 1530,520" fill="none" stroke="#b81030" stroke-width="10" stroke-linejoin="round" stroke-linecap="round"/>
<polyline points="1930,527 1935,529 1939,534 1942,536.5 1945,533.5 1947,541 1949,553 1952,563 1956,564.5" fill="none" stroke="#b81030" stroke-width="10" stroke-linejoin="round" stroke-linecap="round"/>
<polyline points="2244,563.5 2248,560 2251,548 2254,553 2257,557 2261,543 2266,531 2272,525" fill="none" stroke="#b81030" stroke-width="10" stroke-linejoin="round" stroke-linecap="round"/>
</g>
<g filter="url(#bB)"><ellipse cx="1756" cy="486" rx="12" ry="3.5" fill="#a01048" opacity=".8"/><ellipse cx="98" cy="260" rx="14" ry="1.6" fill="#b01048" opacity=".9"/></g>
<g filter="url(#bB)"><ellipse cx="99" cy="487" rx="12" ry="6.5" fill="#c01040" opacity=".85"/></g>
<polyline points="98,524 100,526.5 268,526.5 271,528" fill="none" stroke="#d840f4" stroke-width="3" stroke-linejoin="round" stroke-linecap="round"/>
<polyline points="271,528 274,538 277,545" fill="none" stroke="#d840f4" stroke-width="1.3" stroke-linejoin="round" stroke-linecap="round"/>
<polyline points="277,545 280,549 283,546 286,552" fill="none" stroke="#d840f4" stroke-width="3" stroke-linejoin="round" stroke-linecap="round"/>
<polyline points="286,552 288,559" fill="none" stroke="#d840f4" stroke-width="1.3" stroke-linejoin="round" stroke-linecap="round"/>
<polyline points="288,559 291,564 294,564.5 297,563 578,563 580,560" fill="none" stroke="#d840f4" stroke-width="3" stroke-linejoin="round" stroke-linecap="round"/>
<polyline points="580,560 583,551" fill="none" stroke="#d840f4" stroke-width="1.3" stroke-linejoin="round" stroke-linecap="round"/>
<polyline points="583,551 586,556 589,553 592,555 595,550" fill="none" stroke="#d840f4" stroke-width="3" stroke-linejoin="round" stroke-linecap="round"/>
<polyline points="595,550 598,536 600,528" fill="none" stroke="#d840f4" stroke-width="1.3" stroke-linejoin="round" stroke-linecap="round"/>
<polyline points="600,528 603,526.5 702,526.5 705,527 708,524.5 711,530" fill="none" stroke="#d840f4" stroke-width="3" stroke-linejoin="round" stroke-linecap="round"/>
<polyline points="711,530 714,538" fill="none" stroke="#d840f4" stroke-width="1.3" stroke-linejoin="round" stroke-linecap="round"/>
<polyline points="714,538 717,541" fill="none" stroke="#d840f4" stroke-width="3" stroke-linejoin="round" stroke-linecap="round"/>
<polyline points="717,541 719,552 721,566 723,578" fill="none" stroke="#d840f4" stroke-width="1.3" stroke-linejoin="round" stroke-linecap="round"/>
<polyline points="723,578 726,583.5 730,582 810,582 816,580.5 820,577 823,578 826,574 828,572" fill="none" stroke="#d840f4" stroke-width="3" stroke-linejoin="round" stroke-linecap="round"/>
<polyline points="828,572 928,524.5" fill="none" stroke="#d840f4" stroke-width="0.7" stroke-linejoin="round"/>
<polyline points="928,524.5 932,523 936,525.5 940,523 946,525.5 1108,525.5 1112,521.5 1116,524 1121,522" fill="none" stroke="#d840f4" stroke-width="3" stroke-linejoin="round" stroke-linecap="round"/>
<polyline points="1121,522 1124,514 1127,507" fill="none" stroke="#d840f4" stroke-width="1.3" stroke-linejoin="round" stroke-linecap="round"/>
<polyline points="1127,507 1130,480 1133,434" fill="none" stroke="#d840f4" stroke-width="0.7" stroke-linejoin="round"/>
<polyline points="1134,432.5 1152,432.5 1158,431 1296,431 1306,432.5 1318,435" fill="none" stroke="#d840f4" stroke-width="3.2" stroke-linejoin="round" stroke-linecap="round"/>
<polyline points="1318,435 1322,482 1325,522" fill="none" stroke="#d840f4" stroke-width="0.7" stroke-linejoin="round"/>
<polyline points="1326,528 1329,526.5 1510,526.5 1514,520.5 1518,522 1522,527 1526,523.5 1530,520" fill="none" stroke="#d840f4" stroke-width="3" stroke-linejoin="round" stroke-linecap="round"/>
<polyline points="1530,520 1532,510 1533,494" fill="none" stroke="#d840f4" stroke-width="1.3" stroke-linejoin="round" stroke-linecap="round"/>
<polyline points="1533,494 1536,488 1540,486.5 1648,486.5 1652,487.5 1656,486.5 1732,487 1737,488" fill="none" stroke="#d840f4" stroke-width="3" stroke-linejoin="round" stroke-linecap="round"/>
<polyline points="1737,488 1740,498 1743,510 1746,521" fill="none" stroke="#d840f4" stroke-width="1.3" stroke-linejoin="round" stroke-linecap="round"/>
<polyline points="1746,521 1750,526 1756,527 1930,527 1935,529 1939,534 1942,536.5 1945,533.5" fill="none" stroke="#d840f4" stroke-width="3" stroke-linejoin="round" stroke-linecap="round"/>
<polyline points="1945,533.5 1947,541 1949,553 1952,563" fill="none" stroke="#d840f4" stroke-width="1.3" stroke-linejoin="round" stroke-linecap="round"/>
<polyline points="1952,563 1956,564.5 1962,563.5 2244,563.5 2248,560" fill="none" stroke="#d840f4" stroke-width="3" stroke-linejoin="round" stroke-linecap="round"/>
<polyline points="2248,560 2251,548" fill="none" stroke="#d840f4" stroke-width="1.3" stroke-linejoin="round" stroke-linecap="round"/>
<polyline points="2251,548 2254,553 2257,557" fill="none" stroke="#d840f4" stroke-width="3" stroke-linejoin="round" stroke-linecap="round"/>
<polyline points="2257,557 2261,543 2266,531" fill="none" stroke="#d840f4" stroke-width="1.3" stroke-linejoin="round" stroke-linecap="round"/>
<polyline points="2266,531 2272,525" fill="none" stroke="#d840f4" stroke-width="3" stroke-linejoin="round" stroke-linecap="round"/>
<circle r="86.78" fill="none" stroke="#ff3200" stroke-width="6.74" transform="translate(1221.4 439) scale(1.321 1)"/>
<rect x="829" y="560" width="26" height="13" fill="#00001c" opacity=".85"/>
<text x="831.2" y="570" font-size="10.8" font-style="italic" fill="#fff" font-family="Liberation Sans">384</text>
</g>
<rect x="1170" y="128" width="1.4" height="1183" fill="#ececec"/>
<circle cx="1170.7" cy="128" r="2" fill="#fff"/><circle cx="1170.7" cy="1311" r="2" fill="#fff"/>
<rect x="98" y="128" width="1.2" height="1183" fill="#fff"/>
<rect x="91" y="128" width="7.5" height="1.2" fill="#fff"/>
<text x="71.3" y="139" font-size="11" letter-spacing=".35" fill="#eee" font-family="Liberation Sans">1.0</text>
<rect x="91" y="187.9" width="7.5" height="1.2" fill="#fff"/>
<text x="71.3" y="193.8" font-size="11" letter-spacing=".35" fill="#eee" font-family="Liberation Sans">0.9</text>
<rect x="91" y="246.9" width="7.5" height="1.2" fill="#fff"/>
<text x="71.3" y="252.8" font-size="11" letter-spacing=".35" fill="#eee" font-family="Liberation Sans">0.8</text>
<rect x="91" y="305.9" width="7.5" height="1.2" fill="#fff"/>
<text x="71.3" y="311.8" font-size="11" letter-spacing=".35" fill="#eee" font-family="Liberation Sans">0.7</text>
<rect x="91" y="364.9" width="7.5" height="1.2" fill="#fff"/>
<text x="71.3" y="370.8" font-size="11" letter-spacing=".35" fill="#eee" font-family="Liberation Sans">0.6</text>
<rect x="91" y="423.9" width="7.5" height="1.2" fill="#fff"/>
<text x="71.3" y="429.8" font-size="11" letter-spacing=".35" fill="#eee" font-family="Liberation Sans">0.5</text>
<rect x="91" y="482.9" width="7.5" height="1.2" fill="#fff"/>
<text x="71.3" y="488.8" font-size="11" letter-spacing=".35" fill="#eee" font-family="Liberation Sans">0.4</text>
<rect x="91" y="541.9" width="7.5" height="1.2" fill="#fff"/>
<text x="71.3" y="547.8" font-size="11" letter-spacing=".35" fill="#eee" font-family="Liberation Sans">0.3</text>
<rect x="91" y="600.9" width="7.5" height="1.2" fill="#fff"/>
<text x="71.3" y="606.8" font-size="11" letter-spacing=".35" fill="#eee" font-family="Liberation Sans">0.2</text>
<rect x="91" y="659.9" width="7.5" height="1.2" fill="#fff"/>
<text x="71.3" y="665.8" font-size="11" letter-spacing=".35" fill="#eee" font-family="Liberation Sans">0.1</text>
<rect x="91" y="718.9" width="7.5" height="1.2" fill="#fff"/>
<text x="71.3" y="724.8" font-size="11" letter-spacing=".35" fill="#eee" font-family="Liberation Sans">0.0</text>
<rect x="91" y="777.9" width="7.5" height="1.2" fill="#fff"/>
<text x="71.3" y="783.8" font-size="11" letter-spacing=".35" fill="#eee" font-family="Liberation Sans">0.1</text>
<rect x="91" y="836.9" width="7.5" height="1.2" fill="#fff"/>
<text x="71.3" y="842.8" font-size="11" letter-spacing=".35" fill="#eee" font-family="Liberation Sans">0.2</text>
<rect x="91" y="895.9" width="7.5" height="1.2" fill="#fff"/>
<text x="71.3" y="901.8" font-size="11" letter-spacing=".35" fill="#eee" font-family="Liberation Sans">0.3</text>
<rect x="91" y="954.9" width="7.5" height="1.2" fill="#fff"/>
<text x="71.3" y="960.8" font-size="11" letter-spacing=".35" fill="#eee" font-family="Liberation Sans">0.4</text>
<rect x="91" y="1013.9" width="7.5" height="1.2" fill="#fff"/>
<text x="71.3" y="1019.8" font-size="11" letter-spacing=".35" fill="#eee" font-family="Liberation Sans">0.5</text>
<rect x="91" y="1072.9" width="7.5" height="1.2" fill="#fff"/>
<text x="71.3" y="1078.8" font-size="11" letter-spacing=".35" fill="#eee" font-family="Liberation Sans">0.6</text>
<rect x="91" y="1131.9" width="7.5" height="1.2" fill="#fff"/>
<text x="71.3" y="1137.8" font-size="11" letter-spacing=".35" fill="#eee" font-family="Liberation Sans">0.7</text>
<rect x="91" y="1190.9" width="7.5" height="1.2" fill="#fff"/>
<text x="71.3" y="1196.8" font-size="11" letter-spacing=".35" fill="#eee" font-family="Liberation Sans">0.8</text>
<rect x="91" y="1249.9" width="7.5" height="1.2" fill="#fff"/>
<text x="71.3" y="1255.8" font-size="11" letter-spacing=".35" fill="#eee" font-family="Liberation Sans">0.9</text>
<rect x="91" y="1309.6" width="7.5" height="1.2" fill="#fff"/>
<text x="71.3" y="1309" font-size="11" letter-spacing=".35" fill="#eee" font-family="Liberation Sans">1.0</text>
<text x="103.5" y="1303" font-size="11" letter-spacing=".55" fill="#eee" font-family="Liberation Sans">44.88 / 44100Hz</text>
<text x="1165.5" y="1303" font-size="11" fill="#eee" text-anchor="end" letter-spacing=".45" font-family="Liberation Sans">31.997</text>
<text x="1174" y="1303" font-size="11" letter-spacing=".45" fill="#eee" font-family="Liberation Sans">1411072</text>
<rect x="2257.9" y="1296.8" width="14.2" height="14.3" rx="1.5" fill="#000" stroke="#f4f4f4" stroke-width="1.1"/>
<defs><filter id="wb" x="-5%" y="-30%" width="110%" height="160%"><feGaussianBlur stdDeviation=".9"/></filter></defs>
<rect x="2191" y="1297.5" width="65.5" height="12" rx="1.5" fill="#8c8c8c" filter="url(#wb)"/>
<rect x="2192" y="1298.6" width="63.5" height="9.8" fill="#6e6e6e"/>
<rect x="2192.3" y="1299.3" width="4.9" height="8" fill="#9a9a9a"/>
<rect x="2192.8" y="1300.2" width="3.9" height="1.9" fill="#f2f2f2"/>
<rect x="2192.8" y="1302.1" width="3.9" height="4.7" fill="#9ccdff"/>
<rect x="2197.2" y="1299.3" width="4.7" height="8" fill="#9a9a9a"/>
<rect x="2197.7" y="1300.2" width="3.7" height="1.7" fill="#f2f2f2"/>
<rect x="2197.7" y="1301.9" width="3.7" height="4.9" fill="#9ccdff"/>
<rect x="2202.4" y="1299.3" width="5.5" height="8" fill="#9a9a9a"/>
<rect x="2202.9" y="1300.2" width="4.5" height="2.1" fill="#f2f2f2"/>
<rect x="2202.9" y="1302.3" width="4.5" height="4.5" fill="#9ccdff"/>
<rect x="2209.2" y="1299.3" width="5.7" height="8" fill="#9a9a9a"/>
<rect x="2209.7" y="1300.2" width="4.7" height="2.8" fill="#f2f2f2"/>
<rect x="2209.7" y="1303" width="4.7" height="3.8" fill="#9ccdff"/>
<rect x="2216.5" y="1299.3" width="6.1" height="8" fill="#9a9a9a"/>
<rect x="2217" y="1300.2" width="5.1" height="3" fill="#f2f2f2"/>
<rect x="2217" y="1303.2" width="5.1" height="3.6" fill="#9ccdff"/>
<rect x="2224.6" y="1299.3" width="6.1" height="8" fill="#9a9a9a"/>
<rect x="2225.1" y="1300.2" width="5.1" height="3.8" fill="#f2f2f2"/>
<rect x="2225.1" y="1304" width="5.1" height="2.8" fill="#9ccdff"/>
<rect x="2232.3" y="1299.3" width="6.5" height="8" fill="#9a9a9a"/>
<rect x="2232.8" y="1300.2" width="5.5" height="4" fill="#f2f2f2"/>
<rect x="2232.8" y="1304.2" width="5.5" height="2.6" fill="#9ccdff"/>
<rect x="2240.2" y="1299.3" width="4.6" height="8" fill="#9a9a9a"/>
<rect x="2240.7" y="1300.2" width="3.6" height="4.7" fill="#f2f2f2"/>
<rect x="2240.7" y="1304.9" width="3.6" height="1.9" fill="#9ccdff"/>
<rect x="2246.2" y="1299.3" width="4.8" height="8" fill="#9a9a9a"/>
<rect x="2246.7" y="1300.2" width="3.8" height="4.9" fill="#f2f2f2"/>
<rect x="2246.7" y="1305.1" width="3.8" height="1.7" fill="#9ccdff"/>
<rect x="2251.7" y="1299.3" width="3.6" height="8" fill="#9a9a9a"/>
<rect x="2252.2" y="1300.2" width="2.6" height="5.5" fill="#f2f2f2"/>
<rect x="2252.2" y="1305.7" width="2.6" height="1.1" fill="#9ccdff"/>
<rect x="2194.2" y="1300" width="1.2" height="7" fill="#555"/>
</svg>
<svg id="ov" viewBox="68 1311 2206 44" width="2206" height="44">
<rect x="68" y="1315" width="2205.5" height="40" fill="#f8f8f8"/>
<rect x="68" y="1322.8" width="2205.5" height="1.2" fill="#f2f2f2"/>
<rect x="68" y="1330.3" width="2205.5" height="1.2" fill="#f2f2f2"/>
<rect x="68" y="1339.3" width="2205.5" height="1.2" fill="#f2f2f2"/>
<rect x="68" y="1346.8" width="2205.5" height="1.2" fill="#f2f2f2"/>
<rect x="68" y="1334.7" width="137" height=".8" fill="#e4b0f4"/>
<rect x="205" y="1334.6" width="1822" height="1" fill="#dfa0f2"/>
<rect x="2026" y="1334.4" width="112" height="1.4" fill="#dc98f0"/>
<rect x="2138" y="1334.7" width="136" height=".8" fill="#e8c0f6"/>
<rect x="233" y="1332.5" width="27.5" height="5.2" rx="2" fill="#ecc2f8" stroke="#d47cf0" stroke-width=".8"/>
<rect x="263.5" y="1334.1" width="30.5" height="2" fill="#d680f2"/>
<rect x="296" y="1333.7" width="27.6" height="2.8" fill="#d680f2"/>
<rect x="328" y="1333.9" width="26" height="2.4" fill="#d680f2"/>
<rect x="360.5" y="1334.1" width="2.5" height="2" fill="#d680f2"/>
<rect x="388" y="1334.1" width="71.5" height="2" fill="#d680f2"/>
<rect x="447" y="1333.6" width="12.5" height="3" fill="#d680f2"/>
<rect x="461" y="1333.1" width="17.5" height="4" rx="2" fill="#ecc2f8" stroke="#d47cf0" stroke-width=".8"/>
<rect x="497.5" y="1333.7" width="29.5" height="2.8" fill="#d680f2"/>
<rect x="535.5" y="1334.2" width="49.5" height="1.8" fill="#d680f2"/>
<rect x="587" y="1333.6" width="14" height="3" fill="#d680f2"/>
<rect x="606" y="1334.1" width="9.5" height="2" fill="#d680f2"/>
<rect x="619" y="1334.1" width="13.5" height="2" fill="#d680f2"/>
<rect x="636" y="1334.1" width="29" height="2" fill="#d680f2"/>
<rect x="668" y="1332.6" width="65" height="5" rx="2" fill="#ecc2f8" stroke="#d47cf0" stroke-width=".8"/>
<rect x="735" y="1333.3" width="11.7" height="3.6" rx="1.8" fill="#ecc2f8" stroke="#d47cf0" stroke-width=".8"/>
<rect x="768" y="1332.3" width="29" height="5.6" rx="2" fill="#ecc2f8" stroke="#d47cf0" stroke-width=".8"/>
<rect x="801" y="1334.1" width="2" height="2" fill="#d680f2"/>
<rect x="829" y="1333.9" width="34.5" height="2.4" fill="#d680f2"/>
<rect x="868" y="1334" width="29" height="2.2" fill="#d680f2"/>
<rect x="901.5" y="1334.1" width="2.5" height="2" fill="#d680f2"/>
<rect x="929" y="1334" width="57" height="2.2" fill="#d680f2"/>
<rect x="988" y="1332.9" width="31.5" height="4.4" rx="2" fill="#ecc2f8" stroke="#d47cf0" stroke-width=".8"/>
<rect x="1037.5" y="1333.7" width="27.5" height="2.8" fill="#d680f2"/>
<rect x="1070.5" y="1334.1" width="47" height="2" fill="#d680f2"/>
<rect x="1120" y="1333.5" width="16" height="3.2" fill="#d680f2"/>
<rect x="1139" y="1334.1" width="27" height="2" fill="#d680f2"/>
<rect x="1168" y="1334.1" width="27" height="2" fill="#d680f2"/>
<rect x="1198" y="1332.4" width="59.5" height="5.4" rx="2" fill="#ecc2f8" stroke="#d47cf0" stroke-width=".8"/>
<rect x="1259" y="1333.4" width="12" height="3.4" rx="1.7" fill="#ecc2f8" stroke="#d47cf0" stroke-width=".8"/>
<rect x="1290" y="1333.7" width="29" height="2.8" rx="1.4" fill="#ecc2f8" stroke="#d47cf0" stroke-width=".8"/>
<rect x="1322" y="1334.1" width="2.5" height="2" fill="#d680f2"/>
<rect x="1330" y="1334.2" width="19" height="1.8" fill="#d680f2"/>
<rect x="1353" y="1333.6" width="27" height="3" fill="#d680f2"/>
<rect x="1382.5" y="1334.2" width="27.5" height="1.8" fill="#d680f2"/>
<rect x="1756.5" y="1333.9" width="15" height="2.4" fill="#d680f2"/>
<rect x="1773" y="1332.5" width="11" height="5.2" rx="2" fill="#ecc2f8" stroke="#d47cf0" stroke-width=".8"/>
<rect x="1800" y="1331.7" width="30" height="6.8" rx="2" fill="#ecc2f8" stroke="#d47cf0" stroke-width=".8"/>
<rect x="1831.5" y="1332.7" width="27.5" height="4.8" rx="2" fill="#ecc2f8" stroke="#d47cf0" stroke-width=".8"/>
<rect x="1861.5" y="1332.8" width="30" height="4.6" rx="2" fill="#ecc2f8" stroke="#d47cf0" stroke-width=".8"/>
<rect x="1893" y="1333.6" width="30" height="3" rx="1.5" fill="#ecc2f8" stroke="#d47cf0" stroke-width=".8"/>
<rect x="1924" y="1333.8" width="17.5" height="2.6" fill="#d680f2"/>
<rect x="1958" y="1333.4" width="68.5" height="3.4" fill="#d680f2"/>
<rect x="1410.5" y="1320.5" width="344" height="29.5" rx="4" fill="#fff" stroke="#6e6e6e" stroke-width="1.5"/>
<rect x="1412" y="1334.5" width="341" height="1.2" fill="#cc50f0"/>
<rect x="1412.5" y="1333.8" width="32.5" height="2.6" fill="#c848f0"/>
<rect x="1446" y="1333.4" width="45" height="3.4" fill="#c848f0"/>
<rect x="1495" y="1333.6" width="32.5" height="3" fill="#c848f0"/>
<rect x="1513" y="1332.5" width="14" height="5.2" rx="2" fill="#e0a0f6" stroke="#c040ee" stroke-width=".8"/>
<rect x="1545" y="1333.2" width="30" height="3.8" fill="#c848f0"/>
<rect x="1576" y="1333.5" width="29" height="3.2" fill="#c848f0"/>
<rect x="1607.5" y="1333.2" width="30" height="3.8" fill="#c848f0"/>
<rect x="1662" y="1334.3" width="8" height="1.6" fill="#c848f0"/>
<rect x="1671.5" y="1333.5" width="32.5" height="3.2" fill="#c848f0"/>
<rect x="1705" y="1332.9" width="48" height="4.4" fill="#c848f0"/>
<rect x="1994" y="1315.5" width="3.2" height="39" fill="#fff" stroke="#666" stroke-width=".9"/>
</svg>
<div id="pn"></div>
<div id="tabs"></div>
<div id="tab4"></div>
<div class="tdv" style="left:2280px"></div><div class="tdv" style="left:2509px"></div>
<div class="tn" style="left:2315px">3</div><div class="tn" style="left:2391px;color:#fff">4</div><div class="tn" style="left:2468px">5</div><div class="tn" style="left:2544px">6</div>
<div class="sb" style="left:2572px"></div><div class="sb" style="left:2587px"></div>
<svg id="pni" viewBox="2272 118 340 30" width="340" height="30"><path d="M2274.5 123.5l2 4l-2 4M2274.5 133l2 4l-2 4" fill="none" stroke="#d8d8d8" stroke-width="1"/><path d="M2294.5 132h2.2l1-3l1.2 6l1.3-9.5l1.4 12.5l1.3-10l1.2 6.5l1-4l0.8 1.5h1.6" fill="none" stroke="#333" stroke-width="1.1" stroke-linejoin="round"/><rect x="2372.5" y="128" width="10.5" height="8.5" fill="#5f86b8" opacity=".55"/><rect x="2373.5" y="128.8" width="5" height="2.2" rx="1" fill="#e8c040" stroke="#665" stroke-width=".4"/><rect x="2376" y="132" width="6.5" height="2.6" rx="1" fill="#d02020" stroke="#611" stroke-width=".4"/><path d="M2448.5 130.5v6h11" fill="none" stroke="#9fd0e0" stroke-width="1"/><path d="M2450 134.5l2.5-2.2l2 1.2l4-4" fill="none" stroke="#555" stroke-width="1"/><path d="M2524.5 131v5.5h11" fill="none" stroke="#9fd0e0" stroke-width="1"/><rect x="2526" y="126.8" width="8.6" height="8" fill="#1a1208"/><path d="M2527 128.6h5.6M2527 130.8h6.6M2527 133h5.6" stroke="#f0901a" stroke-width="1"/><path d="M2582.8 128.8l-5 4.5l5 4.5" fill="none" stroke="#111" stroke-width="1.9"/><path d="M2592.4 128.8l5 4.5l-5 4.5" fill="none" stroke="#111" stroke-width="1.9"/></svg>
<div class="lb" style="left:2287px;top:163px">Colour</div>
<div class="lb" style="left:2287px;top:196px">Scale</div>
<div class="cb" style="left:2335px;top:158px;width:249px;height:20px"></div>
<div id="sw"></div><div class="ct" style="left:2363px;top:161px">Green</div>
<div class="bb" style="left:2566px;top:160px"></div>
<div class="cb" style="left:2335px;top:191px;width:121px;height:20px"></div>
<div class="ct" style="left:2343px;top:194px">Auto-Align</div>
<div class="bb" style="left:2438px;top:193px"></div>
<div class="cb" style="left:2463px;top:193px;width:123px;height:20px"></div>
<div class="ct" style="left:2465px;top:195px">Hz</div>
<div class="bb" style="left:2568px;top:195px"></div>
<svg id="cbi" viewBox="2430 155 160 60" width="160" height="60"><path d="M2570.8 166l3 -3l3 3M2570.8 170l3 3l3 -3" fill="none" stroke="#fff" stroke-width="1.4" stroke-linecap="round" stroke-linejoin="round"/><path d="M2442.8 199.2l3 -3l3 3M2442.8 203.2l3 3l3 -3" fill="none" stroke="#fff" stroke-width="1.4" stroke-linecap="round" stroke-linejoin="round"/><path d="M2572.6 201.5l3.4 3.4l3.4-3.4" fill="none" stroke="#fff" stroke-width="1.6" stroke-linecap="round" stroke-linejoin="round"/></svg>
<div id="gb"></div>
<div class="btn" style="left:2294px;top:1269px;background:#f6f6f6"></div>
<div class="btn" style="left:2328px;top:1269px;background:linear-gradient(#cacaca,#b2b2b2);border-color:#a4a4a4"></div>
<div class="btn" style="left:2362px;top:1269px;background:linear-gradient(#fcfcfc,#ebebeb)"></div>
<div class="lb" style="left:2525px;top:1275px">Show</div>
<div id="led"></div>
<div id="bbtn"></div>
<svg id="bti" viewBox="2272 1255 340 110" width="340" height="110"><rect x="2297" y="1272.2" width="20" height="19.5" fill="#b4b4b4"/><path d="M2307 1278v12" stroke="#300" stroke-width="1"/><circle cx="2307" cy="1278.3" r="1.5" fill="#ff1800"/><circle cx="2307" cy="1282.4" r="1.5" fill="#b81000"/><circle cx="2307" cy="1286.2" r="1.5" fill="#5a0800"/><circle cx="2307" cy="1290" r="1.5" fill="#000"/><path d="M2335.2 1281.8l4.6-5.2q5.6 0 5.6 5.2q0 5.2-5.6 5.2z" fill="#cfe8f0" stroke="#7aa" stroke-width=".8"/><circle cx="2341" cy="1281.8" r="2.5" fill="#e8f6fa" stroke="#7aa" stroke-width=".7"/><path d="M2369.7 1277v9" stroke="#666" stroke-width=".8"/><ellipse cx="2369.7" cy="1280.5" rx="1" ry="1.7" fill="#eee" stroke="#555" stroke-width=".7"/><path d="M2373.6 1277v9" stroke="#666" stroke-width=".8"/><ellipse cx="2373.6" cy="1279" rx="1" ry="1.7" fill="#eee" stroke="#555" stroke-width=".7"/><path d="M2377.6 1277v9" stroke="#666" stroke-width=".8"/><ellipse cx="2377.6" cy="1279" rx="1" ry="1.7" fill="#eee" stroke="#555" stroke-width=".7"/><path d="M2381.5 1277v9" stroke="#666" stroke-width=".8"/><ellipse cx="2381.5" cy="1280" rx="1" ry="1.7" fill="#eee" stroke="#555" stroke-width=".7"/><rect x="2569" y="1320" width="30" height="30" fill="#b4b4b4"/><path d="M2584.1 1329v18" stroke="#300" stroke-width="1.4"/><circle cx="2584.1" cy="1328.7" r="2.4" fill="#ff1800"/><circle cx="2584.1" cy="1334.9" r="2.4" fill="#b81000"/><circle cx="2584.1" cy="1341.1" r="2.4" fill="#5a0800"/><circle cx="2584.1" cy="1347" r="2.4" fill="#000"/><path d="M2297.6 1318.7A15.7 15.7 0 0 1 2308.7 1345.5" fill="none" stroke="#e2e2e2" stroke-width="5"/><path d="M2298.52 1321.23L2298.83 1316.84" stroke="#c4c4c4" stroke-width=".6"/><path d="M2299.89 1321.4L2300.66 1317.07" stroke="#c4c4c4" stroke-width=".6"/><path d="M2301.24 1321.71L2302.45 1317.48" stroke="#c4c4c4" stroke-width=".6"/><path d="M2302.54 1322.16L2304.19 1318.08" stroke="#c4c4c4" stroke-width=".6"/><path d="M2303.8 1322.75L2305.86 1318.86" stroke="#c4c4c4" stroke-width=".6"/><path d="M2304.98 1323.46L2307.44 1319.81" stroke="#c4c4c4" stroke-width=".6"/><path d="M2306.08 1324.29L2308.91 1320.92" stroke="#c4c4c4" stroke-width=".6"/><path d="M2307.1 1325.23L2310.26 1322.17" stroke="#c4c4c4" stroke-width=".6"/><path d="M2308 1326.27L2311.47 1323.56" stroke="#c4c4c4" stroke-width=".6"/><path d="M2308.79 1327.41L2312.53 1325.07" stroke="#c4c4c4" stroke-width=".6"/><path d="M2309.46 1328.61L2313.42 1326.68" stroke="#c4c4c4" stroke-width=".6"/><path d="M2310 1329.89L2314.14 1328.38" stroke="#c4c4c4" stroke-width=".6"/><path d="M2310.41 1331.21L2314.68 1330.14" stroke="#c4c4c4" stroke-width=".6"/><path d="M2310.67 1332.56L2315.03 1331.95" stroke="#c4c4c4" stroke-width=".6"/><path d="M2310.79 1333.94L2315.19 1333.79" stroke="#c4c4c4" stroke-width=".6"/><path d="M2310.77 1335.32L2315.16 1335.63" stroke="#c4c4c4" stroke-width=".6"/><path d="M2310.6 1336.69L2314.93 1337.46" stroke="#c4c4c4" stroke-width=".6"/><path d="M2310.29 1338.04L2314.52 1339.25" stroke="#c4c4c4" stroke-width=".6"/><path d="M2309.84 1339.34L2313.92 1340.99" stroke="#c4c4c4" stroke-width=".6"/><path d="M2309.25 1340.6L2313.14 1342.66" stroke="#c4c4c4" stroke-width=".6"/><path d="M2308.54 1341.78L2312.19 1344.24" stroke="#c4c4c4" stroke-width=".6"/><path d="M2307.71 1342.88L2311.08 1345.71" stroke="#c4c4c4" stroke-width=".6"/><path d="M2286.5 1345.5A15.7 15.7 0 0 1 2297.6 1318.7" fill="none" stroke="#a6cdfd" stroke-width="5"/><path d="M2283.41 1346.73A18.8 18.8 0 1 1 2311.79 1346.73" fill="none" stroke="#1a1a1a" stroke-width="1.3"/><path d="M2285.15 1346.85L2281.2 1350.8" stroke="#111" stroke-width="1.3"/><path d="M2310.05 1346.85L2314 1350.8" stroke="#111" stroke-width="1.3"/><circle cx="2297.6" cy="1334.4" r="13" fill="#fff" stroke="#c4c4c4" stroke-width=".7"/><path d="M2297.6 1323.2v11.6" stroke="#808080" stroke-width="1.8"/></svg>
</body></html>
